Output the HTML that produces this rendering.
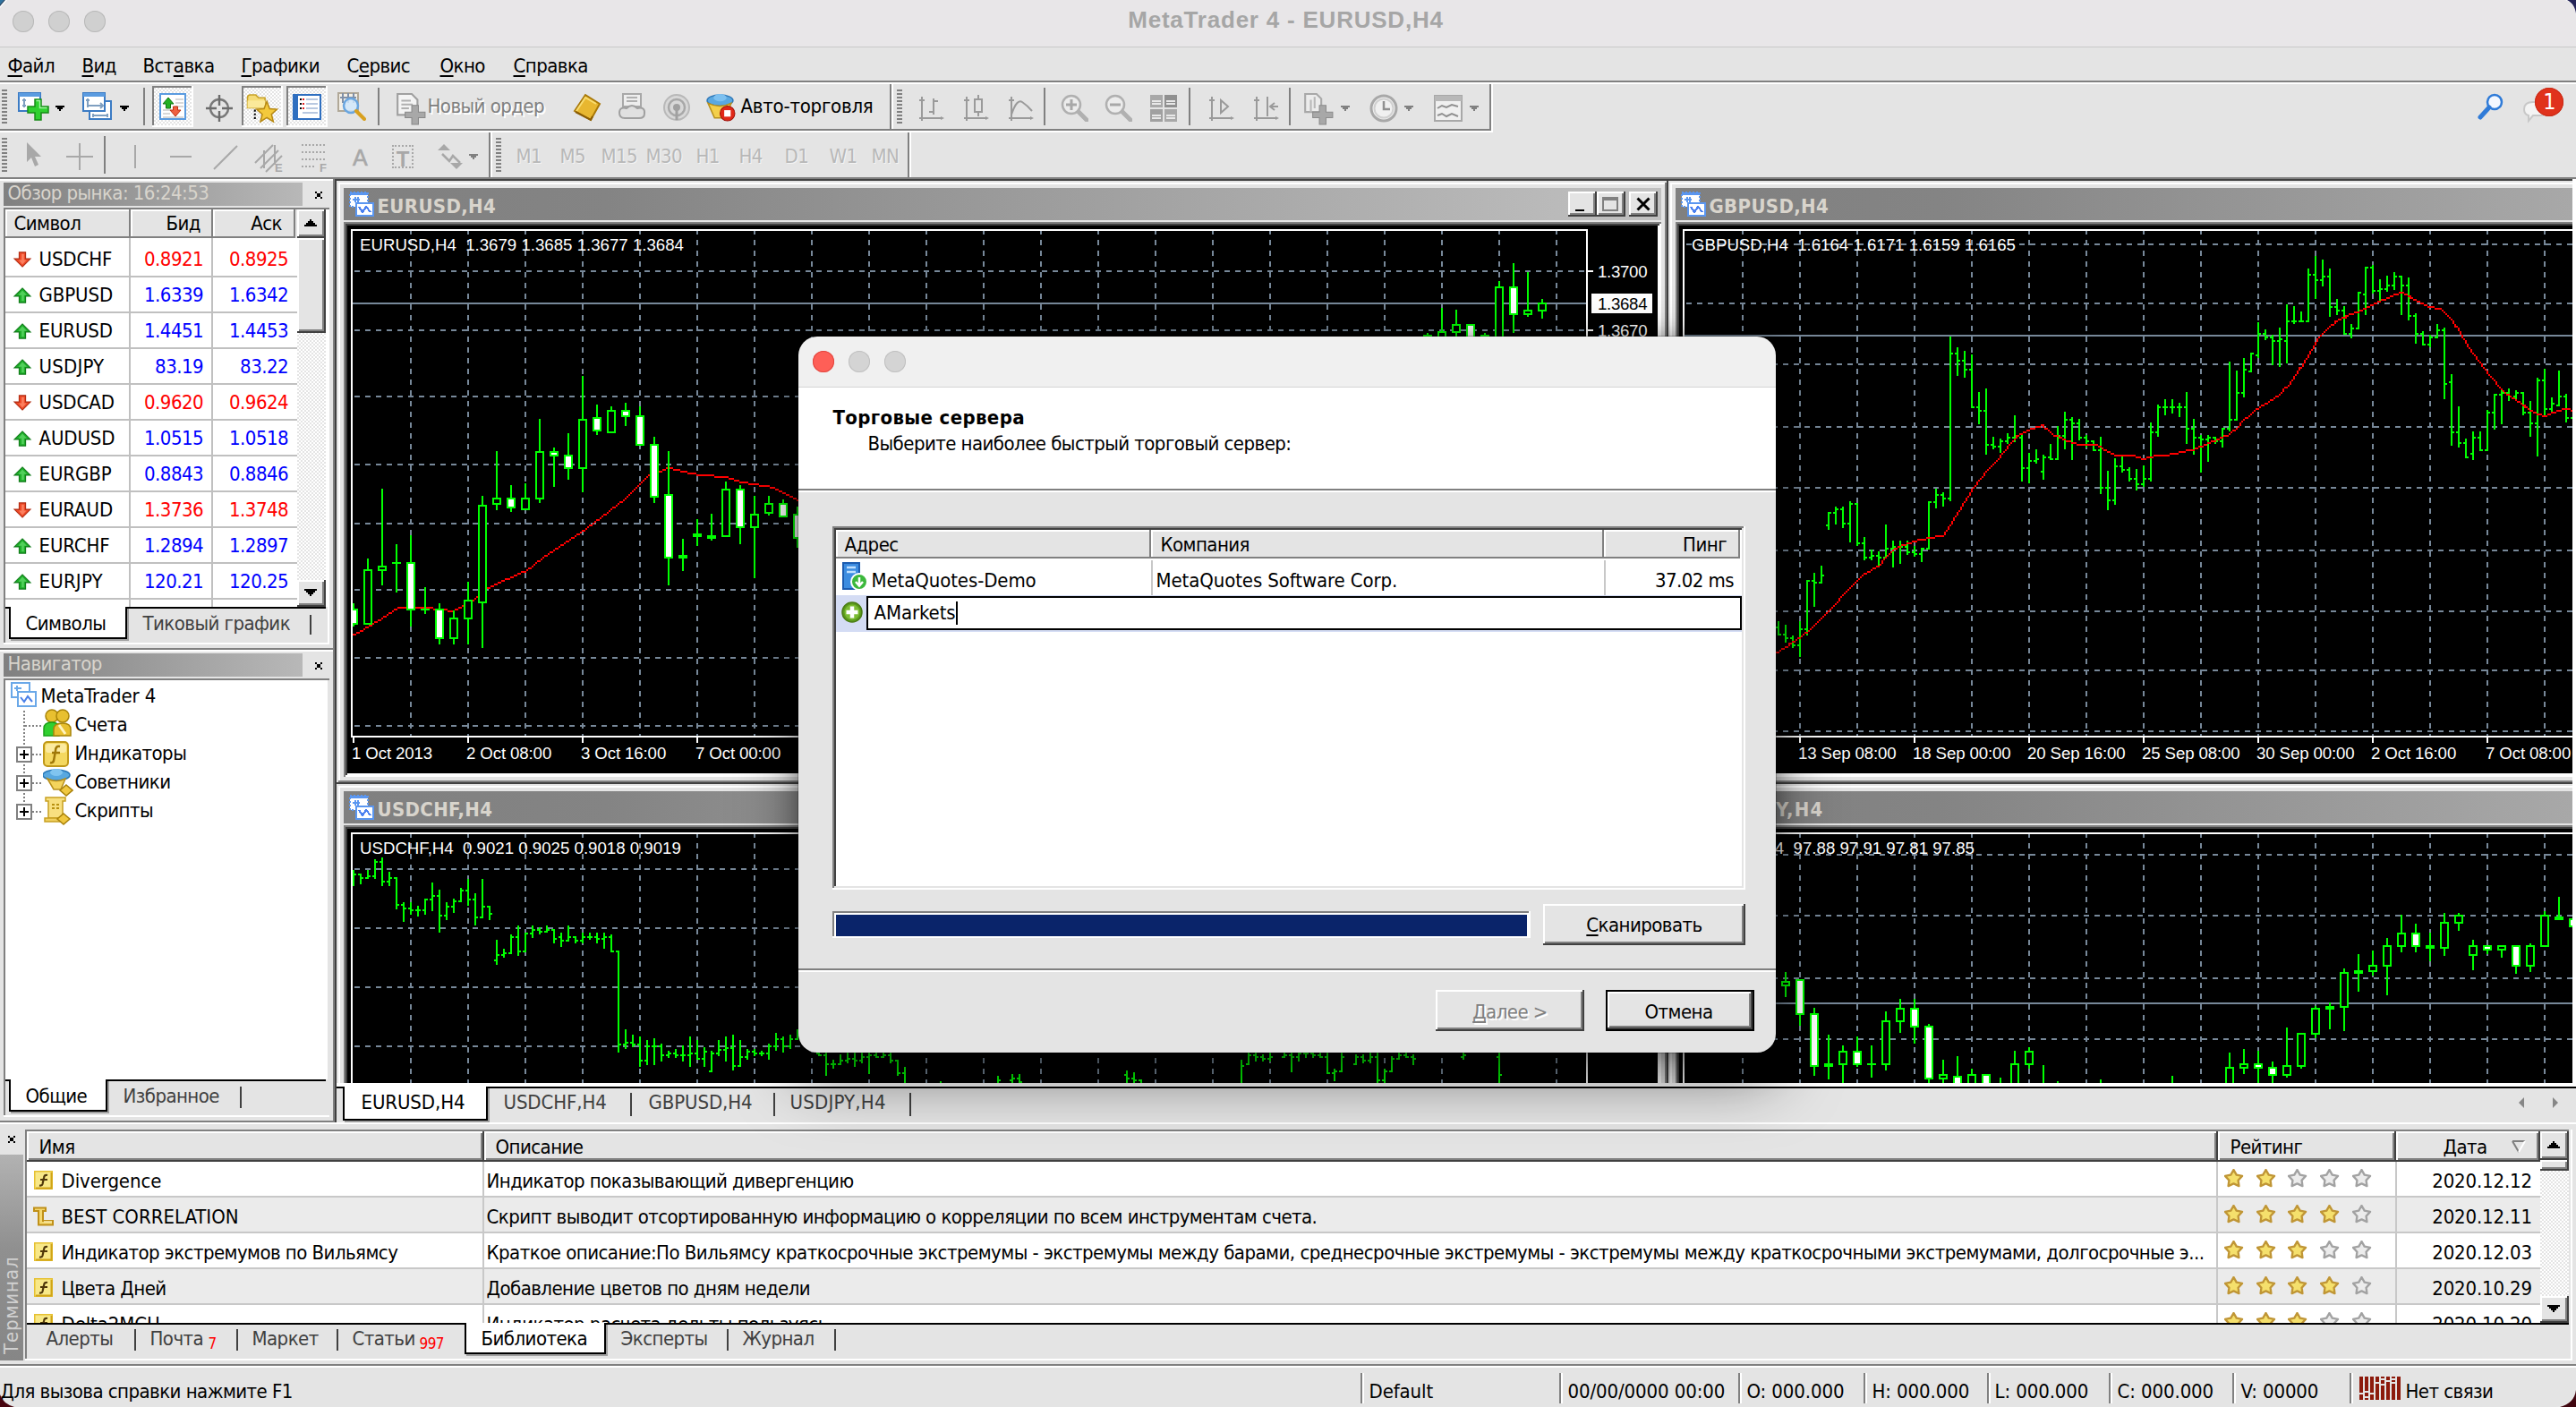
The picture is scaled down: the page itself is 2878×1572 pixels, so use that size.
<!DOCTYPE html><html lang="ru"><head><meta charset="utf-8"><title>MetaTrader 4 - EURUSD,H4</title><style>
html,body{margin:0;padding:0}
body{width:2878px;height:1572px;overflow:hidden;position:relative;background:#e4e4e4;font-family:'DejaVu Sans Condensed','DejaVu Sans','Liberation Sans',sans-serif;font-size:22px;color:#000}
div,svg{position:absolute;box-sizing:content-box}
.t{white-space:pre;line-height:26px;letter-spacing:-0.55px}
.u{text-decoration:underline;text-decoration-thickness:2px;text-underline-offset:3px;text-decoration-skip-ink:none}
</style></head><body><div style="left:0px;top:0px;width:2878px;height:52px;background:#e8e6e8;"></div><div style="left:0px;top:52px;width:2878px;height:1px;background:#c9c9c9;"></div><svg style="left:0px;top:0px;" width="12" height="12" viewBox="0 0 12 12"><path d="M0 0H8L0 9Z" fill="#fff"/><path d="M0 0H6L0 7Z" fill="#2f4a66"/><path d="M0 0H4.5L0 5Z" fill="#2f73a0"/></svg><svg style="left:2862px;top:0px;" width="16" height="20" viewBox="0 0 16 20"><path d="M4 0H16V18C16 9 12 3 4 0Z" fill="#fff"/><path d="M6 0H16V15C15 8 12 3 6 0Z" fill="#232356"/></svg><div style="left:14px;top:12px;width:24px;height:24px;border-radius:50%;background:#d0d0d0;box-shadow:inset 0 0 0 1px #b9b9b9;"></div><div style="left:54px;top:12px;width:24px;height:24px;border-radius:50%;background:#d0d0d0;box-shadow:inset 0 0 0 1px #b9b9b9;"></div><div style="left:94px;top:12px;width:24px;height:24px;border-radius:50%;background:#d0d0d0;box-shadow:inset 0 0 0 1px #b9b9b9;"></div><div class="t" style="top:7.4px;font-size:26px;line-height:31px;color:#a6a6a6;font-family:'Liberation Sans','DejaVu Sans',sans-serif;font-weight:700;letter-spacing:0.78px;left:936.5px;width:1000px;text-align:center;">MetaTrader 4 - EURUSD,H4</div><div class="t" style="top:61.0px;font-size:22px;line-height:26px;color:#000;left:8.5px;"><span class="u">Ф</span>айл</div><div class="t" style="top:61.0px;font-size:22px;line-height:26px;color:#000;left:91.5px;"><span class="u">В</span>ид</div><div class="t" style="top:61.0px;font-size:22px;line-height:26px;color:#000;left:159.5px;">Вст<span class="u">а</span>вка</div><div class="t" style="top:61.0px;font-size:22px;line-height:26px;color:#000;left:269.5px;"><span class="u">Г</span>рафики</div><div class="t" style="top:61.0px;font-size:22px;line-height:26px;color:#000;left:387.5px;">С<span class="u">е</span>рвис</div><div class="t" style="top:61.0px;font-size:22px;line-height:26px;color:#000;left:491.5px;"><span class="u">О</span>кно</div><div class="t" style="top:61.0px;font-size:22px;line-height:26px;color:#000;left:573.5px;"><span class="u">С</span>правка</div><div style="left:0px;top:90px;width:2878px;height:2px;background:#808080;"></div><div style="left:0px;top:92px;width:2878px;height:2px;background:#fff;"></div><div style="left:0px;top:144px;width:1666px;height:2px;background:#808080;"></div><div style="left:0px;top:146px;width:1668px;height:2px;background:#fff;"></div><div style="left:1666px;top:144px;width:1212px;height:2px;background:#e4e4e4;"></div><div style="left:994px;top:94px;width:2px;height:50px;background:#808080;"></div><div style="left:996px;top:94px;width:2px;height:50px;background:#fff;"></div><div style="left:1664px;top:94px;width:2px;height:50px;background:#808080;"></div><div style="left:1666px;top:94px;width:2px;height:52px;background:#fff;"></div><div style="left:2px;top:100px;width:6px;height:38px;background:repeating-linear-gradient(#808080 0 2px,transparent 2px 4px);"></div><svg style="left:20px;top:103px;" width="36" height="33" viewBox="0 0 36 33"><rect x="1" y="1" width="24" height="20" fill="#fff" stroke="#3b7bc4" stroke-width="2"/><rect x="1" y="1" width="24" height="4" fill="#5a9be0"/><path d="M7 7V17M5 9H9M5 15H9" stroke="#7f9fc0" stroke-width="2"/><path d="M19 8H26V16H34V23H26V31H19V23H11V16H19Z" fill="#2fd02f" stroke="#178a17" stroke-width="1.5"/><path d="M20.5 9.5H24.5V17.5H32.5" stroke="#9df59d" stroke-width="1.5" fill="none"/></svg><svg style="left:62px;top:118px;shape-rendering:crispEdges;" width="10" height="6" viewBox="0 0 10 6"><path d="M0 0H10V2H8V4H6V6H4V4H2V2H0Z" fill="#000"/></svg><svg style="left:92px;top:103px;" width="34" height="32" viewBox="0 0 34 32"><rect x="8" y="10" width="24" height="20" fill="#fff" stroke="#3b7bc4" stroke-width="2"/><path d="M12 26H28M12 24V28M28 24V28" stroke="#7f9fc0" stroke-width="2"/><rect x="1" y="1" width="24" height="20" fill="#fff" stroke="#3b7bc4" stroke-width="2"/><rect x="1" y="1" width="24" height="4" fill="#5a9be0"/><path d="M6 7V17M4 9H8M6 15H22M20 12L23 15L20 18" stroke="#7f9fc0" stroke-width="2" fill="none"/></svg><svg style="left:134px;top:118px;shape-rendering:crispEdges;" width="10" height="6" viewBox="0 0 10 6"><path d="M0 0H10V2H8V4H6V6H4V4H2V2H0Z" fill="#000"/></svg><div style="left:160px;top:98px;width:2px;height:42px;background:#808080;"></div><div style="left:170px;top:96px;width:46px;height:46px;background-image:conic-gradient(#fff 25%,#e4e4e4 0 50%,#fff 0 75%,#e4e4e4 0);background-size:4px 4px;box-shadow:inset -2px -2px 0 #fff,inset 2px 2px 0 #808080;"></div><svg style="left:178px;top:104px;" width="30" height="30" viewBox="0 0 30 30"><rect x="1" y="1" width="28" height="28" fill="#fff" stroke="#5a9be0" stroke-width="2"/><path d="M18 7H27M18 11H27M18 15H27M4 19H12M4 23H12M4 27H27" stroke="#d8d8d8" stroke-width="2"/><path d="M10 5L16 12H12.5V17H7.5V12H4Z" fill="#22b022" stroke="#147514" stroke-width="1"/><path d="M18 26L12 19H15.5V15H20.5V19H24Z" fill="#f06040" stroke="#c03010" stroke-width="1"/></svg><svg style="left:229px;top:105px;" width="32" height="32" viewBox="0 0 32 32"><circle cx="16" cy="16" r="10" fill="none" stroke="#787878" stroke-width="2.4"/><path d="M16 1V13M16 19V31M1 16H13M19 16H31" stroke="#6c6c6c" stroke-width="2.4"/></svg><div style="left:270px;top:96px;width:46px;height:46px;background-image:conic-gradient(#fff 25%,#e4e4e4 0 50%,#fff 0 75%,#e4e4e4 0);background-size:4px 4px;box-shadow:inset -2px -2px 0 #fff,inset 2px 2px 0 #808080;"></div><svg style="left:275px;top:103px;" width="36" height="34" viewBox="0 0 34 33"><path d="M1 6Q1 3 4 3H10L13 6H20V17H1Z" fill="#f5dc78" stroke="#c9a227" stroke-width="1.5"/><path d="M1 9H20V17H1Z" fill="#fbe99a"/><path d="M9 19V29" stroke="#000" stroke-width="2" stroke-dasharray="2 2"/><path d="M22 10L25 18L33 18.5L27 24L29 32L22 27.5L15 32L17 24L11 18.5L19 18Z" fill="#f3c93c" stroke="#b88a14" stroke-width="1.5"/></svg><div style="left:320px;top:96px;width:46px;height:46px;background-image:conic-gradient(#fff 25%,#e4e4e4 0 50%,#fff 0 75%,#e4e4e4 0);background-size:4px 4px;box-shadow:inset -2px -2px 0 #fff,inset 2px 2px 0 #808080;"></div><svg style="left:327px;top:104px;" width="32" height="32" viewBox="0 0 32 32"><rect x="1" y="2" width="30" height="27" fill="#fff" stroke="#2f6fc0" stroke-width="2"/><rect x="2" y="3" width="4" height="25" fill="#2f6fc0"/><path d="M8 7H10M8 12H10M8 17H10" stroke="#000" stroke-width="2"/><path d="M11 7H13M11 12H13M11 17H13" stroke="#e02020" stroke-width="2"/><path d="M15 7H28M15 12H28M15 17H28M11 22H28" stroke="#b8c8e0" stroke-width="2"/></svg><svg style="left:377px;top:103px;" width="32" height="32" viewBox="0 0 32 32"><rect x="1" y="1" width="22" height="20" fill="#f4f0e8" stroke="#b0a898" stroke-width="2"/><path d="M6 1V12M12 1V12M18 1V12M3 6H21" stroke="#8090a8" stroke-width="2"/><circle cx="15" cy="15" r="8" fill="#cfe6fa" fill-opacity=".85" stroke="#6aa6e0" stroke-width="2.5"/><path d="M21 21L30 30" stroke="#d8a020" stroke-width="4" stroke-linecap="round"/></svg><div style="left:422px;top:98px;width:2px;height:42px;background:#808080;"></div><svg style="left:442px;top:104px;" width="34" height="36" viewBox="0 0 32 34"><path d="M2 1H17L23 7V23H2Z" fill="#f4f4f4" stroke="#a0a0a0" stroke-width="2"/><path d="M6 8H16M6 12H18M6 16H14" stroke="#b0b0b0" stroke-width="2"/><path d="M17 13H24V20H31V26H24V33H17V26H10V20H17Z" fill="#a8a8a8" stroke="#888" stroke-width="1"/></svg><div class="t" style="top:106.0px;font-size:22px;line-height:26px;color:#808080;left:477.5px;text-shadow:2px 2px 0 #fff;">Новый ордер</div><svg style="left:640px;top:104px;" width="32" height="32" viewBox="0 0 32 32"><path d="M2 20L14 2L30 12L20 30Z" fill="#e8b730" stroke="#a87808" stroke-width="2"/><path d="M4 20L14 5L26 12" fill="none" stroke="#f8dc70" stroke-width="2"/><path d="M3 21L20 30L22 26" fill="none" stroke="#8a5c04" stroke-width="2"/></svg><svg style="left:690px;top:104px;" width="32" height="32" viewBox="0 0 32 32"><rect x="6" y="1" width="20" height="14" fill="#eee" stroke="#a8a8a8" stroke-width="2"/><path d="M10 5H22M10 9H22" stroke="#b0b0b0" stroke-width="2"/><path d="M2 22Q2 15 10 17Q16 11 22 17Q31 15 30 23Q30 28 24 28H8Q2 28 2 22Z" fill="#e0e0e0" stroke="#a0a0a0" stroke-width="2"/></svg><svg style="left:740px;top:104px;" width="32" height="32" viewBox="0 0 32 32"><circle cx="16" cy="16" r="14" fill="#d8d8d8" stroke="#b8b8b8" stroke-width="2"/><circle cx="16" cy="16" r="9" fill="none" stroke="#a8a8a8" stroke-width="2.5"/><circle cx="16" cy="16" r="4" fill="#a0a0a0"/><path d="M16 16V30" stroke="#a0a0a0" stroke-width="3"/></svg><svg style="left:788px;top:103px;" width="34" height="34" viewBox="0 0 33 33"><ellipse cx="16" cy="9" rx="14" ry="6" fill="#5aa8e0" stroke="#2f78b8" stroke-width="1.5"/><ellipse cx="16" cy="6" rx="7" ry="4" fill="#7cc0f0"/><path d="M3 12L10 28H22L28 12Q16 18 3 12Z" fill="#f3cf4a" stroke="#b8901c" stroke-width="1.5"/><circle cx="24" cy="23" r="8" fill="#e02818" stroke="#a01008" stroke-width="1"/><rect x="20.5" y="19.5" width="7" height="7" fill="#fff"/></svg><div class="t" style="top:106.0px;font-size:22px;line-height:26px;color:#000;letter-spacing:-0.22px;left:827.5px;">Авто-торговля</div><div style="left:1002px;top:100px;width:6px;height:38px;background:repeating-linear-gradient(#808080 0 2px,transparent 2px 4px);"></div><svg style="left:1024px;top:104px;" width="32" height="32" viewBox="0 0 32 32"><path d="M3 28H29M6 4V31M3 8H9M19 6V24M14 21H19M19 9H24" stroke="#9a9a9a" stroke-width="2" fill="none"/><path d="M27 26L31 28L27 30Z" fill="#9a9a9a"/></svg><svg style="left:1074px;top:104px;" width="32" height="32" viewBox="0 0 32 32"><path d="M3 28H29M6 4V31M3 8H9M19 2V26" stroke="#9a9a9a" stroke-width="2" fill="none"/><rect x="15" y="7" width="8" height="14" fill="#e4e4e4" stroke="#9a9a9a" stroke-width="2"/><path d="M27 26L31 28L27 30Z" fill="#9a9a9a"/></svg><svg style="left:1124px;top:104px;" width="32" height="32" viewBox="0 0 32 32"><path d="M3 28H29M6 4V31M3 8H9" stroke="#9a9a9a" stroke-width="2" fill="none"/><path d="M6 24Q12 6 18 10T29 20" stroke="#9a9a9a" stroke-width="2" fill="none"/><path d="M27 26L31 28L27 30Z" fill="#9a9a9a"/></svg><div style="left:1166px;top:98px;width:2px;height:42px;background:#808080;"></div><svg style="left:1184px;top:104px;" width="32" height="32" viewBox="0 0 32 32"><circle cx="13" cy="13" r="10" fill="#ececec" stroke="#b0b0b0" stroke-width="2.5"/><path d="M7 13H19" stroke="#a8a8a8" stroke-width="3"/><path d="M13 7V19" stroke="#a8a8a8" stroke-width="3"/><path d="M21 21L30 30" stroke="#b0b0b0" stroke-width="5" stroke-linecap="round"/></svg><svg style="left:1233px;top:104px;" width="32" height="32" viewBox="0 0 32 32"><circle cx="13" cy="13" r="10" fill="#ececec" stroke="#b0b0b0" stroke-width="2.5"/><path d="M7 13H19" stroke="#a8a8a8" stroke-width="3"/><path d="M21 21L30 30" stroke="#b0b0b0" stroke-width="5" stroke-linecap="round"/></svg><svg style="left:1284px;top:105px;" width="32" height="32" viewBox="0 0 32 32"><rect x="1" y="1" width="14" height="14" fill="#a8a8a8"/><rect x="17" y="1" width="14" height="14" fill="#909090"/><rect x="1" y="17" width="14" height="14" fill="#a0a0a0"/><rect x="17" y="17" width="14" height="14" fill="#a8a8a8"/><path d="M3 8H13M19 8H29M3 24H13M19 24H29M3 11H13M19 11H29M3 27H13M19 27H29" stroke="#e8e8e8" stroke-width="2"/></svg><div style="left:1328px;top:98px;width:2px;height:42px;background:#808080;"></div><svg style="left:1348px;top:104px;" width="32" height="32" viewBox="0 0 32 32"><path d="M3 28H29M6 4V31M3 8H9" stroke="#9a9a9a" stroke-width="2" fill="none"/><path d="M16 8L24 15L16 22Z" fill="none" stroke="#9a9a9a" stroke-width="2"/><path d="M27 26L31 28L27 30Z" fill="#9a9a9a"/></svg><svg style="left:1398px;top:104px;" width="32" height="32" viewBox="0 0 32 32"><path d="M3 28H29M6 4V31M3 8H9M18 4V26M30 15H22M26 11L21 15L26 19" stroke="#9a9a9a" stroke-width="2" fill="none"/><path d="M27 26L31 28L27 30Z" fill="#9a9a9a"/></svg><div style="left:1440px;top:98px;width:2px;height:42px;background:#808080;"></div><svg style="left:1456px;top:104px;" width="34" height="36" viewBox="0 0 32 34"><path d="M2 1H14L19 6V20H2Z" fill="#ececec" stroke="#a8a8a8" stroke-width="2"/><path d="M8 7V20M12 4V16" stroke="#b8b8b8" stroke-width="2"/><path d="M17 13H24V20H31V26H24V33H17V26H10V20H17Z" fill="#a8a8a8" stroke="#8c8c8c" stroke-width="1"/></svg><svg style="left:1498px;top:118px;shape-rendering:crispEdges;" width="10" height="6" viewBox="0 0 10 6"><path d="M0 0H10V2H8V4H6V6H4V4H2V2H0Z" fill="#808080"/></svg><svg style="left:1530px;top:105px;" width="32" height="32" viewBox="0 0 32 32"><circle cx="16" cy="16" r="14" fill="#f0f0f0" stroke="#a8a8a8" stroke-width="3"/><circle cx="16" cy="16" r="10.5" fill="none" stroke="#d0d0d0" stroke-width="2"/><path d="M16 8V17H23" stroke="#909090" stroke-width="2.5" fill="none"/></svg><svg style="left:1569px;top:118px;shape-rendering:crispEdges;" width="10" height="6" viewBox="0 0 10 6"><path d="M0 0H10V2H8V4H6V6H4V4H2V2H0Z" fill="#808080"/></svg><svg style="left:1602px;top:105px;" width="32" height="32" viewBox="0 0 32 32"><rect x="1" y="2" width="30" height="28" fill="#f0f0f0" stroke="#a8a8a8" stroke-width="2"/><rect x="1" y="2" width="30" height="6" fill="#b8b8b8"/><path d="M4 16L9 13L14 15L20 12L27 14M4 24L9 22L14 25L20 22L27 25" stroke="#909090" stroke-width="2" fill="none"/></svg><svg style="left:1642px;top:118px;shape-rendering:crispEdges;" width="10" height="6" viewBox="0 0 10 6"><path d="M0 0H10V2H8V4H6V6H4V4H2V2H0Z" fill="#808080"/></svg><svg style="left:2768px;top:104px;" width="30" height="30" viewBox="0 0 30 30"><circle cx="19" cy="10" r="8" fill="#f4f8ff" stroke="#2f7bd8" stroke-width="2.5"/><path d="M13 16L3 27" stroke="#2f7bd8" stroke-width="5" stroke-linecap="round"/></svg><svg style="left:2818px;top:112px;" width="30" height="28" viewBox="0 0 30 28"><path d="M2 10Q2 2 12 2H20Q28 2 28 10Q28 17 20 17H12L7 23V17Q2 16 2 10Z" fill="#f4f4f4" stroke="#c8c8c8" stroke-width="2"/></svg><div style="left:2832px;top:98px;width:32px;height:32px;border-radius:50%;background:#e0321c;box-shadow:inset 0 0 0 1px #c82a16;"></div><div class="t" style="top:99.2px;font-size:25px;line-height:30px;color:#fff;letter-spacing:0px;left:2348.5px;width:1000px;text-align:center;">1</div><div style="left:0px;top:198px;width:2878px;height:2px;background:#808080;"></div><div style="left:0px;top:200px;width:372px;height:2px;background:#fff;"></div><div style="left:546px;top:148px;width:2px;height:50px;background:#808080;"></div><div style="left:548px;top:148px;width:2px;height:50px;background:#fff;"></div><div style="left:1014px;top:148px;width:2px;height:50px;background:#808080;"></div><div style="left:1016px;top:148px;width:2px;height:50px;background:#fff;"></div><div style="left:2px;top:154px;width:6px;height:38px;background:repeating-linear-gradient(#808080 0 2px,transparent 2px 4px);"></div><svg style="left:28px;top:158px;" width="20" height="30" viewBox="0 0 20 30"><path d="M2 1V23L7 18L11 28L15 26L11 17H18Z" fill="#a8a8a8"/></svg><svg style="left:74px;top:160px;shape-rendering:crispEdges;" width="30" height="30" viewBox="0 0 30 30"><path d="M15 0V30M0 15H30" stroke="#a8a8a8" stroke-width="2"/></svg><div style="left:116px;top:152px;width:2px;height:42px;background:#808080;"></div><div style="left:150px;top:162px;width:2px;height:26px;background:#a8a8a8;"></div><div style="left:190px;top:174px;width:24px;height:2px;background:#a8a8a8;"></div><svg style="left:238px;top:162px;" width="28" height="28" viewBox="0 0 28 28"><path d="M1 27L27 1" stroke="#a8a8a8" stroke-width="2"/></svg><svg style="left:283px;top:158px;" width="36" height="36" viewBox="0 0 36 36"><path d="M2 24L22 4M8 30L28 10M14 34L32 16M12 10V30M24 4V26" stroke="#a8a8a8" stroke-width="2" fill="none"/></svg><div class="t" style="top:180.0px;font-size:13px;line-height:15px;color:#a8a8a8;font-family:'Liberation Sans','DejaVu Sans',sans-serif;font-weight:700;letter-spacing:0px;left:307px;">E</div><svg style="left:337px;top:160px;shape-rendering:crispEdges;" width="26" height="28" viewBox="0 0 26 28"><path d="M0 2H26M0 10H26M0 18H26M0 26H16" stroke="#a8a8a8" stroke-width="2" stroke-dasharray="2 2"/></svg><div class="t" style="top:180.0px;font-size:13px;line-height:15px;color:#a8a8a8;font-family:'Liberation Sans','DejaVu Sans',sans-serif;font-weight:700;letter-spacing:0px;left:357px;">F</div><div class="t" style="top:160.9px;font-size:25px;line-height:30px;color:#a8a8a8;font-family:'Liberation Sans','DejaVu Sans',sans-serif;letter-spacing:0px;left:394px;-webkit-text-stroke:0.6px #a8a8a8;">A</div><div style="left:438px;top:162px;width:24px;height:26px;border:2px dotted #a8a8a8;box-sizing:border-box;"></div><div class="t" style="top:163.8px;font-size:24px;line-height:28px;color:#a8a8a8;font-family:'Liberation Sans','DejaVu Sans',sans-serif;font-weight:700;letter-spacing:0px;left:-50px;width:1000px;text-align:center;">T</div><svg style="left:488px;top:160px;" width="30" height="30" viewBox="0 0 30 30"><path d="M8 1L15 8H1ZM22 29L15 22H29Z" fill="#a8a8a8"/><path d="M6 12L14 20L18 14L26 22" stroke="#a8a8a8" stroke-width="2.5" fill="none"/></svg><svg style="left:524px;top:172px;shape-rendering:crispEdges;" width="10" height="6" viewBox="0 0 10 6"><path d="M0 0H10V2H8V4H6V6H4V4H2V2H0Z" fill="#808080"/></svg><div style="left:554px;top:154px;width:6px;height:38px;background:repeating-linear-gradient(#808080 0 2px,transparent 2px 4px);"></div><div class="t" style="top:161.5px;font-size:22px;line-height:26px;color:#b8b8b8;letter-spacing:-0.6px;left:576.5px;text-shadow:1px 1px 0 #f4f4f4;">M1</div><div class="t" style="top:161.5px;font-size:22px;line-height:26px;color:#b8b8b8;letter-spacing:-0.6px;left:625.5px;text-shadow:1px 1px 0 #f4f4f4;">M5</div><div class="t" style="top:161.5px;font-size:22px;line-height:26px;color:#b8b8b8;letter-spacing:-0.6px;left:671.5px;text-shadow:1px 1px 0 #f4f4f4;">M15</div><div class="t" style="top:161.5px;font-size:22px;line-height:26px;color:#b8b8b8;letter-spacing:-0.6px;left:721.5px;text-shadow:1px 1px 0 #f4f4f4;">M30</div><div class="t" style="top:161.5px;font-size:22px;line-height:26px;color:#b8b8b8;letter-spacing:-0.6px;left:777.5px;text-shadow:1px 1px 0 #f4f4f4;">H1</div><div class="t" style="top:161.5px;font-size:22px;line-height:26px;color:#b8b8b8;letter-spacing:-0.6px;left:825.5px;text-shadow:1px 1px 0 #f4f4f4;">H4</div><div class="t" style="top:161.5px;font-size:22px;line-height:26px;color:#b8b8b8;letter-spacing:-0.6px;left:876.5px;text-shadow:1px 1px 0 #f4f4f4;">D1</div><div class="t" style="top:161.5px;font-size:22px;line-height:26px;color:#b8b8b8;letter-spacing:-0.6px;left:926.5px;text-shadow:1px 1px 0 #f4f4f4;">W1</div><div class="t" style="top:161.5px;font-size:22px;line-height:26px;color:#b8b8b8;letter-spacing:-0.6px;left:973.5px;text-shadow:1px 1px 0 #f4f4f4;">MN</div><div style="left:4px;top:204px;width:334px;height:26px;background:linear-gradient(90deg,#808080,#b8b8b8);"></div><div class="t" style="top:203.2px;font-size:22px;line-height:26px;color:#d8d4cc;left:8.5px;">Обзор рынка: 16:24:53</div><svg style="left:352px;top:214px;shape-rendering:crispEdges;" width="8" height="8" viewBox="0 0 8 8"><path d="M0 0h2v2h-2zM6 0h2v2h-2zM2 2h4v4h-4zM0 6h2v2h-2zM6 6h2v2h-2z" fill="#000"/></svg><div style="left:4px;top:232px;width:364px;height:486px;background:#fff;"></div><div style="left:4px;top:232px;width:364px;height:486px;box-shadow:inset 2px 2px 0 #808080,inset -4px 0 0 #fff;"></div><div style="left:6px;top:234px;width:326px;height:32px;background:#e4e4e4;"></div><div style="left:6px;top:234px;width:140px;height:32px;box-shadow:inset -2px -2px 0 #808080,inset 2px 2px 0 #fff;"></div><div style="left:146px;top:234px;width:92px;height:32px;box-shadow:inset -2px -2px 0 #808080,inset 2px 2px 0 #fff;"></div><div style="left:238px;top:234px;width:92px;height:32px;box-shadow:inset -2px -2px 0 #808080,inset 2px 2px 0 #fff;"></div><div class="t" style="top:237.0px;font-size:22px;line-height:26px;color:#000;left:15.5px;">Символ</div><div class="t" style="top:237.0px;font-size:22px;line-height:26px;color:#000;right:2654px;">Бид</div><div class="t" style="top:237.0px;font-size:22px;line-height:26px;color:#000;right:2563px;">Аск</div><div style="left:332px;top:234px;width:32px;height:444px;background-image:conic-gradient(#fff 25%,#e4e4e4 0 50%,#fff 0 75%,#e4e4e4 0);background-size:4px 4px;"></div><div style="left:332px;top:234px;width:32px;height:32px;background:#e4e4e4;box-shadow:inset -2px -2px 0 #404040,inset 2px 2px 0 #fff,inset -4px -4px 0 #808080,inset 4px 4px 0 #e4e4e4;"></div><svg style="left:340px;top:245px;shape-rendering:crispEdges;" width="14" height="8" viewBox="0 0 14 8"><path d="M0 8H14V6H12V4H10V2H8V0H6V2H4V4H2V6H0Z" fill="#000"/></svg><div style="left:332px;top:266px;width:32px;height:106px;background:#e4e4e4;box-shadow:inset -2px -2px 0 #404040,inset 2px 2px 0 #fff,inset -4px -4px 0 #808080,inset 4px 4px 0 #e4e4e4;"></div><div style="left:332px;top:648px;width:32px;height:30px;background:#e4e4e4;box-shadow:inset -2px -2px 0 #404040,inset 2px 2px 0 #fff,inset -4px -4px 0 #808080,inset 4px 4px 0 #e4e4e4;"></div><svg style="left:340px;top:658px;shape-rendering:crispEdges;" width="14" height="8" viewBox="0 0 14 8"><path d="M0 0H14V2H12V4H10V6H8V8H6V6H4V4H2V2H0Z" fill="#000"/></svg><div style="left:6px;top:308px;width:326px;height:2px;background:#c0c0c0;"></div><svg style="left:14px;top:281px;" width="22" height="18" viewBox="0 0 22 20"><path d="M11 19L21 9H15V1H7V9H1Z" fill="#ee4a28" stroke="#b02a10" stroke-width="1.2"/><path d="M11 16L16 10.5H13V3H10V10.5H6.5Z" fill="#ff8c6c" opacity=".8"/></svg><div class="t" style="top:277.0px;font-size:22px;line-height:26px;color:#000;letter-spacing:-0.1px;left:43.5px;">USDCHF</div><div class="t" style="top:277.0px;font-size:22px;line-height:26px;color:#ff0000;right:2651px;">0.8921</div><div class="t" style="top:277.0px;font-size:22px;line-height:26px;color:#ff0000;right:2556px;">0.8925</div><div style="left:6px;top:348px;width:326px;height:2px;background:#c0c0c0;"></div><svg style="left:14px;top:321px;" width="22" height="18" viewBox="0 0 22 20"><path d="M11 1L21 11H15V19H7V11H1Z" fill="#1fae2a" stroke="#0f7a18" stroke-width="1.2"/><path d="M11 4L16.5 9.7H13V17H10V9.7H6Z" fill="#5fd868" opacity=".8"/></svg><div class="t" style="top:317.0px;font-size:22px;line-height:26px;color:#000;letter-spacing:-0.1px;left:43.5px;">GBPUSD</div><div class="t" style="top:317.0px;font-size:22px;line-height:26px;color:#0000ff;right:2651px;">1.6339</div><div class="t" style="top:317.0px;font-size:22px;line-height:26px;color:#0000ff;right:2556px;">1.6342</div><div style="left:6px;top:388px;width:326px;height:2px;background:#c0c0c0;"></div><svg style="left:14px;top:361px;" width="22" height="18" viewBox="0 0 22 20"><path d="M11 1L21 11H15V19H7V11H1Z" fill="#1fae2a" stroke="#0f7a18" stroke-width="1.2"/><path d="M11 4L16.5 9.7H13V17H10V9.7H6Z" fill="#5fd868" opacity=".8"/></svg><div class="t" style="top:357.0px;font-size:22px;line-height:26px;color:#000;letter-spacing:-0.1px;left:43.5px;">EURUSD</div><div class="t" style="top:357.0px;font-size:22px;line-height:26px;color:#0000ff;right:2651px;">1.4451</div><div class="t" style="top:357.0px;font-size:22px;line-height:26px;color:#0000ff;right:2556px;">1.4453</div><div style="left:6px;top:428px;width:326px;height:2px;background:#c0c0c0;"></div><svg style="left:14px;top:401px;" width="22" height="18" viewBox="0 0 22 20"><path d="M11 1L21 11H15V19H7V11H1Z" fill="#1fae2a" stroke="#0f7a18" stroke-width="1.2"/><path d="M11 4L16.5 9.7H13V17H10V9.7H6Z" fill="#5fd868" opacity=".8"/></svg><div class="t" style="top:397.0px;font-size:22px;line-height:26px;color:#000;letter-spacing:0.2px;left:43.5px;">USDJPY</div><div class="t" style="top:397.0px;font-size:22px;line-height:26px;color:#0000ff;right:2651px;">83.19</div><div class="t" style="top:397.0px;font-size:22px;line-height:26px;color:#0000ff;right:2556px;">83.22</div><div style="left:6px;top:468px;width:326px;height:2px;background:#c0c0c0;"></div><svg style="left:14px;top:441px;" width="22" height="18" viewBox="0 0 22 20"><path d="M11 19L21 9H15V1H7V9H1Z" fill="#ee4a28" stroke="#b02a10" stroke-width="1.2"/><path d="M11 16L16 10.5H13V3H10V10.5H6.5Z" fill="#ff8c6c" opacity=".8"/></svg><div class="t" style="top:437.0px;font-size:22px;line-height:26px;color:#000;letter-spacing:-0.1px;left:43.5px;">USDCAD</div><div class="t" style="top:437.0px;font-size:22px;line-height:26px;color:#ff0000;right:2651px;">0.9620</div><div class="t" style="top:437.0px;font-size:22px;line-height:26px;color:#ff0000;right:2556px;">0.9624</div><div style="left:6px;top:508px;width:326px;height:2px;background:#c0c0c0;"></div><svg style="left:14px;top:481px;" width="22" height="18" viewBox="0 0 22 20"><path d="M11 1L21 11H15V19H7V11H1Z" fill="#1fae2a" stroke="#0f7a18" stroke-width="1.2"/><path d="M11 4L16.5 9.7H13V17H10V9.7H6Z" fill="#5fd868" opacity=".8"/></svg><div class="t" style="top:477.0px;font-size:22px;line-height:26px;color:#000;letter-spacing:-0.1px;left:43.5px;">AUDUSD</div><div class="t" style="top:477.0px;font-size:22px;line-height:26px;color:#0000ff;right:2651px;">1.0515</div><div class="t" style="top:477.0px;font-size:22px;line-height:26px;color:#0000ff;right:2556px;">1.0518</div><div style="left:6px;top:548px;width:326px;height:2px;background:#c0c0c0;"></div><svg style="left:14px;top:521px;" width="22" height="18" viewBox="0 0 22 20"><path d="M11 1L21 11H15V19H7V11H1Z" fill="#1fae2a" stroke="#0f7a18" stroke-width="1.2"/><path d="M11 4L16.5 9.7H13V17H10V9.7H6Z" fill="#5fd868" opacity=".8"/></svg><div class="t" style="top:517.0px;font-size:22px;line-height:26px;color:#000;letter-spacing:-0.1px;left:43.5px;">EURGBP</div><div class="t" style="top:517.0px;font-size:22px;line-height:26px;color:#0000ff;right:2651px;">0.8843</div><div class="t" style="top:517.0px;font-size:22px;line-height:26px;color:#0000ff;right:2556px;">0.8846</div><div style="left:6px;top:588px;width:326px;height:2px;background:#c0c0c0;"></div><svg style="left:14px;top:561px;" width="22" height="18" viewBox="0 0 22 20"><path d="M11 19L21 9H15V1H7V9H1Z" fill="#ee4a28" stroke="#b02a10" stroke-width="1.2"/><path d="M11 16L16 10.5H13V3H10V10.5H6.5Z" fill="#ff8c6c" opacity=".8"/></svg><div class="t" style="top:557.0px;font-size:22px;line-height:26px;color:#000;letter-spacing:-0.1px;left:43.5px;">EURAUD</div><div class="t" style="top:557.0px;font-size:22px;line-height:26px;color:#ff0000;right:2651px;">1.3736</div><div class="t" style="top:557.0px;font-size:22px;line-height:26px;color:#ff0000;right:2556px;">1.3748</div><div style="left:6px;top:628px;width:326px;height:2px;background:#c0c0c0;"></div><svg style="left:14px;top:601px;" width="22" height="18" viewBox="0 0 22 20"><path d="M11 1L21 11H15V19H7V11H1Z" fill="#1fae2a" stroke="#0f7a18" stroke-width="1.2"/><path d="M11 4L16.5 9.7H13V17H10V9.7H6Z" fill="#5fd868" opacity=".8"/></svg><div class="t" style="top:597.0px;font-size:22px;line-height:26px;color:#000;letter-spacing:-0.1px;left:43.5px;">EURCHF</div><div class="t" style="top:597.0px;font-size:22px;line-height:26px;color:#0000ff;right:2651px;">1.2894</div><div class="t" style="top:597.0px;font-size:22px;line-height:26px;color:#0000ff;right:2556px;">1.2897</div><div style="left:6px;top:668px;width:326px;height:2px;background:#c0c0c0;"></div><svg style="left:14px;top:641px;" width="22" height="18" viewBox="0 0 22 20"><path d="M11 1L21 11H15V19H7V11H1Z" fill="#1fae2a" stroke="#0f7a18" stroke-width="1.2"/><path d="M11 4L16.5 9.7H13V17H10V9.7H6Z" fill="#5fd868" opacity=".8"/></svg><div class="t" style="top:637.0px;font-size:22px;line-height:26px;color:#000;letter-spacing:0.2px;left:43.5px;">EURJPY</div><div class="t" style="top:637.0px;font-size:22px;line-height:26px;color:#0000ff;right:2651px;">120.21</div><div class="t" style="top:637.0px;font-size:22px;line-height:26px;color:#0000ff;right:2556px;">120.25</div><div style="left:144px;top:266px;width:2px;height:412px;background:#c0c0c0;"></div><div style="left:236px;top:266px;width:2px;height:412px;background:#c0c0c0;"></div><div style="left:6px;top:678px;width:360px;height:40px;background:#e4e4e4;"></div><div style="left:6px;top:678px;width:358px;height:2px;background:#000;"></div><div style="left:10px;top:678px;width:132px;height:36px;background:#fff;border:2px solid #000;border-top:none;box-sizing:border-box;box-shadow:2px 2px 0 #a0a0a0;"></div><div class="t" style="top:683.5px;font-size:22px;line-height:26px;color:#000;left:28.5px;">Символы</div><div class="t" style="top:683.5px;font-size:22px;line-height:26px;color:#404040;left:159.5px;">Тиковый график</div><div style="left:346px;top:687px;width:2px;height:22px;background:#404040;"></div><div style="left:4px;top:718px;width:364px;height:2px;background:#fff;"></div><div style="left:0px;top:724px;width:372px;height:2px;background:#808080;"></div><div style="left:0px;top:726px;width:372px;height:2px;background:#fff;"></div><div style="left:4px;top:730px;width:334px;height:26px;background:linear-gradient(90deg,#808080,#b8b8b8);"></div><div class="t" style="top:729.0px;font-size:22px;line-height:26px;color:#d8d4cc;left:8.5px;">Навигатор</div><svg style="left:352px;top:740px;shape-rendering:crispEdges;" width="8" height="8" viewBox="0 0 8 8"><path d="M0 0h2v2h-2zM6 0h2v2h-2zM2 2h4v4h-4zM0 6h2v2h-2zM6 6h2v2h-2z" fill="#000"/></svg><div style="left:4px;top:758px;width:364px;height:490px;background:#fff;"></div><div style="left:4px;top:758px;width:364px;height:490px;box-shadow:inset 2px 2px 0 #808080,inset -2px 0 0 #e4e4e4;"></div><div style="left:26px;top:794px;width:2px;height:102px;background:repeating-linear-gradient(#808080 0 2px,transparent 2px 4px);"></div><div style="left:28px;top:810px;width:18px;height:2px;background:repeating-linear-gradient(90deg,#808080 0 2px,transparent 2px 4px);"></div><div style="left:36px;top:842px;width:10px;height:2px;background:repeating-linear-gradient(90deg,#808080 0 2px,transparent 2px 4px);"></div><div style="left:36px;top:874px;width:10px;height:2px;background:repeating-linear-gradient(90deg,#808080 0 2px,transparent 2px 4px);"></div><div style="left:36px;top:906px;width:10px;height:2px;background:repeating-linear-gradient(90deg,#808080 0 2px,transparent 2px 4px);"></div><svg style="left:12px;top:762px;" width="30" height="30" viewBox="0 0 30 30"><rect x="1" y="1" width="20" height="16" fill="#fff" stroke="#6aa8e8" stroke-width="2"/><path d="M4 7H12M7 4V10" stroke="#6aa8e8" stroke-width="2"/><rect x="8" y="11" width="20" height="16" fill="#fff" stroke="#6aa8e8" stroke-width="2"/><path d="M11 17L15 22L19 16L24 22" stroke="#4a80e8" stroke-width="2" fill="none"/></svg><div class="t" style="top:764.9px;font-size:22px;line-height:26px;color:#000;letter-spacing:-0.1px;left:45.5px;">MetaTrader 4</div><svg style="left:46px;top:792px;" width="34" height="32" viewBox="0 0 34 32"><circle cx="12" cy="8" r="7" fill="#e8c030" stroke="#a88408" stroke-width="1.5"/><circle cx="24" cy="8" r="7" fill="#e8c030" stroke="#a88408" stroke-width="1.5"/><path d="M3 30V22Q3 15 12 15Q20 15 20 22V30Z" fill="#30d030" stroke="#18a018" stroke-width="1.5"/><path d="M14 30V23Q14 16 24 16Q33 16 33 23V30Z" fill="#e8c030" stroke="#a88408" stroke-width="1.5"/><path d="M20 18L27 28" stroke="#fff4c0" stroke-width="3"/></svg><div class="t" style="top:796.9px;font-size:22px;line-height:26px;color:#000;left:83.5px;">Счета</div><div style="left:18px;top:834px;width:18px;height:18px;background:#fff;border:2px solid #808080;box-sizing:border-box;"></div><div style="left:22px;top:842px;width:10px;height:2px;background:#000;"></div><div style="left:26px;top:838px;width:2px;height:10px;background:#000;"></div><svg style="left:48px;top:828px;" width="30" height="30" viewBox="0 0 30 30"><rect x="1" y="1" width="27" height="27" rx="4" fill="#f4d860" stroke="#c09818" stroke-width="2"/><rect x="3" y="3" width="23" height="10" rx="3" fill="#fbeaa0"/><path d="M19 6Q14 5 14 11L12 22Q11 25 8 24M10 13H19" stroke="#a07808" stroke-width="2.5" fill="none"/></svg><div class="t" style="top:828.9px;font-size:22px;line-height:26px;color:#000;left:83.5px;">Индикаторы</div><div style="left:18px;top:866px;width:18px;height:18px;background:#fff;border:2px solid #808080;box-sizing:border-box;"></div><div style="left:22px;top:874px;width:10px;height:2px;background:#000;"></div><div style="left:26px;top:870px;width:2px;height:10px;background:#000;"></div><svg style="left:48px;top:858px;" width="34" height="32" viewBox="0 0 34 32"><ellipse cx="15" cy="8" rx="15" ry="6" fill="#58a8e0" stroke="#2878b8" stroke-width="1.5"/><ellipse cx="15" cy="5" rx="7" ry="4" fill="#80c4f0"/><path d="M5 12L12 24H20L25 12Q15 17 5 12Z" fill="#f4d45c" stroke="#b8901c" stroke-width="1.5"/><path d="M26 19L33 25L26 31L19 25Z" fill="#f0c840" stroke="#a88008" stroke-width="1.5"/></svg><div class="t" style="top:860.9px;font-size:22px;line-height:26px;color:#000;left:83.5px;">Советники</div><div style="left:18px;top:898px;width:18px;height:18px;background:#fff;border:2px solid #808080;box-sizing:border-box;"></div><div style="left:22px;top:906px;width:10px;height:2px;background:#000;"></div><div style="left:26px;top:902px;width:2px;height:10px;background:#000;"></div><svg style="left:48px;top:890px;" width="32" height="32" viewBox="0 0 32 32"><path d="M3 1H25V5H22V24H6V5H3Z" fill="#f8e080" stroke="#c8a020" stroke-width="1.5"/><path d="M2 24H20V28H2Z" fill="#f0d060" stroke="#c8a020" stroke-width="1.5"/><path d="M10 9H13M15 9H18M10 13H13M15 13H18" stroke="#b89010" stroke-width="2"/><path d="M23 19L30 25L23 31L16 25Z" fill="#f0c840" stroke="#a88008" stroke-width="1.5"/></svg><div class="t" style="top:892.9px;font-size:22px;line-height:26px;color:#000;left:83.5px;">Скрипты</div><div style="left:6px;top:1206px;width:360px;height:42px;background:#e4e4e4;"></div><div style="left:6px;top:1206px;width:358px;height:2px;background:#000;"></div><div style="left:10px;top:1206px;width:110px;height:36px;background:#fff;border:2px solid #000;border-top:none;box-sizing:border-box;box-shadow:2px 2px 0 #a0a0a0;"></div><div class="t" style="top:1211.5px;font-size:22px;line-height:26px;color:#000;left:28.5px;">Общие</div><div class="t" style="top:1211.5px;font-size:22px;line-height:26px;color:#404040;left:137.5px;">Избранное</div><div style="left:268px;top:1214px;width:2px;height:24px;background:#404040;"></div><div style="left:4px;top:1246px;width:364px;height:2px;background:#fff;"></div><div style="left:372px;top:198px;width:2506px;height:1016px;background:#a6a6a6;"></div><div style="left:0;top:0;width:2874px;height:1210px;overflow:hidden"><div style="left:376px;top:202px;width:1488px;height:674px;background:#e4e4e4;box-shadow:inset -2px -2px 0 #404040,inset 2px 2px 0 #e4e4e4,inset -4px -4px 0 #808080,inset 4px 4px 0 #fff;"></div><div style="left:384px;top:210px;width:1472px;height:36px;background:linear-gradient(90deg,#808080 0,#848484 20%,#c0c0c0 100%);"></div><svg style="left:390px;top:214px;shape-rendering:crispEdges;" width="28" height="28" viewBox="0 0 28 28"><rect x="1" y="1" width="20" height="16" fill="#fff" stroke="#5a96f0" stroke-width="2" stroke-dasharray="2 2"/><rect x="1" y="1" width="20" height="3" fill="#5a96f0"/><path d="M4 9H12M7 6V12M10 6V12" stroke="#5a96f0" stroke-width="2"/><rect x="8" y="13" width="19" height="14" fill="#fff" stroke="#5a96f0" stroke-width="2"/><path d="M11 17L15 23L19 17L24 23" stroke="#4a80f0" stroke-width="2" fill="none"/></svg><div class="t" style="top:217.5px;font-size:22px;line-height:26px;color:#d8d4cc;font-weight:700;letter-spacing:0.35px;left:421.5px;">EURUSD,H4</div><div style="left:1752px;top:214px;width:32px;height:28px;background:#e4e4e4;box-shadow:inset -2px -2px 0 #404040,inset 2px 2px 0 #fff,inset -4px -4px 0 #808080,inset 4px 4px 0 #e4e4e4;"></div><div style="left:1760px;top:234px;width:10px;height:2px;background:#000;"></div><div style="left:1784px;top:214px;width:32px;height:28px;background:#e4e4e4;box-shadow:inset -2px -2px 0 #404040,inset 2px 2px 0 #fff,inset -4px -4px 0 #808080,inset 4px 4px 0 #e4e4e4;"></div><div style="left:1790px;top:220px;width:18px;height:16px;border:2px solid #808080;border-top-width:4px;box-sizing:border-box;"></div><div style="left:1820px;top:214px;width:32px;height:28px;background:#e4e4e4;box-shadow:inset -2px -2px 0 #404040,inset 2px 2px 0 #fff,inset -4px -4px 0 #808080,inset 4px 4px 0 #e4e4e4;"></div><svg style="left:1828px;top:220px;" width="16" height="16" viewBox="0 0 16 16"><path d="M1.5 1.5L14.5 14.5M14.5 1.5L1.5 14.5" stroke="#000" stroke-width="3"/></svg><div style="left:384px;top:248px;width:1472px;height:620px;background:#000;box-shadow:inset 2px 2px 0 #808080,inset -2px -2px 0 #fff,inset 4px 4px 0 #404040,inset -4px -4px 0 #fff;"></div><div style="left:1864px;top:202px;width:1488px;height:674px;background:#e4e4e4;box-shadow:inset -2px -2px 0 #404040,inset 2px 2px 0 #e4e4e4,inset -4px -4px 0 #808080,inset 4px 4px 0 #fff;"></div><div style="left:1872px;top:210px;width:1472px;height:36px;background:linear-gradient(90deg,#808080 0,#848484 20%,#c0c0c0 100%);"></div><svg style="left:1878px;top:214px;shape-rendering:crispEdges;" width="28" height="28" viewBox="0 0 28 28"><rect x="1" y="1" width="20" height="16" fill="#fff" stroke="#5a96f0" stroke-width="2" stroke-dasharray="2 2"/><rect x="1" y="1" width="20" height="3" fill="#5a96f0"/><path d="M4 9H12M7 6V12M10 6V12" stroke="#5a96f0" stroke-width="2"/><rect x="8" y="13" width="19" height="14" fill="#fff" stroke="#5a96f0" stroke-width="2"/><path d="M11 17L15 23L19 17L24 23" stroke="#4a80f0" stroke-width="2" fill="none"/></svg><div class="t" style="top:217.5px;font-size:22px;line-height:26px;color:#d8d4cc;font-weight:700;letter-spacing:0.35px;left:1909.5px;">GBPUSD,H4</div><div style="left:1872px;top:248px;width:1472px;height:620px;background:#000;box-shadow:inset 2px 2px 0 #808080,inset -2px -2px 0 #fff,inset 4px 4px 0 #404040,inset -4px -4px 0 #fff;"></div><div style="left:376px;top:876px;width:1488px;height:674px;background:#e4e4e4;box-shadow:inset -2px -2px 0 #404040,inset 2px 2px 0 #e4e4e4,inset -4px -4px 0 #808080,inset 4px 4px 0 #fff;"></div><div style="left:384px;top:884px;width:1472px;height:36px;background:linear-gradient(90deg,#808080 0,#848484 20%,#c0c0c0 100%);"></div><svg style="left:390px;top:888px;shape-rendering:crispEdges;" width="28" height="28" viewBox="0 0 28 28"><rect x="1" y="1" width="20" height="16" fill="#fff" stroke="#5a96f0" stroke-width="2" stroke-dasharray="2 2"/><rect x="1" y="1" width="20" height="3" fill="#5a96f0"/><path d="M4 9H12M7 6V12M10 6V12" stroke="#5a96f0" stroke-width="2"/><rect x="8" y="13" width="19" height="14" fill="#fff" stroke="#5a96f0" stroke-width="2"/><path d="M11 17L15 23L19 17L24 23" stroke="#4a80f0" stroke-width="2" fill="none"/></svg><div class="t" style="top:891.5px;font-size:22px;line-height:26px;color:#d8d4cc;font-weight:700;letter-spacing:0.35px;left:421.5px;">USDCHF,H4</div><div style="left:384px;top:922px;width:1472px;height:620px;background:#000;box-shadow:inset 2px 2px 0 #808080,inset -2px -2px 0 #fff,inset 4px 4px 0 #404040,inset -4px -4px 0 #fff;"></div><div style="left:1864px;top:876px;width:1488px;height:674px;background:#e4e4e4;box-shadow:inset -2px -2px 0 #404040,inset 2px 2px 0 #e4e4e4,inset -4px -4px 0 #808080,inset 4px 4px 0 #fff;"></div><div style="left:1872px;top:884px;width:1472px;height:36px;background:linear-gradient(90deg,#808080 0,#848484 20%,#c0c0c0 100%);"></div><svg style="left:1878px;top:888px;shape-rendering:crispEdges;" width="28" height="28" viewBox="0 0 28 28"><rect x="1" y="1" width="20" height="16" fill="#fff" stroke="#5a96f0" stroke-width="2" stroke-dasharray="2 2"/><rect x="1" y="1" width="20" height="3" fill="#5a96f0"/><path d="M4 9H12M7 6V12M10 6V12" stroke="#5a96f0" stroke-width="2"/><rect x="8" y="13" width="19" height="14" fill="#fff" stroke="#5a96f0" stroke-width="2"/><path d="M11 17L15 23L19 17L24 23" stroke="#4a80f0" stroke-width="2" fill="none"/></svg><div class="t" style="top:891.5px;font-size:22px;line-height:26px;color:#d8d4cc;font-weight:700;letter-spacing:1.2px;left:1909.5px;">USDJPY,H4</div><div style="left:1872px;top:922px;width:1472px;height:620px;background:#000;box-shadow:inset 2px 2px 0 #808080,inset -2px -2px 0 #fff,inset 4px 4px 0 #404040,inset -4px -4px 0 #fff;"></div><svg style="left:388px;top:252px" width="1464" height="612" viewBox="388 252 1464 612" shape-rendering="crispEdges"><clipPath id="ce"><rect x="394" y="258" width="1378" height="564"/></clipPath><g clip-path="url(#ce)"><line x1="459" y1="256" x2="459" y2="822" stroke="#778899" stroke-width="2" stroke-dasharray="6 6"/><line x1="523" y1="256" x2="523" y2="822" stroke="#778899" stroke-width="2" stroke-dasharray="6 6"/><line x1="587" y1="256" x2="587" y2="822" stroke="#778899" stroke-width="2" stroke-dasharray="6 6"/><line x1="651" y1="256" x2="651" y2="822" stroke="#778899" stroke-width="2" stroke-dasharray="6 6"/><line x1="715" y1="256" x2="715" y2="822" stroke="#778899" stroke-width="2" stroke-dasharray="6 6"/><line x1="779" y1="256" x2="779" y2="822" stroke="#778899" stroke-width="2" stroke-dasharray="6 6"/><line x1="843" y1="256" x2="843" y2="822" stroke="#778899" stroke-width="2" stroke-dasharray="6 6"/><line x1="907" y1="256" x2="907" y2="822" stroke="#778899" stroke-width="2" stroke-dasharray="6 6"/><line x1="971" y1="256" x2="971" y2="822" stroke="#778899" stroke-width="2" stroke-dasharray="6 6"/><line x1="1035" y1="256" x2="1035" y2="822" stroke="#778899" stroke-width="2" stroke-dasharray="6 6"/><line x1="1099" y1="256" x2="1099" y2="822" stroke="#778899" stroke-width="2" stroke-dasharray="6 6"/><line x1="1163" y1="256" x2="1163" y2="822" stroke="#778899" stroke-width="2" stroke-dasharray="6 6"/><line x1="1227" y1="256" x2="1227" y2="822" stroke="#778899" stroke-width="2" stroke-dasharray="6 6"/><line x1="1291" y1="256" x2="1291" y2="822" stroke="#778899" stroke-width="2" stroke-dasharray="6 6"/><line x1="1355" y1="256" x2="1355" y2="822" stroke="#778899" stroke-width="2" stroke-dasharray="6 6"/><line x1="1419" y1="256" x2="1419" y2="822" stroke="#778899" stroke-width="2" stroke-dasharray="6 6"/><line x1="1483" y1="256" x2="1483" y2="822" stroke="#778899" stroke-width="2" stroke-dasharray="6 6"/><line x1="1547" y1="256" x2="1547" y2="822" stroke="#778899" stroke-width="2" stroke-dasharray="6 6"/><line x1="1611" y1="256" x2="1611" y2="822" stroke="#778899" stroke-width="2" stroke-dasharray="6 6"/><line x1="1675" y1="256" x2="1675" y2="822" stroke="#778899" stroke-width="2" stroke-dasharray="6 6"/><line x1="1739" y1="256" x2="1739" y2="822" stroke="#778899" stroke-width="2" stroke-dasharray="6 6"/><line x1="384" y1="303" x2="1772" y2="303" stroke="#778899" stroke-width="2" stroke-dasharray="6 6"/><line x1="384" y1="369" x2="1772" y2="369" stroke="#778899" stroke-width="2" stroke-dasharray="6 6"/><line x1="384" y1="443" x2="1772" y2="443" stroke="#778899" stroke-width="2" stroke-dasharray="6 6"/><line x1="384" y1="519" x2="1772" y2="519" stroke="#778899" stroke-width="2" stroke-dasharray="6 6"/><line x1="384" y1="585" x2="1772" y2="585" stroke="#778899" stroke-width="2" stroke-dasharray="6 6"/><line x1="384" y1="659" x2="1772" y2="659" stroke="#778899" stroke-width="2" stroke-dasharray="6 6"/><line x1="384" y1="735" x2="1772" y2="735" stroke="#778899" stroke-width="2" stroke-dasharray="6 6"/><line x1="384" y1="811" x2="1772" y2="811" stroke="#778899" stroke-width="2" stroke-dasharray="6 6"/><rect x="394" y="338" width="1378" height="2" fill="#778899"/><path d="M392 710h2v2h-2zM394 708h2v2h-2zM396 708h2v2h-2zM398 706h2v2h-2zM400 706h2v2h-2zM402 704h2v2h-2zM404 704h2v2h-2zM406 702h2v2h-2zM408 700h2v2h-2zM410 700h2v2h-2zM412 698h2v2h-2zM414 698h2v2h-2zM416 696h2v2h-2zM418 694h2v2h-2zM420 694h2v2h-2zM422 692h2v2h-2zM424 692h2v2h-2zM426 690h2v2h-2zM428 688h2v2h-2zM430 688h2v2h-2zM432 686h2v2h-2zM434 684h2v2h-2zM436 684h2v2h-2zM438 682h2v2h-2zM440 680h2v2h-2zM442 680h2v2h-2zM444 678h2v2h-2zM446 678h2v2h-2zM448 678h2v2h-2zM450 678h2v2h-2zM452 678h2v2h-2zM454 678h2v2h-2zM456 678h2v2h-2zM458 678h2v2h-2zM460 678h2v2h-2zM462 678h2v2h-2zM464 678h2v2h-2zM466 678h2v2h-2zM468 678h2v2h-2zM470 678h2v2h-2zM472 678h2v2h-2zM474 678h2v2h-2zM476 678h2v2h-2zM478 678h2v2h-2zM480 678h2v2h-2zM482 678h2v2h-2zM484 680h2v2h-2zM486 680h2v2h-2zM488 680h2v2h-2zM490 680h2v2h-2zM492 680h2v2h-2zM494 680h2v2h-2zM496 680h2v2h-2zM498 680h2v2h-2zM500 682h2v2h-2zM502 682h2v2h-2zM504 682h2v2h-2zM506 682h2v2h-2zM508 680h2v2h-2zM510 680h2v2h-2zM512 678h2v2h-2zM514 678h2v2h-2zM516 676h2v2h-2zM518 676h2v2h-2zM520 674h2v2h-2zM522 674h2v2h-2zM524 672h2v2h-2zM526 670h2v2h-2zM528 670h2v2h-2zM530 668h2v2h-2zM532 666h2v2h-2zM534 666h2v2h-2zM536 664h2v2h-2zM538 662h2v2h-2zM538 660h2v2h-2zM540 660h2v2h-2zM542 658h2v2h-2zM544 656h2v2h-2zM546 656h2v2h-2zM548 654h2v2h-2zM550 654h2v2h-2zM552 652h2v2h-2zM554 652h2v2h-2zM556 650h2v2h-2zM558 650h2v2h-2zM560 648h2v2h-2zM562 648h2v2h-2zM564 646h2v2h-2zM566 646h2v2h-2zM568 646h2v2h-2zM570 644h2v2h-2zM572 644h2v2h-2zM574 642h2v2h-2zM576 642h2v2h-2zM578 640h2v2h-2zM580 640h2v2h-2zM582 638h2v2h-2zM584 638h2v2h-2zM586 638h2v2h-2zM588 636h2v2h-2zM590 634h2v2h-2zM592 634h2v2h-2zM594 632h2v2h-2zM596 630h2v2h-2zM598 628h2v2h-2zM600 626h2v2h-2zM602 626h2v2h-2zM604 624h2v2h-2zM606 622h2v2h-2zM608 620h2v2h-2zM610 620h2v2h-2zM612 618h2v2h-2zM614 616h2v2h-2zM616 616h2v2h-2zM618 614h2v2h-2zM620 612h2v2h-2zM622 612h2v2h-2zM624 610h2v2h-2zM626 608h2v2h-2zM628 608h2v2h-2zM630 606h2v2h-2zM632 604h2v2h-2zM634 604h2v2h-2zM636 602h2v2h-2zM638 600h2v2h-2zM640 600h2v2h-2zM642 598h2v2h-2zM644 596h2v2h-2zM646 596h2v2h-2zM648 594h2v2h-2zM650 592h2v2h-2zM652 592h2v2h-2zM654 590h2v2h-2zM656 588h2v2h-2zM658 586h2v2h-2zM660 586h2v2h-2zM662 584h2v2h-2zM664 582h2v2h-2zM666 580h2v2h-2zM668 580h2v2h-2zM670 578h2v2h-2zM672 576h2v2h-2zM674 574h2v2h-2zM676 574h2v2h-2zM678 572h2v2h-2zM680 570h2v2h-2zM682 568h2v2h-2zM684 566h2v2h-2zM686 566h2v2h-2zM688 564h2v2h-2zM690 562h2v2h-2zM692 560h2v2h-2zM694 560h2v2h-2zM696 558h2v2h-2zM698 556h2v2h-2zM700 554h2v2h-2zM702 552h2v2h-2zM704 550h2v2h-2zM706 548h2v2h-2zM708 546h2v2h-2zM710 544h2v2h-2zM712 542h2v2h-2zM714 540h2v2h-2zM716 538h2v2h-2zM718 536h2v2h-2zM720 534h2v2h-2zM722 532h2v2h-2zM724 530h2v2h-2zM726 530h2v2h-2zM728 528h2v2h-2zM730 528h2v2h-2zM732 528h2v2h-2zM734 526h2v2h-2zM736 526h2v2h-2zM738 526h2v2h-2zM740 524h2v2h-2zM742 524h2v2h-2zM744 522h2v2h-2zM746 522h2v2h-2zM748 522h2v2h-2zM750 522h2v2h-2zM752 524h2v2h-2zM754 524h2v2h-2zM756 524h2v2h-2zM758 524h2v2h-2zM760 526h2v2h-2zM762 526h2v2h-2zM764 526h2v2h-2zM766 526h2v2h-2zM768 528h2v2h-2zM770 528h2v2h-2zM772 528h2v2h-2zM774 528h2v2h-2zM776 528h2v2h-2zM778 530h2v2h-2zM780 530h2v2h-2zM782 530h2v2h-2zM784 530h2v2h-2zM786 530h2v2h-2zM788 530h2v2h-2zM790 530h2v2h-2zM792 530h2v2h-2zM794 530h2v2h-2zM796 530h2v2h-2zM798 532h2v2h-2zM800 532h2v2h-2zM802 532h2v2h-2zM804 532h2v2h-2zM806 532h2v2h-2zM808 532h2v2h-2zM810 532h2v2h-2zM812 532h2v2h-2zM814 534h2v2h-2zM816 534h2v2h-2zM818 534h2v2h-2zM820 536h2v2h-2zM822 536h2v2h-2zM824 536h2v2h-2zM826 538h2v2h-2zM828 538h2v2h-2zM830 538h2v2h-2zM832 538h2v2h-2zM834 538h2v2h-2zM836 540h2v2h-2zM838 540h2v2h-2zM840 540h2v2h-2zM842 540h2v2h-2zM844 540h2v2h-2zM846 540h2v2h-2zM848 542h2v2h-2zM850 542h2v2h-2zM852 542h2v2h-2zM854 542h2v2h-2zM856 542h2v2h-2zM858 542h2v2h-2zM860 544h2v2h-2zM862 544h2v2h-2zM864 544h2v2h-2zM866 546h2v2h-2zM868 546h2v2h-2zM870 548h2v2h-2zM872 548h2v2h-2zM874 550h2v2h-2zM876 550h2v2h-2zM878 552h2v2h-2zM880 552h2v2h-2zM882 554h2v2h-2zM884 554h2v2h-2zM886 556h2v2h-2zM888 556h2v2h-2zM890 558h2v2h-2zM892 558h2v2h-2zM894 560h2v2h-2zM896 560h2v2h-2zM898 562h2v2h-2zM900 564h2v2h-2zM902 564h2v2h-2z" fill="#ff0000"/><rect x="394" y="674" width="2" height="26" fill="#00ff00"/><rect x="390" y="680" width="10" height="18" fill="#00ff00"/><rect x="392" y="682" width="6" height="14" fill="#fff"/><rect x="410" y="624" width="2" height="74" fill="#00ff00"/><rect x="406" y="636" width="10" height="62" fill="#00ff00"/><rect x="408" y="638" width="6" height="58" fill="#000"/><rect x="426" y="546" width="2" height="108" fill="#00ff00"/><rect x="422" y="632" width="10" height="6" fill="#00ff00"/><rect x="424" y="634" width="6" height="2" fill="#000"/><rect x="442" y="608" width="2" height="54" fill="#00ff00"/><rect x="438" y="628" width="10" height="2" fill="#00ff00"/><rect x="458" y="598" width="2" height="102" fill="#00ff00"/><rect x="454" y="628" width="10" height="54" fill="#00ff00"/><rect x="456" y="630" width="6" height="50" fill="#fff"/><rect x="474" y="656" width="2" height="30" fill="#00ff00"/><rect x="470" y="680" width="10" height="2" fill="#00ff00"/><rect x="490" y="674" width="2" height="46" fill="#00ff00"/><rect x="486" y="680" width="10" height="34" fill="#00ff00"/><rect x="488" y="682" width="6" height="30" fill="#fff"/><rect x="506" y="682" width="2" height="38" fill="#00ff00"/><rect x="502" y="690" width="10" height="24" fill="#00ff00"/><rect x="504" y="692" width="6" height="20" fill="#000"/><rect x="522" y="650" width="2" height="70" fill="#00ff00"/><rect x="518" y="670" width="10" height="22" fill="#00ff00"/><rect x="520" y="672" width="6" height="18" fill="#000"/><rect x="538" y="554" width="2" height="170" fill="#00ff00"/><rect x="534" y="564" width="10" height="110" fill="#00ff00"/><rect x="536" y="566" width="6" height="106" fill="#000"/><rect x="554" y="504" width="2" height="66" fill="#00ff00"/><rect x="550" y="556" width="10" height="8" fill="#00ff00"/><rect x="552" y="558" width="6" height="4" fill="#000"/><rect x="570" y="542" width="2" height="30" fill="#00ff00"/><rect x="566" y="556" width="10" height="12" fill="#00ff00"/><rect x="568" y="558" width="6" height="8" fill="#fff"/><rect x="586" y="540" width="2" height="30" fill="#00ff00"/><rect x="582" y="556" width="10" height="14" fill="#00ff00"/><rect x="584" y="558" width="6" height="10" fill="#000"/><rect x="602" y="468" width="2" height="94" fill="#00ff00"/><rect x="598" y="504" width="10" height="54" fill="#00ff00"/><rect x="600" y="506" width="6" height="50" fill="#000"/><rect x="618" y="500" width="2" height="44" fill="#00ff00"/><rect x="614" y="504" width="10" height="6" fill="#00ff00"/><rect x="616" y="506" width="6" height="2" fill="#fff"/><rect x="634" y="484" width="2" height="52" fill="#00ff00"/><rect x="630" y="508" width="10" height="16" fill="#00ff00"/><rect x="632" y="510" width="6" height="12" fill="#fff"/><rect x="650" y="420" width="2" height="130" fill="#00ff00"/><rect x="646" y="468" width="10" height="56" fill="#00ff00"/><rect x="648" y="470" width="6" height="52" fill="#000"/><rect x="666" y="452" width="2" height="34" fill="#00ff00"/><rect x="662" y="466" width="10" height="16" fill="#00ff00"/><rect x="664" y="468" width="6" height="12" fill="#fff"/><rect x="682" y="454" width="2" height="30" fill="#00ff00"/><rect x="678" y="458" width="10" height="26" fill="#00ff00"/><rect x="680" y="460" width="6" height="22" fill="#000"/><rect x="698" y="450" width="2" height="26" fill="#00ff00"/><rect x="694" y="458" width="10" height="8" fill="#00ff00"/><rect x="696" y="460" width="6" height="4" fill="#fff"/><rect x="714" y="454" width="2" height="44" fill="#00ff00"/><rect x="710" y="464" width="10" height="34" fill="#00ff00"/><rect x="712" y="466" width="6" height="30" fill="#fff"/><rect x="730" y="488" width="2" height="74" fill="#00ff00"/><rect x="726" y="496" width="10" height="60" fill="#00ff00"/><rect x="728" y="498" width="6" height="56" fill="#fff"/><rect x="746" y="504" width="2" height="150" fill="#00ff00"/><rect x="742" y="552" width="10" height="72" fill="#00ff00"/><rect x="744" y="554" width="6" height="68" fill="#fff"/><rect x="762" y="602" width="2" height="36" fill="#00ff00"/><rect x="758" y="620" width="10" height="4" fill="#00ff00"/><rect x="778" y="580" width="2" height="30" fill="#00ff00"/><rect x="774" y="596" width="10" height="4" fill="#00ff00"/><rect x="794" y="574" width="2" height="30" fill="#00ff00"/><rect x="790" y="598" width="10" height="4" fill="#00ff00"/><rect x="810" y="538" width="2" height="62" fill="#00ff00"/><rect x="806" y="546" width="10" height="54" fill="#00ff00"/><rect x="808" y="548" width="6" height="50" fill="#000"/><rect x="826" y="542" width="2" height="66" fill="#00ff00"/><rect x="822" y="546" width="10" height="44" fill="#00ff00"/><rect x="824" y="548" width="6" height="40" fill="#fff"/><rect x="842" y="554" width="2" height="92" fill="#00ff00"/><rect x="838" y="574" width="10" height="16" fill="#00ff00"/><rect x="840" y="576" width="6" height="12" fill="#000"/><rect x="858" y="554" width="2" height="22" fill="#00ff00"/><rect x="854" y="562" width="10" height="12" fill="#00ff00"/><rect x="856" y="564" width="6" height="8" fill="#000"/><rect x="874" y="558" width="2" height="20" fill="#00ff00"/><rect x="870" y="562" width="10" height="16" fill="#00ff00"/><rect x="872" y="564" width="6" height="12" fill="#fff"/><rect x="890" y="566" width="2" height="46" fill="#00ff00"/><rect x="886" y="574" width="10" height="28" fill="#00ff00"/><rect x="888" y="576" width="6" height="24" fill="#fff"/><rect x="1594" y="372" width="2" height="28" fill="#00ff00"/><rect x="1590" y="374" width="10" height="26" fill="#00ff00"/><rect x="1592" y="376" width="6" height="22" fill="#000"/><rect x="1610" y="344" width="2" height="56" fill="#00ff00"/><rect x="1606" y="370" width="10" height="30" fill="#00ff00"/><rect x="1608" y="372" width="6" height="26" fill="#000"/><rect x="1626" y="346" width="2" height="44" fill="#00ff00"/><rect x="1622" y="362" width="10" height="10" fill="#00ff00"/><rect x="1624" y="364" width="6" height="6" fill="#000"/><rect x="1642" y="362" width="2" height="38" fill="#00ff00"/><rect x="1638" y="362" width="10" height="38" fill="#00ff00"/><rect x="1640" y="364" width="6" height="34" fill="#fff"/><rect x="1658" y="372" width="2" height="28" fill="#00ff00"/><rect x="1654" y="374" width="10" height="26" fill="#00ff00"/><rect x="1656" y="376" width="6" height="22" fill="#000"/><rect x="1674" y="314" width="2" height="106" fill="#00ff00"/><rect x="1670" y="320" width="10" height="100" fill="#00ff00"/><rect x="1672" y="322" width="6" height="96" fill="#000"/><rect x="1690" y="294" width="2" height="78" fill="#00ff00"/><rect x="1686" y="320" width="10" height="32" fill="#00ff00"/><rect x="1688" y="322" width="6" height="28" fill="#fff"/><rect x="1706" y="304" width="2" height="50" fill="#00ff00"/><rect x="1702" y="346" width="10" height="6" fill="#00ff00"/><rect x="1704" y="348" width="6" height="2" fill="#000"/><rect x="1722" y="334" width="2" height="22" fill="#00ff00"/><rect x="1718" y="338" width="10" height="10" fill="#00ff00"/><rect x="1720" y="340" width="6" height="6" fill="#000"/></g><rect x="393" y="257" width="1380" height="566" fill="none" stroke="#fff" stroke-width="2"/><text x="402" y="280" font-family="'Liberation Sans','DejaVu Sans',sans-serif" font-size="18.67" fill="#fff" text-anchor="start" xml:space="preserve">EURUSD,H4  1.3679 1.3685 1.3677 1.3684</text><rect x="394" y="824" width="2" height="6" fill="#fff"/><text x="393" y="848" font-family="'Liberation Sans','DejaVu Sans',sans-serif" font-size="18.67" fill="#fff" text-anchor="start" letter-spacing="-0.12" xml:space="preserve">1 Oct 2013</text><rect x="522" y="824" width="2" height="6" fill="#fff"/><text x="521" y="848" font-family="'Liberation Sans','DejaVu Sans',sans-serif" font-size="18.67" fill="#fff" text-anchor="start" letter-spacing="-0.12" xml:space="preserve">2 Oct 08:00</text><rect x="650" y="824" width="2" height="6" fill="#fff"/><text x="649" y="848" font-family="'Liberation Sans','DejaVu Sans',sans-serif" font-size="18.67" fill="#fff" text-anchor="start" letter-spacing="-0.12" xml:space="preserve">3 Oct 16:00</text><rect x="778" y="824" width="2" height="6" fill="#fff"/><text x="777" y="848" font-family="'Liberation Sans','DejaVu Sans',sans-serif" font-size="18.67" fill="#fff" text-anchor="start" letter-spacing="-0.12" xml:space="preserve">7 Oct 00:00</text><rect x="906" y="824" width="2" height="6" fill="#fff"/><rect x="1034" y="824" width="2" height="6" fill="#fff"/><rect x="1162" y="824" width="2" height="6" fill="#fff"/><rect x="1290" y="824" width="2" height="6" fill="#fff"/><rect x="1418" y="824" width="2" height="6" fill="#fff"/><rect x="1546" y="824" width="2" height="6" fill="#fff"/><rect x="1674" y="824" width="2" height="6" fill="#fff"/><rect x="1774" y="302" width="6" height="2" fill="#fff"/><text x="1785" y="310" font-family="'Liberation Sans','DejaVu Sans',sans-serif" font-size="18.67" fill="#fff" text-anchor="start" letter-spacing="-0.3" xml:space="preserve">1.3700</text><rect x="1774" y="368" width="6" height="2" fill="#fff"/><text x="1785" y="376" font-family="'Liberation Sans','DejaVu Sans',sans-serif" font-size="18.67" fill="#fff" text-anchor="start" letter-spacing="-0.3" xml:space="preserve">1.3670</text><rect x="1774" y="442" width="6" height="2" fill="#fff"/><text x="1785" y="450" font-family="'Liberation Sans','DejaVu Sans',sans-serif" font-size="18.67" fill="#fff" text-anchor="start" letter-spacing="-0.3" xml:space="preserve">1.3640</text><rect x="1774" y="518" width="6" height="2" fill="#fff"/><text x="1785" y="526" font-family="'Liberation Sans','DejaVu Sans',sans-serif" font-size="18.67" fill="#fff" text-anchor="start" letter-spacing="-0.3" xml:space="preserve">1.3610</text><rect x="1774" y="584" width="6" height="2" fill="#fff"/><text x="1785" y="592" font-family="'Liberation Sans','DejaVu Sans',sans-serif" font-size="18.67" fill="#fff" text-anchor="start" letter-spacing="-0.3" xml:space="preserve">1.3580</text><rect x="1774" y="658" width="6" height="2" fill="#fff"/><text x="1785" y="666" font-family="'Liberation Sans','DejaVu Sans',sans-serif" font-size="18.67" fill="#fff" text-anchor="start" letter-spacing="-0.3" xml:space="preserve">1.3550</text><rect x="1774" y="734" width="6" height="2" fill="#fff"/><text x="1785" y="742" font-family="'Liberation Sans','DejaVu Sans',sans-serif" font-size="18.67" fill="#fff" text-anchor="start" letter-spacing="-0.3" xml:space="preserve">1.3520</text><rect x="1774" y="810" width="6" height="2" fill="#fff"/><text x="1785" y="818" font-family="'Liberation Sans','DejaVu Sans',sans-serif" font-size="18.67" fill="#fff" text-anchor="start" letter-spacing="-0.3" xml:space="preserve">1.3490</text><rect x="1778" y="328" width="68" height="22" fill="#fff"/><text x="1785" y="346" font-family="'Liberation Sans','DejaVu Sans',sans-serif" font-size="18.67" fill="#000" text-anchor="start" letter-spacing="-0.3" xml:space="preserve">1.3684</text></svg><svg style="left:1876px;top:252px" width="998" height="612" viewBox="1876 252 998 612" shape-rendering="crispEdges"><clipPath id="cg"><rect x="1882" y="258" width="1000" height="564"/></clipPath><g clip-path="url(#cg)"><line x1="1947" y1="256" x2="1947" y2="822" stroke="#778899" stroke-width="2" stroke-dasharray="6 6"/><line x1="2011" y1="256" x2="2011" y2="822" stroke="#778899" stroke-width="2" stroke-dasharray="6 6"/><line x1="2075" y1="256" x2="2075" y2="822" stroke="#778899" stroke-width="2" stroke-dasharray="6 6"/><line x1="2139" y1="256" x2="2139" y2="822" stroke="#778899" stroke-width="2" stroke-dasharray="6 6"/><line x1="2203" y1="256" x2="2203" y2="822" stroke="#778899" stroke-width="2" stroke-dasharray="6 6"/><line x1="2267" y1="256" x2="2267" y2="822" stroke="#778899" stroke-width="2" stroke-dasharray="6 6"/><line x1="2331" y1="256" x2="2331" y2="822" stroke="#778899" stroke-width="2" stroke-dasharray="6 6"/><line x1="2395" y1="256" x2="2395" y2="822" stroke="#778899" stroke-width="2" stroke-dasharray="6 6"/><line x1="2459" y1="256" x2="2459" y2="822" stroke="#778899" stroke-width="2" stroke-dasharray="6 6"/><line x1="2523" y1="256" x2="2523" y2="822" stroke="#778899" stroke-width="2" stroke-dasharray="6 6"/><line x1="2587" y1="256" x2="2587" y2="822" stroke="#778899" stroke-width="2" stroke-dasharray="6 6"/><line x1="2651" y1="256" x2="2651" y2="822" stroke="#778899" stroke-width="2" stroke-dasharray="6 6"/><line x1="2715" y1="256" x2="2715" y2="822" stroke="#778899" stroke-width="2" stroke-dasharray="6 6"/><line x1="2779" y1="256" x2="2779" y2="822" stroke="#778899" stroke-width="2" stroke-dasharray="6 6"/><line x1="2843" y1="256" x2="2843" y2="822" stroke="#778899" stroke-width="2" stroke-dasharray="6 6"/><line x1="2907" y1="256" x2="2907" y2="822" stroke="#778899" stroke-width="2" stroke-dasharray="6 6"/><line x1="1872" y1="273" x2="2880" y2="273" stroke="#778899" stroke-width="2" stroke-dasharray="6 6"/><line x1="1872" y1="339" x2="2880" y2="339" stroke="#778899" stroke-width="2" stroke-dasharray="6 6"/><line x1="1872" y1="407" x2="2880" y2="407" stroke="#778899" stroke-width="2" stroke-dasharray="6 6"/><line x1="1872" y1="477" x2="2880" y2="477" stroke="#778899" stroke-width="2" stroke-dasharray="6 6"/><line x1="1872" y1="545" x2="2880" y2="545" stroke="#778899" stroke-width="2" stroke-dasharray="6 6"/><line x1="1872" y1="615" x2="2880" y2="615" stroke="#778899" stroke-width="2" stroke-dasharray="6 6"/><line x1="1872" y1="683" x2="2880" y2="683" stroke="#778899" stroke-width="2" stroke-dasharray="6 6"/><line x1="1872" y1="749" x2="2880" y2="749" stroke="#778899" stroke-width="2" stroke-dasharray="6 6"/><line x1="1872" y1="817" x2="2880" y2="817" stroke="#778899" stroke-width="2" stroke-dasharray="6 6"/><rect x="1882" y="374" width="1000" height="2" fill="#778899"/><rect x="1986" y="694" width="2" height="16" fill="#00ff00"/><rect x="1984" y="700" width="2" height="2" fill="#00ff00"/><rect x="1988" y="708" width="2" height="2" fill="#00ff00"/><rect x="1994" y="698" width="2" height="20" fill="#00ff00"/><rect x="1992" y="708" width="2" height="2" fill="#00ff00"/><rect x="1996" y="712" width="2" height="2" fill="#00ff00"/><rect x="2002" y="710" width="2" height="14" fill="#00ff00"/><rect x="2000" y="712" width="2" height="2" fill="#00ff00"/><rect x="2004" y="720" width="2" height="2" fill="#00ff00"/><rect x="2010" y="694" width="2" height="40" fill="#00ff00"/><rect x="2008" y="720" width="2" height="2" fill="#00ff00"/><rect x="2012" y="702" width="2" height="2" fill="#00ff00"/><rect x="2018" y="648" width="2" height="62" fill="#00ff00"/><rect x="2016" y="702" width="2" height="2" fill="#00ff00"/><rect x="2020" y="648" width="2" height="2" fill="#00ff00"/><rect x="2026" y="640" width="2" height="38" fill="#00ff00"/><rect x="2024" y="648" width="2" height="2" fill="#00ff00"/><rect x="2028" y="650" width="2" height="2" fill="#00ff00"/><rect x="2034" y="632" width="2" height="20" fill="#00ff00"/><rect x="2032" y="650" width="2" height="2" fill="#00ff00"/><rect x="2036" y="642" width="2" height="2" fill="#00ff00"/><rect x="2042" y="572" width="2" height="20" fill="#00ff00"/><rect x="2040" y="586" width="2" height="2" fill="#00ff00"/><rect x="2044" y="572" width="2" height="2" fill="#00ff00"/><rect x="2050" y="566" width="2" height="20" fill="#00ff00"/><rect x="2048" y="572" width="2" height="2" fill="#00ff00"/><rect x="2052" y="568" width="2" height="2" fill="#00ff00"/><rect x="2058" y="566" width="2" height="24" fill="#00ff00"/><rect x="2056" y="568" width="2" height="2" fill="#00ff00"/><rect x="2060" y="584" width="2" height="2" fill="#00ff00"/><rect x="2066" y="560" width="2" height="46" fill="#00ff00"/><rect x="2064" y="584" width="2" height="2" fill="#00ff00"/><rect x="2068" y="562" width="2" height="2" fill="#00ff00"/><rect x="2074" y="562" width="2" height="48" fill="#00ff00"/><rect x="2072" y="562" width="2" height="2" fill="#00ff00"/><rect x="2076" y="606" width="2" height="2" fill="#00ff00"/><rect x="2082" y="600" width="2" height="26" fill="#00ff00"/><rect x="2080" y="606" width="2" height="2" fill="#00ff00"/><rect x="2084" y="622" width="2" height="2" fill="#00ff00"/><rect x="2090" y="614" width="2" height="12" fill="#00ff00"/><rect x="2088" y="622" width="2" height="2" fill="#00ff00"/><rect x="2092" y="620" width="2" height="2" fill="#00ff00"/><rect x="2098" y="616" width="2" height="16" fill="#00ff00"/><rect x="2096" y="620" width="2" height="2" fill="#00ff00"/><rect x="2100" y="622" width="2" height="2" fill="#00ff00"/><rect x="2106" y="586" width="2" height="38" fill="#00ff00"/><rect x="2104" y="622" width="2" height="2" fill="#00ff00"/><rect x="2108" y="612" width="2" height="2" fill="#00ff00"/><rect x="2114" y="604" width="2" height="30" fill="#00ff00"/><rect x="2112" y="612" width="2" height="2" fill="#00ff00"/><rect x="2116" y="610" width="2" height="2" fill="#00ff00"/><rect x="2122" y="604" width="2" height="26" fill="#00ff00"/><rect x="2120" y="610" width="2" height="2" fill="#00ff00"/><rect x="2124" y="610" width="2" height="2" fill="#00ff00"/><rect x="2130" y="604" width="2" height="16" fill="#00ff00"/><rect x="2128" y="610" width="2" height="2" fill="#00ff00"/><rect x="2132" y="616" width="2" height="2" fill="#00ff00"/><rect x="2138" y="610" width="2" height="12" fill="#00ff00"/><rect x="2136" y="616" width="2" height="2" fill="#00ff00"/><rect x="2140" y="618" width="2" height="2" fill="#00ff00"/><rect x="2146" y="612" width="2" height="16" fill="#00ff00"/><rect x="2144" y="618" width="2" height="2" fill="#00ff00"/><rect x="2148" y="612" width="2" height="2" fill="#00ff00"/><rect x="2154" y="560" width="2" height="54" fill="#00ff00"/><rect x="2152" y="612" width="2" height="2" fill="#00ff00"/><rect x="2156" y="560" width="2" height="2" fill="#00ff00"/><rect x="2162" y="546" width="2" height="22" fill="#00ff00"/><rect x="2160" y="560" width="2" height="2" fill="#00ff00"/><rect x="2164" y="552" width="2" height="2" fill="#00ff00"/><rect x="2170" y="550" width="2" height="16" fill="#00ff00"/><rect x="2168" y="552" width="2" height="2" fill="#00ff00"/><rect x="2172" y="556" width="2" height="2" fill="#00ff00"/><rect x="2178" y="376" width="2" height="184" fill="#00ff00"/><rect x="2176" y="556" width="2" height="2" fill="#00ff00"/><rect x="2180" y="394" width="2" height="2" fill="#00ff00"/><rect x="2186" y="388" width="2" height="32" fill="#00ff00"/><rect x="2184" y="394" width="2" height="2" fill="#00ff00"/><rect x="2188" y="402" width="2" height="2" fill="#00ff00"/><rect x="2194" y="392" width="2" height="30" fill="#00ff00"/><rect x="2192" y="402" width="2" height="2" fill="#00ff00"/><rect x="2196" y="412" width="2" height="2" fill="#00ff00"/><rect x="2202" y="396" width="2" height="60" fill="#00ff00"/><rect x="2200" y="412" width="2" height="2" fill="#00ff00"/><rect x="2204" y="454" width="2" height="2" fill="#00ff00"/><rect x="2210" y="438" width="2" height="36" fill="#00ff00"/><rect x="2208" y="454" width="2" height="2" fill="#00ff00"/><rect x="2212" y="458" width="2" height="2" fill="#00ff00"/><rect x="2218" y="434" width="2" height="74" fill="#00ff00"/><rect x="2216" y="458" width="2" height="2" fill="#00ff00"/><rect x="2220" y="496" width="2" height="2" fill="#00ff00"/><rect x="2226" y="488" width="2" height="14" fill="#00ff00"/><rect x="2224" y="496" width="2" height="2" fill="#00ff00"/><rect x="2228" y="498" width="2" height="2" fill="#00ff00"/><rect x="2234" y="490" width="2" height="16" fill="#00ff00"/><rect x="2232" y="498" width="2" height="2" fill="#00ff00"/><rect x="2236" y="492" width="2" height="2" fill="#00ff00"/><rect x="2242" y="484" width="2" height="12" fill="#00ff00"/><rect x="2240" y="492" width="2" height="2" fill="#00ff00"/><rect x="2244" y="488" width="2" height="2" fill="#00ff00"/><rect x="2250" y="464" width="2" height="30" fill="#00ff00"/><rect x="2248" y="488" width="2" height="2" fill="#00ff00"/><rect x="2252" y="488" width="2" height="2" fill="#00ff00"/><rect x="2258" y="486" width="2" height="52" fill="#00ff00"/><rect x="2256" y="488" width="2" height="2" fill="#00ff00"/><rect x="2260" y="522" width="2" height="2" fill="#00ff00"/><rect x="2266" y="506" width="2" height="34" fill="#00ff00"/><rect x="2264" y="522" width="2" height="2" fill="#00ff00"/><rect x="2268" y="514" width="2" height="2" fill="#00ff00"/><rect x="2274" y="502" width="2" height="16" fill="#00ff00"/><rect x="2272" y="514" width="2" height="2" fill="#00ff00"/><rect x="2276" y="512" width="2" height="2" fill="#00ff00"/><rect x="2282" y="508" width="2" height="28" fill="#00ff00"/><rect x="2280" y="526" width="2" height="2" fill="#00ff00"/><rect x="2284" y="510" width="2" height="2" fill="#00ff00"/><rect x="2290" y="496" width="2" height="18" fill="#00ff00"/><rect x="2288" y="510" width="2" height="2" fill="#00ff00"/><rect x="2292" y="512" width="2" height="2" fill="#00ff00"/><rect x="2298" y="476" width="2" height="38" fill="#00ff00"/><rect x="2296" y="512" width="2" height="2" fill="#00ff00"/><rect x="2300" y="486" width="2" height="2" fill="#00ff00"/><rect x="2306" y="460" width="2" height="42" fill="#00ff00"/><rect x="2304" y="486" width="2" height="2" fill="#00ff00"/><rect x="2308" y="468" width="2" height="2" fill="#00ff00"/><rect x="2314" y="466" width="2" height="48" fill="#00ff00"/><rect x="2312" y="468" width="2" height="2" fill="#00ff00"/><rect x="2316" y="472" width="2" height="2" fill="#00ff00"/><rect x="2322" y="468" width="2" height="24" fill="#00ff00"/><rect x="2320" y="472" width="2" height="2" fill="#00ff00"/><rect x="2324" y="488" width="2" height="2" fill="#00ff00"/><rect x="2330" y="486" width="2" height="14" fill="#00ff00"/><rect x="2328" y="488" width="2" height="2" fill="#00ff00"/><rect x="2332" y="492" width="2" height="2" fill="#00ff00"/><rect x="2338" y="492" width="2" height="12" fill="#00ff00"/><rect x="2336" y="492" width="2" height="2" fill="#00ff00"/><rect x="2340" y="502" width="2" height="2" fill="#00ff00"/><rect x="2346" y="488" width="2" height="64" fill="#00ff00"/><rect x="2344" y="502" width="2" height="2" fill="#00ff00"/><rect x="2348" y="544" width="2" height="2" fill="#00ff00"/><rect x="2354" y="526" width="2" height="44" fill="#00ff00"/><rect x="2352" y="544" width="2" height="2" fill="#00ff00"/><rect x="2356" y="558" width="2" height="2" fill="#00ff00"/><rect x="2362" y="512" width="2" height="52" fill="#00ff00"/><rect x="2360" y="558" width="2" height="2" fill="#00ff00"/><rect x="2364" y="520" width="2" height="2" fill="#00ff00"/><rect x="2370" y="510" width="2" height="18" fill="#00ff00"/><rect x="2368" y="520" width="2" height="2" fill="#00ff00"/><rect x="2372" y="524" width="2" height="2" fill="#00ff00"/><rect x="2378" y="522" width="2" height="16" fill="#00ff00"/><rect x="2376" y="524" width="2" height="2" fill="#00ff00"/><rect x="2380" y="534" width="2" height="2" fill="#00ff00"/><rect x="2386" y="524" width="2" height="24" fill="#00ff00"/><rect x="2384" y="534" width="2" height="2" fill="#00ff00"/><rect x="2388" y="540" width="2" height="2" fill="#00ff00"/><rect x="2394" y="520" width="2" height="24" fill="#00ff00"/><rect x="2392" y="540" width="2" height="2" fill="#00ff00"/><rect x="2396" y="534" width="2" height="2" fill="#00ff00"/><rect x="2402" y="472" width="2" height="66" fill="#00ff00"/><rect x="2400" y="534" width="2" height="2" fill="#00ff00"/><rect x="2404" y="482" width="2" height="2" fill="#00ff00"/><rect x="2410" y="452" width="2" height="36" fill="#00ff00"/><rect x="2408" y="482" width="2" height="2" fill="#00ff00"/><rect x="2412" y="454" width="2" height="2" fill="#00ff00"/><rect x="2418" y="446" width="2" height="18" fill="#00ff00"/><rect x="2416" y="454" width="2" height="2" fill="#00ff00"/><rect x="2420" y="454" width="2" height="2" fill="#00ff00"/><rect x="2426" y="446" width="2" height="16" fill="#00ff00"/><rect x="2424" y="454" width="2" height="2" fill="#00ff00"/><rect x="2428" y="454" width="2" height="2" fill="#00ff00"/><rect x="2434" y="450" width="2" height="16" fill="#00ff00"/><rect x="2432" y="454" width="2" height="2" fill="#00ff00"/><rect x="2436" y="454" width="2" height="2" fill="#00ff00"/><rect x="2442" y="438" width="2" height="58" fill="#00ff00"/><rect x="2440" y="454" width="2" height="2" fill="#00ff00"/><rect x="2444" y="478" width="2" height="2" fill="#00ff00"/><rect x="2450" y="468" width="2" height="40" fill="#00ff00"/><rect x="2448" y="478" width="2" height="2" fill="#00ff00"/><rect x="2452" y="488" width="2" height="2" fill="#00ff00"/><rect x="2458" y="486" width="2" height="42" fill="#00ff00"/><rect x="2456" y="488" width="2" height="2" fill="#00ff00"/><rect x="2460" y="490" width="2" height="2" fill="#00ff00"/><rect x="2466" y="486" width="2" height="30" fill="#00ff00"/><rect x="2464" y="490" width="2" height="2" fill="#00ff00"/><rect x="2468" y="488" width="2" height="2" fill="#00ff00"/><rect x="2474" y="488" width="2" height="8" fill="#00ff00"/><rect x="2472" y="488" width="2" height="2" fill="#00ff00"/><rect x="2476" y="492" width="2" height="2" fill="#00ff00"/><rect x="2482" y="478" width="2" height="22" fill="#00ff00"/><rect x="2480" y="492" width="2" height="2" fill="#00ff00"/><rect x="2484" y="478" width="2" height="2" fill="#00ff00"/><rect x="2490" y="404" width="2" height="78" fill="#00ff00"/><rect x="2488" y="478" width="2" height="2" fill="#00ff00"/><rect x="2492" y="468" width="2" height="2" fill="#00ff00"/><rect x="2498" y="414" width="2" height="56" fill="#00ff00"/><rect x="2496" y="468" width="2" height="2" fill="#00ff00"/><rect x="2500" y="438" width="2" height="2" fill="#00ff00"/><rect x="2506" y="400" width="2" height="44" fill="#00ff00"/><rect x="2504" y="438" width="2" height="2" fill="#00ff00"/><rect x="2508" y="412" width="2" height="2" fill="#00ff00"/><rect x="2514" y="394" width="2" height="22" fill="#00ff00"/><rect x="2512" y="414" width="2" height="2" fill="#00ff00"/><rect x="2516" y="394" width="2" height="2" fill="#00ff00"/><rect x="2522" y="360" width="2" height="40" fill="#00ff00"/><rect x="2520" y="396" width="2" height="2" fill="#00ff00"/><rect x="2524" y="372" width="2" height="2" fill="#00ff00"/><rect x="2530" y="368" width="2" height="12" fill="#00ff00"/><rect x="2528" y="372" width="2" height="2" fill="#00ff00"/><rect x="2532" y="376" width="2" height="2" fill="#00ff00"/><rect x="2538" y="374" width="2" height="34" fill="#00ff00"/><rect x="2536" y="376" width="2" height="2" fill="#00ff00"/><rect x="2540" y="380" width="2" height="2" fill="#00ff00"/><rect x="2546" y="366" width="2" height="44" fill="#00ff00"/><rect x="2544" y="380" width="2" height="2" fill="#00ff00"/><rect x="2548" y="378" width="2" height="2" fill="#00ff00"/><rect x="2554" y="340" width="2" height="66" fill="#00ff00"/><rect x="2552" y="380" width="2" height="2" fill="#00ff00"/><rect x="2556" y="358" width="2" height="2" fill="#00ff00"/><rect x="2562" y="342" width="2" height="20" fill="#00ff00"/><rect x="2560" y="358" width="2" height="2" fill="#00ff00"/><rect x="2564" y="358" width="2" height="2" fill="#00ff00"/><rect x="2570" y="348" width="2" height="12" fill="#00ff00"/><rect x="2568" y="358" width="2" height="2" fill="#00ff00"/><rect x="2572" y="358" width="2" height="2" fill="#00ff00"/><rect x="2578" y="300" width="2" height="60" fill="#00ff00"/><rect x="2576" y="358" width="2" height="2" fill="#00ff00"/><rect x="2580" y="306" width="2" height="2" fill="#00ff00"/><rect x="2586" y="286" width="2" height="48" fill="#00ff00"/><rect x="2584" y="306" width="2" height="2" fill="#00ff00"/><rect x="2588" y="312" width="2" height="2" fill="#00ff00"/><rect x="2594" y="290" width="2" height="30" fill="#00ff00"/><rect x="2592" y="312" width="2" height="2" fill="#00ff00"/><rect x="2596" y="308" width="2" height="2" fill="#00ff00"/><rect x="2602" y="300" width="2" height="54" fill="#00ff00"/><rect x="2600" y="308" width="2" height="2" fill="#00ff00"/><rect x="2604" y="342" width="2" height="2" fill="#00ff00"/><rect x="2610" y="334" width="2" height="18" fill="#00ff00"/><rect x="2608" y="342" width="2" height="2" fill="#00ff00"/><rect x="2612" y="346" width="2" height="2" fill="#00ff00"/><rect x="2618" y="342" width="2" height="32" fill="#00ff00"/><rect x="2616" y="346" width="2" height="2" fill="#00ff00"/><rect x="2620" y="372" width="2" height="2" fill="#00ff00"/><rect x="2626" y="362" width="2" height="16" fill="#00ff00"/><rect x="2624" y="372" width="2" height="2" fill="#00ff00"/><rect x="2628" y="366" width="2" height="2" fill="#00ff00"/><rect x="2634" y="326" width="2" height="42" fill="#00ff00"/><rect x="2632" y="366" width="2" height="2" fill="#00ff00"/><rect x="2636" y="326" width="2" height="2" fill="#00ff00"/><rect x="2642" y="298" width="2" height="54" fill="#00ff00"/><rect x="2640" y="328" width="2" height="2" fill="#00ff00"/><rect x="2644" y="298" width="2" height="2" fill="#00ff00"/><rect x="2650" y="296" width="2" height="32" fill="#00ff00"/><rect x="2648" y="298" width="2" height="2" fill="#00ff00"/><rect x="2652" y="324" width="2" height="2" fill="#00ff00"/><rect x="2658" y="312" width="2" height="24" fill="#00ff00"/><rect x="2656" y="324" width="2" height="2" fill="#00ff00"/><rect x="2660" y="322" width="2" height="2" fill="#00ff00"/><rect x="2666" y="308" width="2" height="18" fill="#00ff00"/><rect x="2664" y="322" width="2" height="2" fill="#00ff00"/><rect x="2668" y="318" width="2" height="2" fill="#00ff00"/><rect x="2674" y="304" width="2" height="20" fill="#00ff00"/><rect x="2672" y="318" width="2" height="2" fill="#00ff00"/><rect x="2676" y="308" width="2" height="2" fill="#00ff00"/><rect x="2682" y="308" width="2" height="44" fill="#00ff00"/><rect x="2680" y="308" width="2" height="2" fill="#00ff00"/><rect x="2684" y="318" width="2" height="2" fill="#00ff00"/><rect x="2690" y="310" width="2" height="48" fill="#00ff00"/><rect x="2688" y="318" width="2" height="2" fill="#00ff00"/><rect x="2692" y="352" width="2" height="2" fill="#00ff00"/><rect x="2698" y="350" width="2" height="34" fill="#00ff00"/><rect x="2696" y="352" width="2" height="2" fill="#00ff00"/><rect x="2700" y="372" width="2" height="2" fill="#00ff00"/><rect x="2706" y="370" width="2" height="16" fill="#00ff00"/><rect x="2704" y="372" width="2" height="2" fill="#00ff00"/><rect x="2708" y="384" width="2" height="2" fill="#00ff00"/><rect x="2714" y="374" width="2" height="14" fill="#00ff00"/><rect x="2712" y="384" width="2" height="2" fill="#00ff00"/><rect x="2716" y="376" width="2" height="2" fill="#00ff00"/><rect x="2722" y="362" width="2" height="16" fill="#00ff00"/><rect x="2720" y="376" width="2" height="2" fill="#00ff00"/><rect x="2724" y="368" width="2" height="2" fill="#00ff00"/><rect x="2730" y="366" width="2" height="80" fill="#00ff00"/><rect x="2728" y="368" width="2" height="2" fill="#00ff00"/><rect x="2732" y="428" width="2" height="2" fill="#00ff00"/><rect x="2738" y="418" width="2" height="80" fill="#00ff00"/><rect x="2736" y="426" width="2" height="2" fill="#00ff00"/><rect x="2740" y="482" width="2" height="2" fill="#00ff00"/><rect x="2746" y="454" width="2" height="46" fill="#00ff00"/><rect x="2744" y="482" width="2" height="2" fill="#00ff00"/><rect x="2748" y="494" width="2" height="2" fill="#00ff00"/><rect x="2754" y="490" width="2" height="22" fill="#00ff00"/><rect x="2752" y="494" width="2" height="2" fill="#00ff00"/><rect x="2756" y="510" width="2" height="2" fill="#00ff00"/><rect x="2762" y="482" width="2" height="32" fill="#00ff00"/><rect x="2760" y="506" width="2" height="2" fill="#00ff00"/><rect x="2764" y="488" width="2" height="2" fill="#00ff00"/><rect x="2770" y="482" width="2" height="22" fill="#00ff00"/><rect x="2768" y="488" width="2" height="2" fill="#00ff00"/><rect x="2772" y="502" width="2" height="2" fill="#00ff00"/><rect x="2778" y="458" width="2" height="46" fill="#00ff00"/><rect x="2776" y="502" width="2" height="2" fill="#00ff00"/><rect x="2780" y="460" width="2" height="2" fill="#00ff00"/><rect x="2786" y="440" width="2" height="40" fill="#00ff00"/><rect x="2784" y="460" width="2" height="2" fill="#00ff00"/><rect x="2788" y="440" width="2" height="2" fill="#00ff00"/><rect x="2794" y="436" width="2" height="38" fill="#00ff00"/><rect x="2792" y="440" width="2" height="2" fill="#00ff00"/><rect x="2796" y="438" width="2" height="2" fill="#00ff00"/><rect x="2802" y="434" width="2" height="14" fill="#00ff00"/><rect x="2800" y="438" width="2" height="2" fill="#00ff00"/><rect x="2804" y="442" width="2" height="2" fill="#00ff00"/><rect x="2810" y="436" width="2" height="10" fill="#00ff00"/><rect x="2808" y="442" width="2" height="2" fill="#00ff00"/><rect x="2812" y="438" width="2" height="2" fill="#00ff00"/><rect x="2818" y="438" width="2" height="26" fill="#00ff00"/><rect x="2816" y="438" width="2" height="2" fill="#00ff00"/><rect x="2820" y="460" width="2" height="2" fill="#00ff00"/><rect x="2826" y="448" width="2" height="40" fill="#00ff00"/><rect x="2824" y="460" width="2" height="2" fill="#00ff00"/><rect x="2828" y="472" width="2" height="2" fill="#00ff00"/><rect x="2834" y="422" width="2" height="88" fill="#00ff00"/><rect x="2832" y="472" width="2" height="2" fill="#00ff00"/><rect x="2836" y="424" width="2" height="2" fill="#00ff00"/><rect x="2842" y="412" width="2" height="54" fill="#00ff00"/><rect x="2840" y="424" width="2" height="2" fill="#00ff00"/><rect x="2844" y="456" width="2" height="2" fill="#00ff00"/><rect x="2850" y="444" width="2" height="16" fill="#00ff00"/><rect x="2848" y="456" width="2" height="2" fill="#00ff00"/><rect x="2852" y="450" width="2" height="2" fill="#00ff00"/><rect x="2858" y="414" width="2" height="40" fill="#00ff00"/><rect x="2856" y="452" width="2" height="2" fill="#00ff00"/><rect x="2860" y="442" width="2" height="2" fill="#00ff00"/><rect x="2866" y="440" width="2" height="32" fill="#00ff00"/><rect x="2864" y="442" width="2" height="2" fill="#00ff00"/><rect x="2868" y="466" width="2" height="2" fill="#00ff00"/><rect x="2874" y="456" width="2" height="20" fill="#00ff00"/><rect x="2872" y="466" width="2" height="2" fill="#00ff00"/><rect x="2876" y="470" width="2" height="2" fill="#00ff00"/><path d="M1984 728h2v2h-2zM1986 728h2v2h-2zM1988 726h2v2h-2zM1990 724h2v2h-2zM1992 724h2v2h-2zM1994 722h2v2h-2zM1996 722h2v2h-2zM1998 720h2v2h-2zM1998 718h2v2h-2zM2000 718h2v2h-2zM2002 716h2v2h-2zM2004 716h2v2h-2zM2006 714h2v2h-2zM2008 712h2v2h-2zM2010 712h2v2h-2zM2012 710h2v2h-2zM2014 708h2v2h-2zM2016 706h2v2h-2zM2018 706h2v2h-2zM2020 704h2v2h-2zM2022 702h2v2h-2zM2024 700h2v2h-2zM2026 698h2v2h-2zM2028 696h2v2h-2zM2030 694h2v2h-2zM2032 692h2v2h-2zM2034 690h2v2h-2zM2036 688h2v2h-2zM2038 686h2v2h-2zM2040 684h2v2h-2zM2042 682h2v2h-2zM2044 680h2v2h-2zM2046 678h2v2h-2zM2048 676h2v2h-2zM2050 674h2v2h-2zM2052 672h2v2h-2zM2054 670h2v2h-2zM2054 668h2v2h-2zM2056 666h2v2h-2zM2058 664h2v2h-2zM2060 662h2v2h-2zM2062 660h2v2h-2zM2064 658h2v2h-2zM2066 656h2v2h-2zM2068 654h2v2h-2zM2070 652h2v2h-2zM2072 650h2v2h-2zM2074 648h2v2h-2zM2076 646h2v2h-2zM2078 644h2v2h-2zM2080 642h2v2h-2zM2082 640h2v2h-2zM2084 640h2v2h-2zM2086 638h2v2h-2zM2088 638h2v2h-2zM2090 636h2v2h-2zM2092 634h2v2h-2zM2094 634h2v2h-2zM2096 632h2v2h-2zM2098 632h2v2h-2zM2100 630h2v2h-2zM2102 628h2v2h-2zM2102 626h2v2h-2zM2104 624h2v2h-2zM2106 622h2v2h-2zM2108 620h2v2h-2zM2110 618h2v2h-2zM2112 616h2v2h-2zM2114 614h2v2h-2zM2116 612h2v2h-2zM2118 612h2v2h-2zM2120 610h2v2h-2zM2122 610h2v2h-2zM2124 608h2v2h-2zM2126 608h2v2h-2zM2128 608h2v2h-2zM2130 606h2v2h-2zM2132 606h2v2h-2zM2134 606h2v2h-2zM2136 604h2v2h-2zM2138 604h2v2h-2zM2140 604h2v2h-2zM2142 602h2v2h-2zM2144 602h2v2h-2zM2146 602h2v2h-2zM2148 602h2v2h-2zM2150 602h2v2h-2zM2152 600h2v2h-2zM2154 600h2v2h-2zM2156 600h2v2h-2zM2158 600h2v2h-2zM2160 600h2v2h-2zM2162 598h2v2h-2zM2164 598h2v2h-2zM2166 598h2v2h-2zM2168 598h2v2h-2zM2170 598h2v2h-2zM2172 596h2v2h-2zM2172 594h2v2h-2zM2174 592h2v2h-2zM2176 590h2v2h-2zM2176 588h2v2h-2zM2178 586h2v2h-2zM2180 584h2v2h-2zM2180 582h2v2h-2zM2182 580h2v2h-2zM2182 578h2v2h-2zM2184 576h2v2h-2zM2186 574h2v2h-2zM2186 572h2v2h-2zM2188 570h2v2h-2zM2190 568h2v2h-2zM2190 566h2v2h-2zM2192 564h2v2h-2zM2192 562h2v2h-2zM2194 560h2v2h-2zM2196 558h2v2h-2zM2196 556h2v2h-2zM2198 554h2v2h-2zM2200 552h2v2h-2zM2200 550h2v2h-2zM2202 548h2v2h-2zM2202 546h2v2h-2zM2204 544h2v2h-2zM2206 542h2v2h-2zM2208 540h2v2h-2zM2208 538h2v2h-2zM2210 536h2v2h-2zM2212 534h2v2h-2zM2214 532h2v2h-2zM2216 530h2v2h-2zM2216 528h2v2h-2zM2218 526h2v2h-2zM2220 524h2v2h-2zM2222 522h2v2h-2zM2224 520h2v2h-2zM2226 518h2v2h-2zM2228 516h2v2h-2zM2230 514h2v2h-2zM2232 512h2v2h-2zM2234 510h2v2h-2zM2234 508h2v2h-2zM2236 506h2v2h-2zM2238 504h2v2h-2zM2240 502h2v2h-2zM2242 500h2v2h-2zM2242 498h2v2h-2zM2244 496h2v2h-2zM2246 494h2v2h-2zM2248 492h2v2h-2zM2250 490h2v2h-2zM2252 488h2v2h-2zM2252 486h2v2h-2zM2254 486h2v2h-2zM2256 484h2v2h-2zM2258 484h2v2h-2zM2260 482h2v2h-2zM2262 482h2v2h-2zM2264 480h2v2h-2zM2266 480h2v2h-2zM2268 478h2v2h-2zM2270 478h2v2h-2zM2272 478h2v2h-2zM2274 476h2v2h-2zM2276 476h2v2h-2zM2278 476h2v2h-2zM2280 474h2v2h-2zM2282 474h2v2h-2zM2282 476h2v2h-2zM2284 478h2v2h-2zM2286 478h2v2h-2zM2288 480h2v2h-2zM2290 482h2v2h-2zM2292 484h2v2h-2zM2294 486h2v2h-2zM2296 486h2v2h-2zM2298 486h2v2h-2zM2300 488h2v2h-2zM2302 488h2v2h-2zM2304 490h2v2h-2zM2306 490h2v2h-2zM2308 492h2v2h-2zM2310 492h2v2h-2zM2312 492h2v2h-2zM2314 494h2v2h-2zM2316 494h2v2h-2zM2318 494h2v2h-2zM2320 496h2v2h-2zM2322 496h2v2h-2zM2324 496h2v2h-2zM2326 496h2v2h-2zM2328 496h2v2h-2zM2330 496h2v2h-2zM2332 496h2v2h-2zM2334 496h2v2h-2zM2336 496h2v2h-2zM2338 496h2v2h-2zM2340 496h2v2h-2zM2342 496h2v2h-2zM2344 498h2v2h-2zM2346 498h2v2h-2zM2348 500h2v2h-2zM2350 502h2v2h-2zM2352 502h2v2h-2zM2354 504h2v2h-2zM2356 504h2v2h-2zM2358 506h2v2h-2zM2360 506h2v2h-2zM2362 508h2v2h-2zM2364 508h2v2h-2zM2366 508h2v2h-2zM2368 508h2v2h-2zM2370 508h2v2h-2zM2372 508h2v2h-2zM2374 508h2v2h-2zM2376 508h2v2h-2zM2378 508h2v2h-2zM2380 508h2v2h-2zM2382 508h2v2h-2zM2384 508h2v2h-2zM2386 510h2v2h-2zM2388 510h2v2h-2zM2390 510h2v2h-2zM2392 512h2v2h-2zM2394 512h2v2h-2zM2396 512h2v2h-2zM2398 510h2v2h-2zM2400 510h2v2h-2zM2402 510h2v2h-2zM2404 510h2v2h-2zM2406 508h2v2h-2zM2408 508h2v2h-2zM2410 508h2v2h-2zM2412 508h2v2h-2zM2414 508h2v2h-2zM2416 508h2v2h-2zM2418 508h2v2h-2zM2420 508h2v2h-2zM2422 508h2v2h-2zM2424 506h2v2h-2zM2426 506h2v2h-2zM2428 506h2v2h-2zM2430 506h2v2h-2zM2432 506h2v2h-2zM2434 504h2v2h-2zM2436 504h2v2h-2zM2438 504h2v2h-2zM2440 504h2v2h-2zM2442 502h2v2h-2zM2444 502h2v2h-2zM2446 502h2v2h-2zM2448 502h2v2h-2zM2450 502h2v2h-2zM2452 500h2v2h-2zM2454 500h2v2h-2zM2456 498h2v2h-2zM2458 498h2v2h-2zM2460 498h2v2h-2zM2462 496h2v2h-2zM2464 496h2v2h-2zM2466 494h2v2h-2zM2468 494h2v2h-2zM2470 492h2v2h-2zM2472 492h2v2h-2zM2474 492h2v2h-2zM2476 490h2v2h-2zM2478 490h2v2h-2zM2480 488h2v2h-2zM2482 488h2v2h-2zM2484 486h2v2h-2zM2486 486h2v2h-2zM2488 486h2v2h-2zM2490 484h2v2h-2zM2492 482h2v2h-2zM2494 480h2v2h-2zM2496 480h2v2h-2zM2498 478h2v2h-2zM2500 476h2v2h-2zM2502 474h2v2h-2zM2502 472h2v2h-2zM2504 470h2v2h-2zM2506 468h2v2h-2zM2508 466h2v2h-2zM2510 466h2v2h-2zM2512 464h2v2h-2zM2514 462h2v2h-2zM2516 460h2v2h-2zM2518 458h2v2h-2zM2520 456h2v2h-2zM2522 456h2v2h-2zM2524 454h2v2h-2zM2526 452h2v2h-2zM2528 452h2v2h-2zM2530 450h2v2h-2zM2532 450h2v2h-2zM2534 448h2v2h-2zM2536 446h2v2h-2zM2538 446h2v2h-2zM2540 444h2v2h-2zM2542 442h2v2h-2zM2544 442h2v2h-2zM2546 440h2v2h-2zM2548 438h2v2h-2zM2550 436h2v2h-2zM2550 434h2v2h-2zM2552 432h2v2h-2zM2554 432h2v2h-2zM2556 430h2v2h-2zM2558 428h2v2h-2zM2558 426h2v2h-2zM2560 424h2v2h-2zM2562 422h2v2h-2zM2562 420h2v2h-2zM2564 418h2v2h-2zM2566 416h2v2h-2zM2566 414h2v2h-2zM2568 412h2v2h-2zM2568 410h2v2h-2zM2570 410h2v2h-2zM2572 408h2v2h-2zM2572 406h2v2h-2zM2574 404h2v2h-2zM2574 402h2v2h-2zM2576 400h2v2h-2zM2578 398h2v2h-2zM2578 396h2v2h-2zM2580 394h2v2h-2zM2580 392h2v2h-2zM2582 390h2v2h-2zM2584 388h2v2h-2zM2584 386h2v2h-2zM2586 384h2v2h-2zM2586 382h2v2h-2zM2588 380h2v2h-2zM2588 378h2v2h-2zM2590 376h2v2h-2zM2592 374h2v2h-2zM2594 372h2v2h-2zM2596 370h2v2h-2zM2598 368h2v2h-2zM2600 366h2v2h-2zM2602 364h2v2h-2zM2604 362h2v2h-2zM2606 362h2v2h-2zM2608 360h2v2h-2zM2608 358h2v2h-2zM2610 358h2v2h-2zM2612 356h2v2h-2zM2614 356h2v2h-2zM2616 354h2v2h-2zM2618 354h2v2h-2zM2620 354h2v2h-2zM2620 352h2v2h-2zM2622 352h2v2h-2zM2624 350h2v2h-2zM2626 350h2v2h-2zM2628 350h2v2h-2zM2630 348h2v2h-2zM2632 348h2v2h-2zM2634 348h2v2h-2zM2636 346h2v2h-2zM2638 346h2v2h-2zM2640 344h2v2h-2zM2642 344h2v2h-2zM2644 342h2v2h-2zM2646 342h2v2h-2zM2648 340h2v2h-2zM2650 340h2v2h-2zM2652 338h2v2h-2zM2654 338h2v2h-2zM2656 336h2v2h-2zM2658 336h2v2h-2zM2660 334h2v2h-2zM2662 334h2v2h-2zM2664 334h2v2h-2zM2666 332h2v2h-2zM2668 332h2v2h-2zM2670 330h2v2h-2zM2672 330h2v2h-2zM2674 328h2v2h-2zM2676 328h2v2h-2zM2678 328h2v2h-2zM2680 326h2v2h-2zM2682 326h2v2h-2zM2684 326h2v2h-2zM2686 328h2v2h-2zM2688 328h2v2h-2zM2690 330h2v2h-2zM2692 330h2v2h-2zM2692 332h2v2h-2zM2694 332h2v2h-2zM2696 334h2v2h-2zM2698 334h2v2h-2zM2700 336h2v2h-2zM2702 336h2v2h-2zM2704 338h2v2h-2zM2706 338h2v2h-2zM2708 340h2v2h-2zM2710 340h2v2h-2zM2712 342h2v2h-2zM2714 342h2v2h-2zM2716 342h2v2h-2zM2718 342h2v2h-2zM2720 344h2v2h-2zM2722 344h2v2h-2zM2724 344h2v2h-2zM2726 344h2v2h-2zM2728 346h2v2h-2zM2730 348h2v2h-2zM2732 350h2v2h-2zM2734 352h2v2h-2zM2736 354h2v2h-2zM2738 356h2v2h-2zM2740 358h2v2h-2zM2740 360h2v2h-2zM2742 362h2v2h-2zM2742 364h2v2h-2zM2744 364h2v2h-2zM2746 366h2v2h-2zM2746 368h2v2h-2zM2748 370h2v2h-2zM2748 372h2v2h-2zM2750 374h2v2h-2zM2750 376h2v2h-2zM2752 378h2v2h-2zM2754 380h2v2h-2zM2754 382h2v2h-2zM2756 384h2v2h-2zM2756 386h2v2h-2zM2758 388h2v2h-2zM2760 390h2v2h-2zM2760 392h2v2h-2zM2762 394h2v2h-2zM2764 396h2v2h-2zM2766 398h2v2h-2zM2766 400h2v2h-2zM2768 402h2v2h-2zM2770 404h2v2h-2zM2772 406h2v2h-2zM2772 408h2v2h-2zM2774 410h2v2h-2zM2776 412h2v2h-2zM2778 414h2v2h-2zM2778 416h2v2h-2zM2780 418h2v2h-2zM2782 420h2v2h-2zM2784 422h2v2h-2zM2786 424h2v2h-2zM2788 426h2v2h-2zM2788 428h2v2h-2zM2790 430h2v2h-2zM2792 432h2v2h-2zM2794 434h2v2h-2zM2796 436h2v2h-2zM2798 438h2v2h-2zM2800 440h2v2h-2zM2802 440h2v2h-2zM2804 442h2v2h-2zM2806 444h2v2h-2zM2808 444h2v2h-2zM2810 446h2v2h-2zM2812 448h2v2h-2zM2814 448h2v2h-2zM2816 450h2v2h-2zM2818 452h2v2h-2zM2820 452h2v2h-2zM2820 454h2v2h-2zM2822 454h2v2h-2zM2824 456h2v2h-2zM2826 458h2v2h-2zM2828 458h2v2h-2zM2830 460h2v2h-2zM2832 460h2v2h-2zM2834 462h2v2h-2zM2836 462h2v2h-2zM2838 462h2v2h-2zM2840 464h2v2h-2zM2842 464h2v2h-2zM2844 464h2v2h-2zM2846 462h2v2h-2zM2848 462h2v2h-2zM2850 460h2v2h-2zM2852 460h2v2h-2zM2854 460h2v2h-2zM2856 458h2v2h-2zM2858 458h2v2h-2zM2860 458h2v2h-2zM2862 456h2v2h-2zM2864 456h2v2h-2zM2866 456h2v2h-2zM2868 456h2v2h-2zM2870 456h2v2h-2zM2872 458h2v2h-2zM2874 458h2v2h-2z" fill="#ff0000"/></g><rect x="1881" y="257" width="1018" height="566" fill="none" stroke="#fff" stroke-width="2"/><text x="1890" y="280" font-family="'Liberation Sans','DejaVu Sans',sans-serif" font-size="18.67" fill="#fff" text-anchor="start" xml:space="preserve">GBPUSD,H4  1.6164 1.6171 1.6159 1.6165</text><rect x="2010" y="824" width="2" height="6" fill="#fff"/><text x="2009" y="848" font-family="'Liberation Sans','DejaVu Sans',sans-serif" font-size="18.67" fill="#fff" text-anchor="start" letter-spacing="-0.12" xml:space="preserve">13 Sep 08:00</text><rect x="2138" y="824" width="2" height="6" fill="#fff"/><text x="2137" y="848" font-family="'Liberation Sans','DejaVu Sans',sans-serif" font-size="18.67" fill="#fff" text-anchor="start" letter-spacing="-0.12" xml:space="preserve">18 Sep 00:00</text><rect x="2266" y="824" width="2" height="6" fill="#fff"/><text x="2265" y="848" font-family="'Liberation Sans','DejaVu Sans',sans-serif" font-size="18.67" fill="#fff" text-anchor="start" letter-spacing="-0.12" xml:space="preserve">20 Sep 16:00</text><rect x="2394" y="824" width="2" height="6" fill="#fff"/><text x="2393" y="848" font-family="'Liberation Sans','DejaVu Sans',sans-serif" font-size="18.67" fill="#fff" text-anchor="start" letter-spacing="-0.12" xml:space="preserve">25 Sep 08:00</text><rect x="2522" y="824" width="2" height="6" fill="#fff"/><text x="2521" y="848" font-family="'Liberation Sans','DejaVu Sans',sans-serif" font-size="18.67" fill="#fff" text-anchor="start" letter-spacing="-0.12" xml:space="preserve">30 Sep 00:00</text><rect x="2650" y="824" width="2" height="6" fill="#fff"/><text x="2649" y="848" font-family="'Liberation Sans','DejaVu Sans',sans-serif" font-size="18.67" fill="#fff" text-anchor="start" letter-spacing="-0.12" xml:space="preserve">2 Oct 16:00</text><rect x="2778" y="824" width="2" height="6" fill="#fff"/><text x="2777" y="848" font-family="'Liberation Sans','DejaVu Sans',sans-serif" font-size="18.67" fill="#fff" text-anchor="start" letter-spacing="-0.12" xml:space="preserve">7 Oct 08:00</text><rect x="1882" y="824" width="2" height="6" fill="#fff"/></svg><svg style="left:388px;top:926px" width="1464" height="284" viewBox="388 926 1464 284" shape-rendering="crispEdges"><clipPath id="cc"><rect x="394" y="932" width="1378" height="300"/></clipPath><g clip-path="url(#cc)"><line x1="459" y1="930" x2="459" y2="1212" stroke="#778899" stroke-width="2" stroke-dasharray="6 6"/><line x1="523" y1="930" x2="523" y2="1212" stroke="#778899" stroke-width="2" stroke-dasharray="6 6"/><line x1="587" y1="930" x2="587" y2="1212" stroke="#778899" stroke-width="2" stroke-dasharray="6 6"/><line x1="651" y1="930" x2="651" y2="1212" stroke="#778899" stroke-width="2" stroke-dasharray="6 6"/><line x1="715" y1="930" x2="715" y2="1212" stroke="#778899" stroke-width="2" stroke-dasharray="6 6"/><line x1="779" y1="930" x2="779" y2="1212" stroke="#778899" stroke-width="2" stroke-dasharray="6 6"/><line x1="843" y1="930" x2="843" y2="1212" stroke="#778899" stroke-width="2" stroke-dasharray="6 6"/><line x1="907" y1="930" x2="907" y2="1212" stroke="#778899" stroke-width="2" stroke-dasharray="6 6"/><line x1="971" y1="930" x2="971" y2="1212" stroke="#778899" stroke-width="2" stroke-dasharray="6 6"/><line x1="1035" y1="930" x2="1035" y2="1212" stroke="#778899" stroke-width="2" stroke-dasharray="6 6"/><line x1="1099" y1="930" x2="1099" y2="1212" stroke="#778899" stroke-width="2" stroke-dasharray="6 6"/><line x1="1163" y1="930" x2="1163" y2="1212" stroke="#778899" stroke-width="2" stroke-dasharray="6 6"/><line x1="1227" y1="930" x2="1227" y2="1212" stroke="#778899" stroke-width="2" stroke-dasharray="6 6"/><line x1="1291" y1="930" x2="1291" y2="1212" stroke="#778899" stroke-width="2" stroke-dasharray="6 6"/><line x1="1355" y1="930" x2="1355" y2="1212" stroke="#778899" stroke-width="2" stroke-dasharray="6 6"/><line x1="1419" y1="930" x2="1419" y2="1212" stroke="#778899" stroke-width="2" stroke-dasharray="6 6"/><line x1="1483" y1="930" x2="1483" y2="1212" stroke="#778899" stroke-width="2" stroke-dasharray="6 6"/><line x1="1547" y1="930" x2="1547" y2="1212" stroke="#778899" stroke-width="2" stroke-dasharray="6 6"/><line x1="1611" y1="930" x2="1611" y2="1212" stroke="#778899" stroke-width="2" stroke-dasharray="6 6"/><line x1="1675" y1="930" x2="1675" y2="1212" stroke="#778899" stroke-width="2" stroke-dasharray="6 6"/><line x1="1739" y1="930" x2="1739" y2="1212" stroke="#778899" stroke-width="2" stroke-dasharray="6 6"/><line x1="384" y1="971" x2="1772" y2="971" stroke="#778899" stroke-width="2" stroke-dasharray="6 6"/><line x1="384" y1="1037" x2="1772" y2="1037" stroke="#778899" stroke-width="2" stroke-dasharray="6 6"/><line x1="384" y1="1103" x2="1772" y2="1103" stroke="#778899" stroke-width="2" stroke-dasharray="6 6"/><line x1="384" y1="1169" x2="1772" y2="1169" stroke="#778899" stroke-width="2" stroke-dasharray="6 6"/><rect x="394" y="972" width="2" height="18" fill="#00ff00"/><rect x="392" y="980" width="2" height="2" fill="#00ff00"/><rect x="396" y="976" width="2" height="2" fill="#00ff00"/><rect x="402" y="976" width="2" height="12" fill="#00ff00"/><rect x="400" y="976" width="2" height="2" fill="#00ff00"/><rect x="404" y="980" width="2" height="2" fill="#00ff00"/><rect x="410" y="972" width="2" height="10" fill="#00ff00"/><rect x="408" y="980" width="2" height="2" fill="#00ff00"/><rect x="412" y="978" width="2" height="2" fill="#00ff00"/><rect x="418" y="960" width="2" height="22" fill="#00ff00"/><rect x="416" y="978" width="2" height="2" fill="#00ff00"/><rect x="420" y="962" width="2" height="2" fill="#00ff00"/><rect x="426" y="958" width="2" height="32" fill="#00ff00"/><rect x="424" y="962" width="2" height="2" fill="#00ff00"/><rect x="428" y="984" width="2" height="2" fill="#00ff00"/><rect x="434" y="974" width="2" height="16" fill="#00ff00"/><rect x="432" y="984" width="2" height="2" fill="#00ff00"/><rect x="436" y="980" width="2" height="2" fill="#00ff00"/><rect x="442" y="980" width="2" height="36" fill="#00ff00"/><rect x="440" y="980" width="2" height="2" fill="#00ff00"/><rect x="444" y="1010" width="2" height="2" fill="#00ff00"/><rect x="450" y="1008" width="2" height="22" fill="#00ff00"/><rect x="448" y="1010" width="2" height="2" fill="#00ff00"/><rect x="452" y="1014" width="2" height="2" fill="#00ff00"/><rect x="458" y="1008" width="2" height="14" fill="#00ff00"/><rect x="456" y="1014" width="2" height="2" fill="#00ff00"/><rect x="460" y="1016" width="2" height="2" fill="#00ff00"/><rect x="466" y="1012" width="2" height="12" fill="#00ff00"/><rect x="464" y="1016" width="2" height="2" fill="#00ff00"/><rect x="468" y="1016" width="2" height="2" fill="#00ff00"/><rect x="474" y="1004" width="2" height="18" fill="#00ff00"/><rect x="472" y="1016" width="2" height="2" fill="#00ff00"/><rect x="476" y="1004" width="2" height="2" fill="#00ff00"/><rect x="482" y="986" width="2" height="32" fill="#00ff00"/><rect x="480" y="1004" width="2" height="2" fill="#00ff00"/><rect x="484" y="1000" width="2" height="2" fill="#00ff00"/><rect x="490" y="994" width="2" height="48" fill="#00ff00"/><rect x="488" y="1000" width="2" height="2" fill="#00ff00"/><rect x="492" y="1022" width="2" height="2" fill="#00ff00"/><rect x="498" y="1008" width="2" height="20" fill="#00ff00"/><rect x="496" y="1022" width="2" height="2" fill="#00ff00"/><rect x="500" y="1012" width="2" height="2" fill="#00ff00"/><rect x="506" y="1004" width="2" height="16" fill="#00ff00"/><rect x="504" y="1012" width="2" height="2" fill="#00ff00"/><rect x="508" y="1006" width="2" height="2" fill="#00ff00"/><rect x="514" y="992" width="2" height="16" fill="#00ff00"/><rect x="512" y="1006" width="2" height="2" fill="#00ff00"/><rect x="516" y="994" width="2" height="2" fill="#00ff00"/><rect x="522" y="982" width="2" height="30" fill="#00ff00"/><rect x="520" y="994" width="2" height="2" fill="#00ff00"/><rect x="524" y="1004" width="2" height="2" fill="#00ff00"/><rect x="530" y="998" width="2" height="36" fill="#00ff00"/><rect x="528" y="1004" width="2" height="2" fill="#00ff00"/><rect x="532" y="1024" width="2" height="2" fill="#00ff00"/><rect x="538" y="982" width="2" height="44" fill="#00ff00"/><rect x="536" y="1024" width="2" height="2" fill="#00ff00"/><rect x="540" y="1012" width="2" height="2" fill="#00ff00"/><rect x="546" y="1012" width="2" height="16" fill="#00ff00"/><rect x="544" y="1012" width="2" height="2" fill="#00ff00"/><rect x="548" y="1020" width="2" height="2" fill="#00ff00"/><rect x="554" y="1050" width="2" height="28" fill="#00ff00"/><rect x="552" y="1072" width="2" height="2" fill="#00ff00"/><rect x="556" y="1066" width="2" height="2" fill="#00ff00"/><rect x="562" y="1060" width="2" height="10" fill="#00ff00"/><rect x="560" y="1066" width="2" height="2" fill="#00ff00"/><rect x="564" y="1064" width="2" height="2" fill="#00ff00"/><rect x="570" y="1044" width="2" height="22" fill="#00ff00"/><rect x="568" y="1064" width="2" height="2" fill="#00ff00"/><rect x="572" y="1046" width="2" height="2" fill="#00ff00"/><rect x="578" y="1034" width="2" height="34" fill="#00ff00"/><rect x="576" y="1046" width="2" height="2" fill="#00ff00"/><rect x="580" y="1062" width="2" height="2" fill="#00ff00"/><rect x="586" y="1042" width="2" height="22" fill="#00ff00"/><rect x="584" y="1062" width="2" height="2" fill="#00ff00"/><rect x="588" y="1042" width="2" height="2" fill="#00ff00"/><rect x="594" y="1034" width="2" height="14" fill="#00ff00"/><rect x="592" y="1042" width="2" height="2" fill="#00ff00"/><rect x="596" y="1038" width="2" height="2" fill="#00ff00"/><rect x="602" y="1036" width="2" height="8" fill="#00ff00"/><rect x="600" y="1038" width="2" height="2" fill="#00ff00"/><rect x="604" y="1040" width="2" height="2" fill="#00ff00"/><rect x="610" y="1034" width="2" height="8" fill="#00ff00"/><rect x="608" y="1040" width="2" height="2" fill="#00ff00"/><rect x="612" y="1038" width="2" height="2" fill="#00ff00"/><rect x="618" y="1038" width="2" height="16" fill="#00ff00"/><rect x="616" y="1038" width="2" height="2" fill="#00ff00"/><rect x="620" y="1048" width="2" height="2" fill="#00ff00"/><rect x="626" y="1042" width="2" height="16" fill="#00ff00"/><rect x="624" y="1046" width="2" height="2" fill="#00ff00"/><rect x="628" y="1050" width="2" height="2" fill="#00ff00"/><rect x="634" y="1034" width="2" height="18" fill="#00ff00"/><rect x="632" y="1050" width="2" height="2" fill="#00ff00"/><rect x="636" y="1046" width="2" height="2" fill="#00ff00"/><rect x="642" y="1046" width="2" height="8" fill="#00ff00"/><rect x="640" y="1046" width="2" height="2" fill="#00ff00"/><rect x="644" y="1050" width="2" height="2" fill="#00ff00"/><rect x="650" y="1042" width="2" height="12" fill="#00ff00"/><rect x="648" y="1050" width="2" height="2" fill="#00ff00"/><rect x="652" y="1046" width="2" height="2" fill="#00ff00"/><rect x="658" y="1042" width="2" height="8" fill="#00ff00"/><rect x="656" y="1046" width="2" height="2" fill="#00ff00"/><rect x="660" y="1046" width="2" height="2" fill="#00ff00"/><rect x="666" y="1042" width="2" height="12" fill="#00ff00"/><rect x="664" y="1046" width="2" height="2" fill="#00ff00"/><rect x="668" y="1048" width="2" height="2" fill="#00ff00"/><rect x="674" y="1042" width="2" height="18" fill="#00ff00"/><rect x="672" y="1048" width="2" height="2" fill="#00ff00"/><rect x="676" y="1046" width="2" height="2" fill="#00ff00"/><rect x="682" y="1044" width="2" height="20" fill="#00ff00"/><rect x="680" y="1046" width="2" height="2" fill="#00ff00"/><rect x="684" y="1062" width="2" height="2" fill="#00ff00"/><rect x="690" y="1062" width="2" height="114" fill="#00ff00"/><rect x="688" y="1062" width="2" height="2" fill="#00ff00"/><rect x="692" y="1166" width="2" height="2" fill="#00ff00"/><rect x="698" y="1150" width="2" height="22" fill="#00ff00"/><rect x="696" y="1166" width="2" height="2" fill="#00ff00"/><rect x="700" y="1164" width="2" height="2" fill="#00ff00"/><rect x="706" y="1156" width="2" height="14" fill="#00ff00"/><rect x="704" y="1164" width="2" height="2" fill="#00ff00"/><rect x="708" y="1166" width="2" height="2" fill="#00ff00"/><rect x="714" y="1158" width="2" height="34" fill="#00ff00"/><rect x="712" y="1166" width="2" height="2" fill="#00ff00"/><rect x="716" y="1184" width="2" height="2" fill="#00ff00"/><rect x="722" y="1162" width="2" height="28" fill="#00ff00"/><rect x="720" y="1184" width="2" height="2" fill="#00ff00"/><rect x="724" y="1168" width="2" height="2" fill="#00ff00"/><rect x="730" y="1160" width="2" height="30" fill="#00ff00"/><rect x="728" y="1168" width="2" height="2" fill="#00ff00"/><rect x="732" y="1168" width="2" height="2" fill="#00ff00"/><rect x="738" y="1166" width="2" height="20" fill="#00ff00"/><rect x="736" y="1168" width="2" height="2" fill="#00ff00"/><rect x="740" y="1178" width="2" height="2" fill="#00ff00"/><rect x="746" y="1174" width="2" height="8" fill="#00ff00"/><rect x="744" y="1178" width="2" height="2" fill="#00ff00"/><rect x="748" y="1176" width="2" height="2" fill="#00ff00"/><rect x="754" y="1172" width="2" height="10" fill="#00ff00"/><rect x="752" y="1176" width="2" height="2" fill="#00ff00"/><rect x="756" y="1178" width="2" height="2" fill="#00ff00"/><rect x="762" y="1168" width="2" height="18" fill="#00ff00"/><rect x="760" y="1178" width="2" height="2" fill="#00ff00"/><rect x="764" y="1178" width="2" height="2" fill="#00ff00"/><rect x="770" y="1158" width="2" height="34" fill="#00ff00"/><rect x="768" y="1178" width="2" height="2" fill="#00ff00"/><rect x="772" y="1176" width="2" height="2" fill="#00ff00"/><rect x="778" y="1162" width="2" height="22" fill="#00ff00"/><rect x="776" y="1176" width="2" height="2" fill="#00ff00"/><rect x="780" y="1182" width="2" height="2" fill="#00ff00"/><rect x="786" y="1170" width="2" height="22" fill="#00ff00"/><rect x="784" y="1182" width="2" height="2" fill="#00ff00"/><rect x="788" y="1174" width="2" height="2" fill="#00ff00"/><rect x="794" y="1174" width="2" height="24" fill="#00ff00"/><rect x="792" y="1196" width="2" height="2" fill="#00ff00"/><rect x="796" y="1176" width="2" height="2" fill="#00ff00"/><rect x="802" y="1162" width="2" height="18" fill="#00ff00"/><rect x="800" y="1176" width="2" height="2" fill="#00ff00"/><rect x="804" y="1172" width="2" height="2" fill="#00ff00"/><rect x="810" y="1158" width="2" height="28" fill="#00ff00"/><rect x="808" y="1172" width="2" height="2" fill="#00ff00"/><rect x="812" y="1170" width="2" height="2" fill="#00ff00"/><rect x="818" y="1156" width="2" height="40" fill="#00ff00"/><rect x="816" y="1170" width="2" height="2" fill="#00ff00"/><rect x="820" y="1190" width="2" height="2" fill="#00ff00"/><rect x="826" y="1162" width="2" height="30" fill="#00ff00"/><rect x="824" y="1190" width="2" height="2" fill="#00ff00"/><rect x="828" y="1180" width="2" height="2" fill="#00ff00"/><rect x="834" y="1172" width="2" height="12" fill="#00ff00"/><rect x="832" y="1180" width="2" height="2" fill="#00ff00"/><rect x="836" y="1174" width="2" height="2" fill="#00ff00"/><rect x="842" y="1172" width="2" height="8" fill="#00ff00"/><rect x="840" y="1174" width="2" height="2" fill="#00ff00"/><rect x="844" y="1176" width="2" height="2" fill="#00ff00"/><rect x="850" y="1174" width="2" height="6" fill="#00ff00"/><rect x="848" y="1176" width="2" height="2" fill="#00ff00"/><rect x="852" y="1176" width="2" height="2" fill="#00ff00"/><rect x="858" y="1166" width="2" height="18" fill="#00ff00"/><rect x="856" y="1176" width="2" height="2" fill="#00ff00"/><rect x="860" y="1168" width="2" height="2" fill="#00ff00"/><rect x="866" y="1154" width="2" height="20" fill="#00ff00"/><rect x="864" y="1168" width="2" height="2" fill="#00ff00"/><rect x="868" y="1160" width="2" height="2" fill="#00ff00"/><rect x="874" y="1158" width="2" height="18" fill="#00ff00"/><rect x="872" y="1160" width="2" height="2" fill="#00ff00"/><rect x="876" y="1168" width="2" height="2" fill="#00ff00"/><rect x="882" y="1156" width="2" height="16" fill="#00ff00"/><rect x="880" y="1168" width="2" height="2" fill="#00ff00"/><rect x="884" y="1160" width="2" height="2" fill="#00ff00"/><rect x="890" y="1150" width="2" height="12" fill="#00ff00"/><rect x="888" y="1160" width="2" height="2" fill="#00ff00"/><rect x="892" y="1156" width="2" height="2" fill="#00ff00"/><rect x="914" y="1170" width="2" height="10" fill="#00ff00"/><rect x="912" y="1176" width="2" height="2" fill="#00ff00"/><rect x="916" y="1178" width="2" height="2" fill="#00ff00"/><rect x="922" y="1170" width="2" height="32" fill="#00ff00"/><rect x="920" y="1178" width="2" height="2" fill="#00ff00"/><rect x="924" y="1188" width="2" height="2" fill="#00ff00"/><rect x="930" y="1184" width="2" height="10" fill="#00ff00"/><rect x="928" y="1188" width="2" height="2" fill="#00ff00"/><rect x="932" y="1188" width="2" height="2" fill="#00ff00"/><rect x="938" y="1178" width="2" height="12" fill="#00ff00"/><rect x="936" y="1188" width="2" height="2" fill="#00ff00"/><rect x="940" y="1184" width="2" height="2" fill="#00ff00"/><rect x="946" y="1172" width="2" height="16" fill="#00ff00"/><rect x="944" y="1184" width="2" height="2" fill="#00ff00"/><rect x="948" y="1182" width="2" height="2" fill="#00ff00"/><rect x="954" y="1172" width="2" height="20" fill="#00ff00"/><rect x="952" y="1182" width="2" height="2" fill="#00ff00"/><rect x="956" y="1184" width="2" height="2" fill="#00ff00"/><rect x="962" y="1172" width="2" height="16" fill="#00ff00"/><rect x="960" y="1184" width="2" height="2" fill="#00ff00"/><rect x="964" y="1180" width="2" height="2" fill="#00ff00"/><rect x="970" y="1172" width="2" height="28" fill="#00ff00"/><rect x="968" y="1180" width="2" height="2" fill="#00ff00"/><rect x="972" y="1178" width="2" height="2" fill="#00ff00"/><rect x="978" y="1170" width="2" height="12" fill="#00ff00"/><rect x="976" y="1178" width="2" height="2" fill="#00ff00"/><rect x="980" y="1180" width="2" height="2" fill="#00ff00"/><rect x="986" y="1174" width="2" height="8" fill="#00ff00"/><rect x="984" y="1180" width="2" height="2" fill="#00ff00"/><rect x="988" y="1178" width="2" height="2" fill="#00ff00"/><rect x="994" y="1172" width="2" height="16" fill="#00ff00"/><rect x="992" y="1178" width="2" height="2" fill="#00ff00"/><rect x="996" y="1184" width="2" height="2" fill="#00ff00"/><rect x="1002" y="1184" width="2" height="18" fill="#00ff00"/><rect x="1000" y="1184" width="2" height="2" fill="#00ff00"/><rect x="1004" y="1198" width="2" height="2" fill="#00ff00"/><rect x="1010" y="1192" width="2" height="22" fill="#00ff00"/><rect x="1008" y="1198" width="2" height="2" fill="#00ff00"/><rect x="1012" y="1212" width="2" height="2" fill="#00ff00"/><rect x="1050" y="1208" width="2" height="6" fill="#00ff00"/><rect x="1048" y="1210" width="2" height="2" fill="#00ff00"/><rect x="1052" y="1212" width="2" height="2" fill="#00ff00"/><rect x="1114" y="1202" width="2" height="12" fill="#00ff00"/><rect x="1112" y="1210" width="2" height="2" fill="#00ff00"/><rect x="1116" y="1206" width="2" height="2" fill="#00ff00"/><rect x="1130" y="1200" width="2" height="14" fill="#00ff00"/><rect x="1128" y="1206" width="2" height="2" fill="#00ff00"/><rect x="1132" y="1204" width="2" height="2" fill="#00ff00"/><rect x="1138" y="1200" width="2" height="14" fill="#00ff00"/><rect x="1136" y="1204" width="2" height="2" fill="#00ff00"/><rect x="1140" y="1208" width="2" height="2" fill="#00ff00"/><rect x="1258" y="1196" width="2" height="18" fill="#00ff00"/><rect x="1256" y="1200" width="2" height="2" fill="#00ff00"/><rect x="1260" y="1204" width="2" height="2" fill="#00ff00"/><rect x="1266" y="1198" width="2" height="12" fill="#00ff00"/><rect x="1264" y="1204" width="2" height="2" fill="#00ff00"/><rect x="1268" y="1206" width="2" height="2" fill="#00ff00"/><rect x="1274" y="1206" width="2" height="8" fill="#00ff00"/><rect x="1272" y="1206" width="2" height="2" fill="#00ff00"/><rect x="1276" y="1212" width="2" height="2" fill="#00ff00"/><rect x="1386" y="1184" width="2" height="30" fill="#00ff00"/><rect x="1384" y="1212" width="2" height="2" fill="#00ff00"/><rect x="1388" y="1190" width="2" height="2" fill="#00ff00"/><rect x="1394" y="1170" width="2" height="20" fill="#00ff00"/><rect x="1392" y="1188" width="2" height="2" fill="#00ff00"/><rect x="1396" y="1178" width="2" height="2" fill="#00ff00"/><rect x="1402" y="1170" width="2" height="16" fill="#00ff00"/><rect x="1400" y="1178" width="2" height="2" fill="#00ff00"/><rect x="1404" y="1180" width="2" height="2" fill="#00ff00"/><rect x="1410" y="1178" width="2" height="8" fill="#00ff00"/><rect x="1408" y="1180" width="2" height="2" fill="#00ff00"/><rect x="1412" y="1182" width="2" height="2" fill="#00ff00"/><rect x="1418" y="1170" width="2" height="16" fill="#00ff00"/><rect x="1416" y="1182" width="2" height="2" fill="#00ff00"/><rect x="1420" y="1180" width="2" height="2" fill="#00ff00"/><rect x="1434" y="1170" width="2" height="12" fill="#00ff00"/><rect x="1432" y="1180" width="2" height="2" fill="#00ff00"/><rect x="1436" y="1178" width="2" height="2" fill="#00ff00"/><rect x="1442" y="1170" width="2" height="28" fill="#00ff00"/><rect x="1440" y="1178" width="2" height="2" fill="#00ff00"/><rect x="1444" y="1180" width="2" height="2" fill="#00ff00"/><rect x="1450" y="1170" width="2" height="16" fill="#00ff00"/><rect x="1448" y="1180" width="2" height="2" fill="#00ff00"/><rect x="1452" y="1176" width="2" height="2" fill="#00ff00"/><rect x="1458" y="1170" width="2" height="12" fill="#00ff00"/><rect x="1456" y="1176" width="2" height="2" fill="#00ff00"/><rect x="1460" y="1176" width="2" height="2" fill="#00ff00"/><rect x="1466" y="1170" width="2" height="12" fill="#00ff00"/><rect x="1464" y="1176" width="2" height="2" fill="#00ff00"/><rect x="1468" y="1178" width="2" height="2" fill="#00ff00"/><rect x="1474" y="1170" width="2" height="12" fill="#00ff00"/><rect x="1472" y="1178" width="2" height="2" fill="#00ff00"/><rect x="1476" y="1180" width="2" height="2" fill="#00ff00"/><rect x="1482" y="1170" width="2" height="30" fill="#00ff00"/><rect x="1480" y="1180" width="2" height="2" fill="#00ff00"/><rect x="1484" y="1198" width="2" height="2" fill="#00ff00"/><rect x="1490" y="1194" width="2" height="14" fill="#00ff00"/><rect x="1488" y="1198" width="2" height="2" fill="#00ff00"/><rect x="1492" y="1196" width="2" height="2" fill="#00ff00"/><rect x="1498" y="1170" width="2" height="28" fill="#00ff00"/><rect x="1496" y="1196" width="2" height="2" fill="#00ff00"/><rect x="1500" y="1180" width="2" height="2" fill="#00ff00"/><rect x="1514" y="1178" width="2" height="12" fill="#00ff00"/><rect x="1512" y="1188" width="2" height="2" fill="#00ff00"/><rect x="1516" y="1180" width="2" height="2" fill="#00ff00"/><rect x="1522" y="1178" width="2" height="10" fill="#00ff00"/><rect x="1520" y="1180" width="2" height="2" fill="#00ff00"/><rect x="1524" y="1184" width="2" height="2" fill="#00ff00"/><rect x="1530" y="1170" width="2" height="18" fill="#00ff00"/><rect x="1528" y="1184" width="2" height="2" fill="#00ff00"/><rect x="1532" y="1180" width="2" height="2" fill="#00ff00"/><rect x="1538" y="1170" width="2" height="44" fill="#00ff00"/><rect x="1536" y="1180" width="2" height="2" fill="#00ff00"/><rect x="1540" y="1206" width="2" height="2" fill="#00ff00"/><rect x="1546" y="1194" width="2" height="20" fill="#00ff00"/><rect x="1544" y="1206" width="2" height="2" fill="#00ff00"/><rect x="1548" y="1196" width="2" height="2" fill="#00ff00"/><rect x="1554" y="1180" width="2" height="18" fill="#00ff00"/><rect x="1552" y="1196" width="2" height="2" fill="#00ff00"/><rect x="1556" y="1182" width="2" height="2" fill="#00ff00"/><rect x="1562" y="1170" width="2" height="14" fill="#00ff00"/><rect x="1560" y="1182" width="2" height="2" fill="#00ff00"/><rect x="1564" y="1178" width="2" height="2" fill="#00ff00"/><rect x="1570" y="1170" width="2" height="12" fill="#00ff00"/><rect x="1568" y="1178" width="2" height="2" fill="#00ff00"/><rect x="1572" y="1180" width="2" height="2" fill="#00ff00"/><rect x="1578" y="1178" width="2" height="12" fill="#00ff00"/><rect x="1576" y="1180" width="2" height="2" fill="#00ff00"/><rect x="1580" y="1182" width="2" height="2" fill="#00ff00"/><rect x="1634" y="1170" width="2" height="14" fill="#00ff00"/><rect x="1632" y="1180" width="2" height="2" fill="#00ff00"/><rect x="1636" y="1178" width="2" height="2" fill="#00ff00"/><rect x="1674" y="1170" width="2" height="44" fill="#00ff00"/><rect x="1672" y="1180" width="2" height="2" fill="#00ff00"/><rect x="1676" y="1200" width="2" height="2" fill="#00ff00"/></g><rect x="393" y="931" width="1380" height="368" fill="none" stroke="#fff" stroke-width="2"/><text x="402" y="954" font-family="'Liberation Sans','DejaVu Sans',sans-serif" font-size="18.67" fill="#fff" text-anchor="start" xml:space="preserve">USDCHF,H4  0.9021 0.9025 0.9018 0.9019</text></svg><svg style="left:1876px;top:926px" width="998" height="284" viewBox="1876 926 998 284" shape-rendering="crispEdges"><clipPath id="cj"><rect x="1882" y="932" width="1000" height="300"/></clipPath><g clip-path="url(#cj)"><line x1="1947" y1="930" x2="1947" y2="1212" stroke="#778899" stroke-width="2" stroke-dasharray="6 6"/><line x1="2011" y1="930" x2="2011" y2="1212" stroke="#778899" stroke-width="2" stroke-dasharray="6 6"/><line x1="2075" y1="930" x2="2075" y2="1212" stroke="#778899" stroke-width="2" stroke-dasharray="6 6"/><line x1="2139" y1="930" x2="2139" y2="1212" stroke="#778899" stroke-width="2" stroke-dasharray="6 6"/><line x1="2203" y1="930" x2="2203" y2="1212" stroke="#778899" stroke-width="2" stroke-dasharray="6 6"/><line x1="2267" y1="930" x2="2267" y2="1212" stroke="#778899" stroke-width="2" stroke-dasharray="6 6"/><line x1="2331" y1="930" x2="2331" y2="1212" stroke="#778899" stroke-width="2" stroke-dasharray="6 6"/><line x1="2395" y1="930" x2="2395" y2="1212" stroke="#778899" stroke-width="2" stroke-dasharray="6 6"/><line x1="2459" y1="930" x2="2459" y2="1212" stroke="#778899" stroke-width="2" stroke-dasharray="6 6"/><line x1="2523" y1="930" x2="2523" y2="1212" stroke="#778899" stroke-width="2" stroke-dasharray="6 6"/><line x1="2587" y1="930" x2="2587" y2="1212" stroke="#778899" stroke-width="2" stroke-dasharray="6 6"/><line x1="2651" y1="930" x2="2651" y2="1212" stroke="#778899" stroke-width="2" stroke-dasharray="6 6"/><line x1="2715" y1="930" x2="2715" y2="1212" stroke="#778899" stroke-width="2" stroke-dasharray="6 6"/><line x1="2779" y1="930" x2="2779" y2="1212" stroke="#778899" stroke-width="2" stroke-dasharray="6 6"/><line x1="2843" y1="930" x2="2843" y2="1212" stroke="#778899" stroke-width="2" stroke-dasharray="6 6"/><line x1="2907" y1="930" x2="2907" y2="1212" stroke="#778899" stroke-width="2" stroke-dasharray="6 6"/><line x1="1872" y1="955" x2="2880" y2="955" stroke="#778899" stroke-width="2" stroke-dasharray="6 6"/><line x1="1872" y1="1023" x2="2880" y2="1023" stroke="#778899" stroke-width="2" stroke-dasharray="6 6"/><line x1="1872" y1="1093" x2="2880" y2="1093" stroke="#778899" stroke-width="2" stroke-dasharray="6 6"/><line x1="1872" y1="1161" x2="2880" y2="1161" stroke="#778899" stroke-width="2" stroke-dasharray="6 6"/><rect x="1882" y="1120" width="1000" height="2" fill="#778899"/><rect x="1994" y="1086" width="2" height="28" fill="#00ff00"/><rect x="1990" y="1096" width="10" height="6" fill="#00ff00"/><rect x="1992" y="1098" width="6" height="2" fill="#000"/><rect x="2010" y="1094" width="2" height="52" fill="#00ff00"/><rect x="2006" y="1094" width="10" height="40" fill="#00ff00"/><rect x="2008" y="1096" width="6" height="36" fill="#fff"/><rect x="2026" y="1126" width="2" height="76" fill="#00ff00"/><rect x="2022" y="1132" width="10" height="60" fill="#00ff00"/><rect x="2024" y="1134" width="6" height="56" fill="#fff"/><rect x="2042" y="1156" width="2" height="50" fill="#00ff00"/><rect x="2038" y="1188" width="10" height="4" fill="#00ff00"/><rect x="2058" y="1168" width="2" height="46" fill="#00ff00"/><rect x="2054" y="1174" width="10" height="16" fill="#00ff00"/><rect x="2056" y="1176" width="6" height="12" fill="#000"/><rect x="2074" y="1158" width="2" height="34" fill="#00ff00"/><rect x="2070" y="1174" width="10" height="16" fill="#00ff00"/><rect x="2072" y="1176" width="6" height="12" fill="#fff"/><rect x="2090" y="1168" width="2" height="36" fill="#00ff00"/><rect x="2086" y="1188" width="10" height="2" fill="#00ff00"/><rect x="2106" y="1130" width="2" height="66" fill="#00ff00"/><rect x="2102" y="1140" width="10" height="50" fill="#00ff00"/><rect x="2104" y="1142" width="6" height="46" fill="#000"/><rect x="2122" y="1116" width="2" height="38" fill="#00ff00"/><rect x="2118" y="1126" width="10" height="16" fill="#00ff00"/><rect x="2120" y="1128" width="6" height="12" fill="#000"/><rect x="2138" y="1116" width="2" height="50" fill="#00ff00"/><rect x="2134" y="1126" width="10" height="22" fill="#00ff00"/><rect x="2136" y="1128" width="6" height="18" fill="#fff"/><rect x="2154" y="1144" width="2" height="70" fill="#00ff00"/><rect x="2150" y="1146" width="10" height="60" fill="#00ff00"/><rect x="2152" y="1148" width="6" height="56" fill="#fff"/><rect x="2170" y="1184" width="2" height="30" fill="#00ff00"/><rect x="2166" y="1200" width="10" height="6" fill="#00ff00"/><rect x="2168" y="1202" width="6" height="2" fill="#000"/><rect x="2186" y="1180" width="2" height="34" fill="#00ff00"/><rect x="2182" y="1202" width="10" height="12" fill="#00ff00"/><rect x="2184" y="1204" width="6" height="8" fill="#fff"/><rect x="2202" y="1194" width="2" height="20" fill="#00ff00"/><rect x="2198" y="1200" width="10" height="14" fill="#00ff00"/><rect x="2200" y="1202" width="6" height="10" fill="#000"/><rect x="2218" y="1200" width="2" height="14" fill="#00ff00"/><rect x="2214" y="1200" width="10" height="14" fill="#00ff00"/><rect x="2216" y="1202" width="6" height="10" fill="#fff"/><rect x="2234" y="1204" width="2" height="10" fill="#00ff00"/><rect x="2250" y="1174" width="2" height="40" fill="#00ff00"/><rect x="2246" y="1188" width="10" height="26" fill="#00ff00"/><rect x="2248" y="1190" width="6" height="22" fill="#000"/><rect x="2266" y="1170" width="2" height="24" fill="#00ff00"/><rect x="2262" y="1174" width="10" height="16" fill="#00ff00"/><rect x="2264" y="1176" width="6" height="12" fill="#000"/><rect x="2282" y="1190" width="2" height="24" fill="#00ff00"/><rect x="2298" y="1208" width="2" height="6" fill="#00ff00"/><rect x="2346" y="1206" width="2" height="8" fill="#00ff00"/><rect x="2426" y="1202" width="2" height="12" fill="#00ff00"/><rect x="2490" y="1176" width="2" height="38" fill="#00ff00"/><rect x="2486" y="1192" width="10" height="22" fill="#00ff00"/><rect x="2488" y="1194" width="6" height="18" fill="#000"/><rect x="2506" y="1172" width="2" height="28" fill="#00ff00"/><rect x="2502" y="1188" width="10" height="6" fill="#00ff00"/><rect x="2504" y="1190" width="6" height="2" fill="#000"/><rect x="2522" y="1174" width="2" height="40" fill="#00ff00"/><rect x="2518" y="1188" width="10" height="6" fill="#00ff00"/><rect x="2520" y="1190" width="6" height="2" fill="#fff"/><rect x="2538" y="1186" width="2" height="28" fill="#00ff00"/><rect x="2534" y="1192" width="10" height="10" fill="#00ff00"/><rect x="2536" y="1194" width="6" height="6" fill="#fff"/><rect x="2554" y="1148" width="2" height="56" fill="#00ff00"/><rect x="2550" y="1190" width="10" height="12" fill="#00ff00"/><rect x="2552" y="1192" width="6" height="8" fill="#000"/><rect x="2570" y="1154" width="2" height="40" fill="#00ff00"/><rect x="2566" y="1154" width="10" height="38" fill="#00ff00"/><rect x="2568" y="1156" width="6" height="34" fill="#000"/><rect x="2586" y="1124" width="2" height="36" fill="#00ff00"/><rect x="2582" y="1126" width="10" height="30" fill="#00ff00"/><rect x="2584" y="1128" width="6" height="26" fill="#000"/><rect x="2602" y="1120" width="2" height="30" fill="#00ff00"/><rect x="2598" y="1124" width="10" height="4" fill="#00ff00"/><rect x="2618" y="1082" width="2" height="70" fill="#00ff00"/><rect x="2614" y="1086" width="10" height="40" fill="#00ff00"/><rect x="2616" y="1088" width="6" height="36" fill="#000"/><rect x="2634" y="1066" width="2" height="42" fill="#00ff00"/><rect x="2630" y="1084" width="10" height="4" fill="#00ff00"/><rect x="2650" y="1062" width="2" height="28" fill="#00ff00"/><rect x="2646" y="1078" width="10" height="8" fill="#00ff00"/><rect x="2648" y="1080" width="6" height="4" fill="#000"/><rect x="2666" y="1048" width="2" height="64" fill="#00ff00"/><rect x="2662" y="1056" width="10" height="24" fill="#00ff00"/><rect x="2664" y="1058" width="6" height="20" fill="#000"/><rect x="2682" y="1022" width="2" height="42" fill="#00ff00"/><rect x="2678" y="1042" width="10" height="16" fill="#00ff00"/><rect x="2680" y="1044" width="6" height="12" fill="#000"/><rect x="2698" y="1032" width="2" height="32" fill="#00ff00"/><rect x="2694" y="1042" width="10" height="16" fill="#00ff00"/><rect x="2696" y="1044" width="6" height="12" fill="#fff"/><rect x="2714" y="1042" width="2" height="32" fill="#00ff00"/><rect x="2710" y="1056" width="10" height="4" fill="#00ff00"/><rect x="2730" y="1020" width="2" height="48" fill="#00ff00"/><rect x="2726" y="1030" width="10" height="30" fill="#00ff00"/><rect x="2728" y="1032" width="6" height="26" fill="#000"/><rect x="2746" y="1020" width="2" height="20" fill="#00ff00"/><rect x="2742" y="1022" width="10" height="10" fill="#00ff00"/><rect x="2744" y="1024" width="6" height="6" fill="#000"/><rect x="2762" y="1050" width="2" height="34" fill="#00ff00"/><rect x="2758" y="1056" width="10" height="12" fill="#00ff00"/><rect x="2760" y="1058" width="6" height="8" fill="#000"/><rect x="2778" y="1056" width="2" height="10" fill="#00ff00"/><rect x="2774" y="1056" width="10" height="6" fill="#00ff00"/><rect x="2776" y="1058" width="6" height="2" fill="#fff"/><rect x="2794" y="1056" width="2" height="14" fill="#00ff00"/><rect x="2790" y="1056" width="10" height="6" fill="#00ff00"/><rect x="2792" y="1058" width="6" height="2" fill="#000"/><rect x="2810" y="1056" width="2" height="32" fill="#00ff00"/><rect x="2806" y="1056" width="10" height="24" fill="#00ff00"/><rect x="2808" y="1058" width="6" height="20" fill="#fff"/><rect x="2826" y="1054" width="2" height="32" fill="#00ff00"/><rect x="2822" y="1056" width="10" height="24" fill="#00ff00"/><rect x="2824" y="1058" width="6" height="20" fill="#000"/><rect x="2842" y="1018" width="2" height="40" fill="#00ff00"/><rect x="2838" y="1022" width="10" height="36" fill="#00ff00"/><rect x="2840" y="1024" width="6" height="32" fill="#000"/><rect x="2858" y="1002" width="2" height="26" fill="#00ff00"/><rect x="2854" y="1024" width="10" height="4" fill="#00ff00"/><rect x="2874" y="1026" width="2" height="10" fill="#00ff00"/><rect x="2870" y="1026" width="10" height="10" fill="#00ff00"/><rect x="2872" y="1028" width="6" height="6" fill="#fff"/></g><rect x="1881" y="931" width="1018" height="368" fill="none" stroke="#fff" stroke-width="2"/><text x="1893" y="954" font-family="'Liberation Sans','DejaVu Sans',sans-serif" font-size="18.67" fill="#fff" text-anchor="start" xml:space="preserve">USDJPY,H4  97.88 97.91 97.81 97.85</text></svg></div><div style="left:372px;top:198px;width:2px;height:1056px;background:#808080;"></div><div style="left:374px;top:200px;width:2px;height:1054px;background:#404040;"></div><div style="left:372px;top:198px;width:2506px;height:2px;background:#808080;"></div><div style="left:374px;top:200px;width:2502px;height:2px;background:#404040;"></div><div style="left:2874px;top:200px;width:4px;height:1014px;background:#fff;"></div><div style="left:376px;top:1210px;width:2502px;height:46px;background:#e4e4e4;"></div><div style="left:376px;top:1210px;width:2502px;height:4px;background:#fff;"></div><div style="left:376px;top:1214px;width:2502px;height:2px;background:#000;"></div><div style="left:383px;top:1214px;width:162px;height:38px;background:#fff;border:2px solid #000;border-top:none;box-sizing:border-box;box-shadow:2px 2px 0 #a0a0a0;"></div><div style="left:0px;top:1252px;width:372px;height:2px;background:#808080;"></div><div style="left:0px;top:1254px;width:2878px;height:2px;background:#fff;"></div><div class="t" style="top:1218.5px;font-size:22px;line-height:26px;color:#000;letter-spacing:-0.1px;left:403.5px;">EURUSD,H4</div><div class="t" style="top:1218.5px;font-size:22px;line-height:26px;color:#404040;letter-spacing:-0.1px;left:562.5px;">USDCHF,H4</div><div style="left:704px;top:1221px;width:2px;height:26px;background:#404040;"></div><div class="t" style="top:1218.5px;font-size:22px;line-height:26px;color:#404040;letter-spacing:-0.1px;left:724.5px;">GBPUSD,H4</div><div style="left:864px;top:1221px;width:2px;height:26px;background:#404040;"></div><div class="t" style="top:1218.5px;font-size:22px;line-height:26px;color:#404040;letter-spacing:0.2px;left:882.5px;">USDJPY,H4</div><div style="left:1016px;top:1221px;width:2px;height:26px;background:#404040;"></div><svg style="left:2814px;top:1226px;" width="6" height="12" viewBox="0 0 6 12"><path d="M6 0V12L0 6Z" fill="#868686"/></svg><svg style="left:2852px;top:1226px;" width="6" height="12" viewBox="0 0 6 12"><path d="M0 0V12L6 6Z" fill="#868686"/></svg><div style="left:0px;top:1290px;width:26px;height:230px;background:linear-gradient(#b2b2b2 0,#909090 45%,#868686 100%);"></div><svg style="left:9px;top:1269px;shape-rendering:crispEdges;" width="8" height="8" viewBox="0 0 8 8"><path d="M0 0h2v2h-2zM6 0h2v2h-2zM2 2h4v4h-4zM0 6h2v2h-2zM6 6h2v2h-2z" fill="#000"/></svg><div class="t" style="left:0;top:1520px;width:230px;height:26px;line-height:26px;font-size:22px;color:#d0d0d0;transform-origin:0 0;transform:rotate(-90deg);padding-left:7px;letter-spacing:0.9px">Терминал</div><div style="left:30px;top:1262px;width:2840px;height:216px;background:#fff;"></div><div style="left:28px;top:1262px;width:2844px;height:2px;background:#808080;"></div><div style="left:28px;top:1262px;width:2px;height:256px;background:#808080;"></div><div style="left:30px;top:1264px;width:2808px;height:34px;background:#e4e4e4;"></div><div style="left:30px;top:1264px;width:511px;height:34px;box-shadow:inset -2px -2px 0 #404040,inset 2px 2px 0 #fff,inset -4px -4px 0 #808080;"></div><div style="left:541px;top:1264px;width:1937px;height:34px;box-shadow:inset -2px -2px 0 #404040,inset 2px 2px 0 #fff,inset -4px -4px 0 #808080;"></div><div style="left:2478px;top:1264px;width:199px;height:34px;box-shadow:inset -2px -2px 0 #404040,inset 2px 2px 0 #fff,inset -4px -4px 0 #808080;"></div><div style="left:2677px;top:1264px;width:161px;height:34px;box-shadow:inset -2px -2px 0 #404040,inset 2px 2px 0 #fff,inset -4px -4px 0 #808080;"></div><div class="t" style="top:1268.5px;font-size:22px;line-height:26px;color:#000;left:43.5px;">Имя</div><div class="t" style="top:1268.5px;font-size:22px;line-height:26px;color:#000;left:553.5px;">Описание</div><div class="t" style="top:1268.5px;font-size:22px;line-height:26px;color:#000;left:2491.5px;">Рейтинг</div><div class="t" style="top:1268.5px;font-size:22px;line-height:26px;color:#000;left:2729.5px;">Дата</div><svg style="left:2806px;top:1274px;" width="16" height="14" viewBox="0 0 16 14"><path d="M1 1H15" stroke="#808080" stroke-width="2"/><path d="M1 1L8 13" stroke="#808080" stroke-width="2"/><path d="M15 1L8 13" stroke="#fff" stroke-width="2"/></svg><div style="left:0;top:0;width:2878px;height:1478px;overflow:hidden"><div style="left:30px;top:1336px;width:2808px;height:2px;background:#c8c8c8;"></div><svg style="left:38px;top:1308px;" width="22" height="22" viewBox="0 0 22 22"><rect x="0" y="0" width="21" height="21" fill="#e6c030"/><rect x="1.5" y="1.5" width="18" height="18" fill="#f8e888"/><path d="M2 19.5H19.5V2" stroke="#d0a418" stroke-width="2" fill="none"/><path d="M15 5Q11.5 4 11 8L9.5 15Q9 17 6 16.5M7 10H15" stroke="#50380a" stroke-width="2.2" fill="none"/></svg><div class="t" style="top:1306.5px;font-size:22px;line-height:26px;color:#000;letter-spacing:-0.1px;left:68.5px;">Divergence</div><div class="t" style="top:1306.5px;font-size:22px;line-height:26px;color:#000;left:543.5px;">Индикатор показывающий дивергенцию</div><svg style="left:2485px;top:1306px;" width="22" height="22" viewBox="0 0 22 22"><polygon points="10.5,1.0 13.7,6.6 20.0,7.9 15.6,12.7 16.4,19.1 10.5,16.4 4.6,19.1 5.4,12.7 1.0,7.9 7.3,6.6" fill="#f5e06c" stroke="#c09636" stroke-width="2.4" stroke-linejoin="round"/></svg><svg style="left:2521px;top:1306px;" width="22" height="22" viewBox="0 0 22 22"><polygon points="10.5,1.0 13.7,6.6 20.0,7.9 15.6,12.7 16.4,19.1 10.5,16.4 4.6,19.1 5.4,12.7 1.0,7.9 7.3,6.6" fill="#f5e06c" stroke="#c09636" stroke-width="2.4" stroke-linejoin="round"/></svg><svg style="left:2556px;top:1306px;" width="22" height="22" viewBox="0 0 22 22"><polygon points="10.5,1.0 13.7,6.6 20.0,7.9 15.6,12.7 16.4,19.1 10.5,16.4 4.6,19.1 5.4,12.7 1.0,7.9 7.3,6.6" fill="#ececec" stroke="#a2a2a2" stroke-width="2.4" stroke-linejoin="round"/></svg><svg style="left:2592px;top:1306px;" width="22" height="22" viewBox="0 0 22 22"><polygon points="10.5,1.0 13.7,6.6 20.0,7.9 15.6,12.7 16.4,19.1 10.5,16.4 4.6,19.1 5.4,12.7 1.0,7.9 7.3,6.6" fill="#ececec" stroke="#a2a2a2" stroke-width="2.4" stroke-linejoin="round"/></svg><svg style="left:2628px;top:1306px;" width="22" height="22" viewBox="0 0 22 22"><polygon points="10.5,1.0 13.7,6.6 20.0,7.9 15.6,12.7 16.4,19.1 10.5,16.4 4.6,19.1 5.4,12.7 1.0,7.9 7.3,6.6" fill="#ececec" stroke="#a2a2a2" stroke-width="2.4" stroke-linejoin="round"/></svg><div class="t" style="top:1306.5px;font-size:22px;line-height:26px;color:#000;letter-spacing:-0.15px;right:49px;">2020.12.12</div><div style="left:30px;top:1338px;width:2808px;height:38px;background:#ebebeb;"></div><div style="left:30px;top:1376px;width:2808px;height:2px;background:#c8c8c8;"></div><svg style="left:36px;top:1348px;" width="26" height="22" viewBox="0 0 26 22"><path d="M2 1.5H15V5H12V16H23V20.5H7V5H2Z" fill="#f4d870" stroke="#c09018" stroke-width="2"/><path d="M13 17H22" stroke="#fbeeb0" stroke-width="1.5"/></svg><div class="t" style="top:1346.5px;font-size:22px;line-height:26px;color:#000;letter-spacing:0.0px;left:68.5px;">BEST CORRELATION</div><div class="t" style="top:1346.5px;font-size:22px;line-height:26px;color:#000;left:543.5px;">Скрипт выводит отсортированную информацию о корреляции по всем инструментам счета.</div><svg style="left:2485px;top:1346px;" width="22" height="22" viewBox="0 0 22 22"><polygon points="10.5,1.0 13.7,6.6 20.0,7.9 15.6,12.7 16.4,19.1 10.5,16.4 4.6,19.1 5.4,12.7 1.0,7.9 7.3,6.6" fill="#f5e06c" stroke="#c09636" stroke-width="2.4" stroke-linejoin="round"/></svg><svg style="left:2521px;top:1346px;" width="22" height="22" viewBox="0 0 22 22"><polygon points="10.5,1.0 13.7,6.6 20.0,7.9 15.6,12.7 16.4,19.1 10.5,16.4 4.6,19.1 5.4,12.7 1.0,7.9 7.3,6.6" fill="#f5e06c" stroke="#c09636" stroke-width="2.4" stroke-linejoin="round"/></svg><svg style="left:2556px;top:1346px;" width="22" height="22" viewBox="0 0 22 22"><polygon points="10.5,1.0 13.7,6.6 20.0,7.9 15.6,12.7 16.4,19.1 10.5,16.4 4.6,19.1 5.4,12.7 1.0,7.9 7.3,6.6" fill="#f5e06c" stroke="#c09636" stroke-width="2.4" stroke-linejoin="round"/></svg><svg style="left:2592px;top:1346px;" width="22" height="22" viewBox="0 0 22 22"><polygon points="10.5,1.0 13.7,6.6 20.0,7.9 15.6,12.7 16.4,19.1 10.5,16.4 4.6,19.1 5.4,12.7 1.0,7.9 7.3,6.6" fill="#f5e06c" stroke="#c09636" stroke-width="2.4" stroke-linejoin="round"/></svg><svg style="left:2628px;top:1346px;" width="22" height="22" viewBox="0 0 22 22"><polygon points="10.5,1.0 13.7,6.6 20.0,7.9 15.6,12.7 16.4,19.1 10.5,16.4 4.6,19.1 5.4,12.7 1.0,7.9 7.3,6.6" fill="#ececec" stroke="#a2a2a2" stroke-width="2.4" stroke-linejoin="round"/></svg><div class="t" style="top:1346.5px;font-size:22px;line-height:26px;color:#000;letter-spacing:-0.15px;right:49px;">2020.12.11</div><div style="left:30px;top:1416px;width:2808px;height:2px;background:#c8c8c8;"></div><svg style="left:38px;top:1388px;" width="22" height="22" viewBox="0 0 22 22"><rect x="0" y="0" width="21" height="21" fill="#e6c030"/><rect x="1.5" y="1.5" width="18" height="18" fill="#f8e888"/><path d="M2 19.5H19.5V2" stroke="#d0a418" stroke-width="2" fill="none"/><path d="M15 5Q11.5 4 11 8L9.5 15Q9 17 6 16.5M7 10H15" stroke="#50380a" stroke-width="2.2" fill="none"/></svg><div class="t" style="top:1386.5px;font-size:22px;line-height:26px;color:#000;left:68.5px;">Индикатор экстремумов по Вильямсу</div><div class="t" style="top:1386.5px;font-size:22px;line-height:26px;color:#000;letter-spacing:-0.52px;left:543.5px;">Краткое описание:По Вильямсу краткосрочные экстремумы - экстремумы между барами, среднесрочные экстремумы - экстремумы между краткосрочными экстремумами, долгосрочные э...</div><svg style="left:2485px;top:1386px;" width="22" height="22" viewBox="0 0 22 22"><polygon points="10.5,1.0 13.7,6.6 20.0,7.9 15.6,12.7 16.4,19.1 10.5,16.4 4.6,19.1 5.4,12.7 1.0,7.9 7.3,6.6" fill="#f5e06c" stroke="#c09636" stroke-width="2.4" stroke-linejoin="round"/></svg><svg style="left:2521px;top:1386px;" width="22" height="22" viewBox="0 0 22 22"><polygon points="10.5,1.0 13.7,6.6 20.0,7.9 15.6,12.7 16.4,19.1 10.5,16.4 4.6,19.1 5.4,12.7 1.0,7.9 7.3,6.6" fill="#f5e06c" stroke="#c09636" stroke-width="2.4" stroke-linejoin="round"/></svg><svg style="left:2556px;top:1386px;" width="22" height="22" viewBox="0 0 22 22"><polygon points="10.5,1.0 13.7,6.6 20.0,7.9 15.6,12.7 16.4,19.1 10.5,16.4 4.6,19.1 5.4,12.7 1.0,7.9 7.3,6.6" fill="#f5e06c" stroke="#c09636" stroke-width="2.4" stroke-linejoin="round"/></svg><svg style="left:2592px;top:1386px;" width="22" height="22" viewBox="0 0 22 22"><polygon points="10.5,1.0 13.7,6.6 20.0,7.9 15.6,12.7 16.4,19.1 10.5,16.4 4.6,19.1 5.4,12.7 1.0,7.9 7.3,6.6" fill="#ececec" stroke="#a2a2a2" stroke-width="2.4" stroke-linejoin="round"/></svg><svg style="left:2628px;top:1386px;" width="22" height="22" viewBox="0 0 22 22"><polygon points="10.5,1.0 13.7,6.6 20.0,7.9 15.6,12.7 16.4,19.1 10.5,16.4 4.6,19.1 5.4,12.7 1.0,7.9 7.3,6.6" fill="#ececec" stroke="#a2a2a2" stroke-width="2.4" stroke-linejoin="round"/></svg><div class="t" style="top:1386.5px;font-size:22px;line-height:26px;color:#000;letter-spacing:-0.15px;right:49px;">2020.12.03</div><div style="left:30px;top:1418px;width:2808px;height:38px;background:#ebebeb;"></div><div style="left:30px;top:1456px;width:2808px;height:2px;background:#c8c8c8;"></div><svg style="left:38px;top:1428px;" width="22" height="22" viewBox="0 0 22 22"><rect x="0" y="0" width="21" height="21" fill="#e6c030"/><rect x="1.5" y="1.5" width="18" height="18" fill="#f8e888"/><path d="M2 19.5H19.5V2" stroke="#d0a418" stroke-width="2" fill="none"/><path d="M15 5Q11.5 4 11 8L9.5 15Q9 17 6 16.5M7 10H15" stroke="#50380a" stroke-width="2.2" fill="none"/></svg><div class="t" style="top:1426.5px;font-size:22px;line-height:26px;color:#000;left:68.5px;">Цвета Дней</div><div class="t" style="top:1426.5px;font-size:22px;line-height:26px;color:#000;left:543.5px;">Добавление цветов по дням недели</div><svg style="left:2485px;top:1426px;" width="22" height="22" viewBox="0 0 22 22"><polygon points="10.5,1.0 13.7,6.6 20.0,7.9 15.6,12.7 16.4,19.1 10.5,16.4 4.6,19.1 5.4,12.7 1.0,7.9 7.3,6.6" fill="#f5e06c" stroke="#c09636" stroke-width="2.4" stroke-linejoin="round"/></svg><svg style="left:2521px;top:1426px;" width="22" height="22" viewBox="0 0 22 22"><polygon points="10.5,1.0 13.7,6.6 20.0,7.9 15.6,12.7 16.4,19.1 10.5,16.4 4.6,19.1 5.4,12.7 1.0,7.9 7.3,6.6" fill="#f5e06c" stroke="#c09636" stroke-width="2.4" stroke-linejoin="round"/></svg><svg style="left:2556px;top:1426px;" width="22" height="22" viewBox="0 0 22 22"><polygon points="10.5,1.0 13.7,6.6 20.0,7.9 15.6,12.7 16.4,19.1 10.5,16.4 4.6,19.1 5.4,12.7 1.0,7.9 7.3,6.6" fill="#f5e06c" stroke="#c09636" stroke-width="2.4" stroke-linejoin="round"/></svg><svg style="left:2592px;top:1426px;" width="22" height="22" viewBox="0 0 22 22"><polygon points="10.5,1.0 13.7,6.6 20.0,7.9 15.6,12.7 16.4,19.1 10.5,16.4 4.6,19.1 5.4,12.7 1.0,7.9 7.3,6.6" fill="#f5e06c" stroke="#c09636" stroke-width="2.4" stroke-linejoin="round"/></svg><svg style="left:2628px;top:1426px;" width="22" height="22" viewBox="0 0 22 22"><polygon points="10.5,1.0 13.7,6.6 20.0,7.9 15.6,12.7 16.4,19.1 10.5,16.4 4.6,19.1 5.4,12.7 1.0,7.9 7.3,6.6" fill="#ececec" stroke="#a2a2a2" stroke-width="2.4" stroke-linejoin="round"/></svg><div class="t" style="top:1426.5px;font-size:22px;line-height:26px;color:#000;letter-spacing:-0.15px;right:49px;">2020.10.29</div><div style="left:30px;top:1496px;width:2808px;height:2px;background:#c8c8c8;"></div><svg style="left:38px;top:1468px;" width="22" height="22" viewBox="0 0 22 22"><rect x="0" y="0" width="21" height="21" fill="#e6c030"/><rect x="1.5" y="1.5" width="18" height="18" fill="#f8e888"/><path d="M2 19.5H19.5V2" stroke="#d0a418" stroke-width="2" fill="none"/><path d="M15 5Q11.5 4 11 8L9.5 15Q9 17 6 16.5M7 10H15" stroke="#50380a" stroke-width="2.2" fill="none"/></svg><div class="t" style="top:1466.5px;font-size:22px;line-height:26px;color:#000;letter-spacing:-0.1px;left:68.5px;">Delta2MCH</div><div class="t" style="top:1466.5px;font-size:22px;line-height:26px;color:#000;left:543.5px;">Индикатор расчета дельты пользуясь</div><svg style="left:2485px;top:1466px;" width="22" height="22" viewBox="0 0 22 22"><polygon points="10.5,1.0 13.7,6.6 20.0,7.9 15.6,12.7 16.4,19.1 10.5,16.4 4.6,19.1 5.4,12.7 1.0,7.9 7.3,6.6" fill="#f5e06c" stroke="#c09636" stroke-width="2.4" stroke-linejoin="round"/></svg><svg style="left:2521px;top:1466px;" width="22" height="22" viewBox="0 0 22 22"><polygon points="10.5,1.0 13.7,6.6 20.0,7.9 15.6,12.7 16.4,19.1 10.5,16.4 4.6,19.1 5.4,12.7 1.0,7.9 7.3,6.6" fill="#f5e06c" stroke="#c09636" stroke-width="2.4" stroke-linejoin="round"/></svg><svg style="left:2556px;top:1466px;" width="22" height="22" viewBox="0 0 22 22"><polygon points="10.5,1.0 13.7,6.6 20.0,7.9 15.6,12.7 16.4,19.1 10.5,16.4 4.6,19.1 5.4,12.7 1.0,7.9 7.3,6.6" fill="#f5e06c" stroke="#c09636" stroke-width="2.4" stroke-linejoin="round"/></svg><svg style="left:2592px;top:1466px;" width="22" height="22" viewBox="0 0 22 22"><polygon points="10.5,1.0 13.7,6.6 20.0,7.9 15.6,12.7 16.4,19.1 10.5,16.4 4.6,19.1 5.4,12.7 1.0,7.9 7.3,6.6" fill="#ececec" stroke="#a2a2a2" stroke-width="2.4" stroke-linejoin="round"/></svg><svg style="left:2628px;top:1466px;" width="22" height="22" viewBox="0 0 22 22"><polygon points="10.5,1.0 13.7,6.6 20.0,7.9 15.6,12.7 16.4,19.1 10.5,16.4 4.6,19.1 5.4,12.7 1.0,7.9 7.3,6.6" fill="#ececec" stroke="#a2a2a2" stroke-width="2.4" stroke-linejoin="round"/></svg><div class="t" style="top:1466.5px;font-size:22px;line-height:26px;color:#000;letter-spacing:-0.15px;right:49px;">2020.10.20</div><div style="left:539px;top:1298px;width:2px;height:180px;background:#c8c8c8;"></div><div style="left:2476px;top:1298px;width:2px;height:180px;background:#c8c8c8;"></div><div style="left:2676px;top:1298px;width:2px;height:180px;background:#c8c8c8;"></div></div><div style="left:2838px;top:1264px;width:32px;height:214px;background-image:conic-gradient(#fff 25%,#e4e4e4 0 50%,#fff 0 75%,#e4e4e4 0);background-size:4px 4px;"></div><div style="left:2838px;top:1264px;width:32px;height:32px;background:#e4e4e4;box-shadow:inset -2px -2px 0 #404040,inset 2px 2px 0 #fff,inset -4px -4px 0 #808080,inset 4px 4px 0 #e4e4e4;"></div><svg style="left:2846px;top:1275px;shape-rendering:crispEdges;" width="14" height="8" viewBox="0 0 14 8"><path d="M0 8H14V6H12V4H10V2H8V0H6V2H4V4H2V6H0Z" fill="#000"/></svg><div style="left:2838px;top:1296px;width:32px;height:12px;background:#e4e4e4;box-shadow:inset -2px -2px 0 #404040,inset 2px 2px 0 #fff,inset -4px -4px 0 #808080,inset 4px 4px 0 #e4e4e4;"></div><div style="left:2838px;top:1448px;width:32px;height:30px;background:#e4e4e4;box-shadow:inset -2px -2px 0 #404040,inset 2px 2px 0 #fff,inset -4px -4px 0 #808080,inset 4px 4px 0 #e4e4e4;"></div><svg style="left:2846px;top:1458px;shape-rendering:crispEdges;" width="14" height="8" viewBox="0 0 14 8"><path d="M0 0H14V2H12V4H10V6H8V8H6V6H4V4H2V2H0Z" fill="#000"/></svg><div style="left:2870px;top:1262px;width:8px;height:260px;background:#e4e4e4;"></div><div style="left:2872px;top:1262px;width:2px;height:258px;background:#fff;"></div><div style="left:30px;top:1478px;width:2842px;height:42px;background:#e4e4e4;"></div><div style="left:30px;top:1478px;width:2840px;height:2px;background:#000;"></div><div style="left:519px;top:1478px;width:158px;height:35px;background:#fff;border:2px solid #000;border-top:none;box-sizing:border-box;box-shadow:2px 2px 0 #a0a0a0;"></div><div class="t" style="top:1483.0px;font-size:22px;line-height:26px;color:#404040;left:51.5px;">Алерты</div><div style="left:150px;top:1485px;width:2px;height:24px;background:#404040;"></div><div class="t" style="top:1483.0px;font-size:22px;line-height:26px;color:#404040;left:167.5px;">Почта</div><div class="t" style="top:1491.0px;font-size:17px;line-height:20px;color:#ff0000;left:232.5px;">7</div><div style="left:264px;top:1485px;width:2px;height:24px;background:#404040;"></div><div class="t" style="top:1483.0px;font-size:22px;line-height:26px;color:#404040;left:281.5px;">Маркет</div><div style="left:376px;top:1485px;width:2px;height:24px;background:#404040;"></div><div class="t" style="top:1483.0px;font-size:22px;line-height:26px;color:#404040;left:393.5px;">Статьи</div><div class="t" style="top:1491.0px;font-size:17px;line-height:20px;color:#ff0000;left:468.5px;">997</div><div class="t" style="top:1483.0px;font-size:22px;line-height:26px;color:#000;left:537.5px;">Библиотека</div><div class="t" style="top:1483.0px;font-size:22px;line-height:26px;color:#404040;left:693.5px;">Эксперты</div><div style="left:812px;top:1485px;width:2px;height:24px;background:#404040;"></div><div class="t" style="top:1483.0px;font-size:22px;line-height:26px;color:#404040;left:829.5px;">Журнал</div><div style="left:932px;top:1485px;width:2px;height:24px;background:#404040;"></div><div style="left:28px;top:1518px;width:2846px;height:2px;background:#fff;"></div><div style="left:0px;top:1524px;width:2878px;height:2px;background:#808080;"></div><div style="left:0px;top:1526px;width:2878px;height:2px;background:#fff;"></div><div class="t" style="top:1541.5px;font-size:22px;line-height:26px;color:#000;left:0.5px;">Для вызова справки нажмите F1</div><div style="left:1520px;top:1534px;width:2px;height:34px;background:#808080;"></div><div style="left:1522px;top:1534px;width:2px;height:34px;background:#fff;"></div><div style="left:1742px;top:1534px;width:2px;height:34px;background:#808080;"></div><div style="left:1744px;top:1534px;width:2px;height:34px;background:#fff;"></div><div style="left:1942px;top:1534px;width:2px;height:34px;background:#808080;"></div><div style="left:1944px;top:1534px;width:2px;height:34px;background:#fff;"></div><div style="left:2082px;top:1534px;width:2px;height:34px;background:#808080;"></div><div style="left:2084px;top:1534px;width:2px;height:34px;background:#fff;"></div><div style="left:2220px;top:1534px;width:2px;height:34px;background:#808080;"></div><div style="left:2222px;top:1534px;width:2px;height:34px;background:#fff;"></div><div style="left:2356px;top:1534px;width:2px;height:34px;background:#808080;"></div><div style="left:2358px;top:1534px;width:2px;height:34px;background:#fff;"></div><div style="left:2494px;top:1534px;width:2px;height:34px;background:#808080;"></div><div style="left:2496px;top:1534px;width:2px;height:34px;background:#fff;"></div><div style="left:2625px;top:1534px;width:2px;height:34px;background:#808080;"></div><div style="left:2627px;top:1534px;width:2px;height:34px;background:#fff;"></div><div class="t" style="top:1541.5px;font-size:22px;line-height:26px;color:#000;letter-spacing:-0.1px;left:1529.5px;">Default</div><div class="t" style="top:1541.5px;font-size:22px;line-height:26px;color:#000;letter-spacing:-0.1px;left:1751.5px;">00/00/0000 00:00</div><div class="t" style="top:1541.5px;font-size:22px;line-height:26px;color:#000;letter-spacing:-0.1px;left:1951.5px;">O: 000.000</div><div class="t" style="top:1541.5px;font-size:22px;line-height:26px;color:#000;letter-spacing:-0.1px;left:2091.5px;">H: 000.000</div><div class="t" style="top:1541.5px;font-size:22px;line-height:26px;color:#000;letter-spacing:-0.1px;left:2228.5px;">L: 000.000</div><div class="t" style="top:1541.5px;font-size:22px;line-height:26px;color:#000;letter-spacing:-0.1px;left:2365.5px;">C: 000.000</div><div class="t" style="top:1541.5px;font-size:22px;line-height:26px;color:#000;letter-spacing:-0.1px;left:2503.5px;">V: 00000</div><div class="t" style="top:1541.5px;font-size:22px;line-height:26px;color:#000;left:2687.5px;">Нет связи</div><svg style="left:2636px;top:1538px;shape-rendering:crispEdges;" width="46" height="26" viewBox="0 0 46 26"><rect x="0" y="0" width="4" height="26" fill="#8c1a0c"/><rect x="6" y="0" width="4" height="26" fill="#8c1a0c"/><rect x="12" y="0" width="4" height="26" fill="#8c1a0c"/><rect x="18" y="0" width="4" height="26" fill="#8c1a0c"/><rect x="24" y="0" width="4" height="26" fill="#8c1a0c"/><rect x="30" y="0" width="4" height="26" fill="#8c1a0c"/><rect x="36" y="0" width="4" height="26" fill="#8c1a0c"/><rect x="42" y="0" width="4" height="26" fill="#8c1a0c"/><rect x="0" y="18" width="4" height="2" fill="#e4e4e4"/><rect x="6" y="16" width="4" height="2" fill="#e4e4e4"/><rect x="12" y="18" width="4" height="2" fill="#e4e4e4"/><rect x="18" y="6" width="4" height="2" fill="#e4e4e4"/><rect x="24" y="8" width="4" height="2" fill="#e4e4e4"/><rect x="30" y="4" width="4" height="2" fill="#e4e4e4"/><rect x="36" y="6" width="4" height="2" fill="#e4e4e4"/><rect x="6" y="22" width="4" height="2" fill="#e4e4e4"/><rect x="24" y="2" width="4" height="2" fill="#e4e4e4"/><rect x="36" y="2" width="4" height="2" fill="#e4e4e4"/></svg><svg style="left:0px;top:1556px;" width="18" height="16" viewBox="0 0 18 16"><path d="M0 2Q3 12 16 16H0Z" fill="#48040e"/></svg><svg style="left:2854px;top:1548px;" width="24" height="24" viewBox="0 0 24 24"><path d="M24 2Q22 19 2 24H24Z" fill="#e8e8e8"/><path d="M24 5Q22 20 6 24H24Z" fill="#40060f"/></svg><div style="left:892px;top:376px;width:1092px;height:800px;border-radius:21px;overflow:hidden;box-shadow:0 0 0 1px rgba(0,0,0,.25),0 28px 70px rgba(0,0,0,.5),0 0 24px rgba(0,0,0,.3);"><div style="left:0px;top:0px;width:1092px;height:56px;background:#f0f0f0;"></div><div style="left:0px;top:56px;width:1092px;height:1px;background:#d4d4d4;"></div><div style="left:0px;top:57px;width:1092px;height:113px;background:#fff;"></div><div style="left:0px;top:170px;width:1092px;height:2px;background:#808080;"></div><div style="left:0px;top:172px;width:1092px;height:2px;background:#fff;"></div><div style="left:0px;top:174px;width:1092px;height:626px;background:#e4e4e4;"></div><div style="left:16px;top:16px;width:24px;height:24px;border-radius:50%;background:#fe5f57;box-shadow:inset 0 0 0 1px #e2463f;"></div><div style="left:56px;top:16px;width:24px;height:24px;border-radius:50%;background:#d4d4d4;box-shadow:inset 0 0 0 1px #c0c0c0;"></div><div style="left:96px;top:16px;width:24px;height:24px;border-radius:50%;background:#d4d4d4;box-shadow:inset 0 0 0 1px #c0c0c0;"></div></div><div class="t" style="top:453.5px;font-size:22px;line-height:26px;color:#000;font-weight:700;letter-spacing:0.35px;left:930.5px;">Торговые сервера</div><div class="t" style="top:482.5px;font-size:22px;line-height:26px;color:#000;left:969.5px;">Выберите наиболее быстрый торговый сервер:</div><div style="left:930px;top:588px;width:1020px;height:406px;background:#fff;box-shadow:inset -2px -2px 0 #fff,inset 2px 2px 0 #808080,inset -4px -4px 0 #e4e4e4,inset 4px 4px 0 #404040;"></div><div style="left:934px;top:592px;width:1010px;height:32px;background:#e4e4e4;"></div><div style="left:934px;top:592px;width:352px;height:32px;box-shadow:inset -2px -2px 0 #808080,inset 2px 2px 0 #fff;"></div><div style="left:1286px;top:592px;width:506px;height:32px;box-shadow:inset -2px -2px 0 #808080,inset 2px 2px 0 #fff;"></div><div style="left:1792px;top:592px;width:152px;height:32px;box-shadow:inset -2px -2px 0 #808080,inset 2px 2px 0 #fff;"></div><div class="t" style="top:595.5px;font-size:22px;line-height:26px;color:#000;left:943.5px;">Адрес</div><div class="t" style="top:595.5px;font-size:22px;line-height:26px;color:#000;left:1296.5px;">Компания</div><div class="t" style="top:595.5px;font-size:22px;line-height:26px;color:#000;right:949px;">Пинг</div><div style="left:1286px;top:626px;width:2px;height:40px;background:#c8c8c8;"></div><div style="left:1792px;top:626px;width:2px;height:40px;background:#c8c8c8;"></div><svg style="left:940px;top:628px;" width="30" height="32" viewBox="0 0 30 32"><path d="M2 1H20V30H2Z" fill="#3c8ce0" stroke="#1c5cb0" stroke-width="2"/><path d="M6 6H16M6 11H16" stroke="#bfe0ff" stroke-width="2.5"/><circle cx="20" cy="22" r="9" fill="#3cb83c" stroke="#fff" stroke-width="2"/><path d="M20 17V26M16 22L20 26.5L24 22" stroke="#fff" stroke-width="2.5" fill="none"/></svg><div class="t" style="top:636.0px;font-size:22px;line-height:26px;color:#000;letter-spacing:-0.1px;left:973.5px;">MetaQuotes-Demo</div><div class="t" style="top:636.0px;font-size:22px;line-height:26px;color:#000;letter-spacing:-0.1px;left:1291.5px;">MetaQuotes Software Corp.</div><div class="t" style="top:636.0px;font-size:22px;line-height:26px;color:#000;right:941px;">37.02 ms</div><div style="left:934px;top:665px;width:1012px;height:41px;background:#d4dcf4;"></div><svg style="left:940px;top:672px;" width="24" height="24" viewBox="0 0 24 24"><circle cx="12" cy="12" r="11" fill="#5c9c1c" stroke="#4a7c14" stroke-width="1.5"/><circle cx="12" cy="12" r="8.5" fill="#7cbc34"/><path d="M12 5.5V18.5M5.5 12H18.5" stroke="#fff" stroke-width="4.5"/></svg><div style="left:968px;top:666px;width:978px;height:38px;background:#fff;border:2px solid #000;box-sizing:border-box;"></div><div class="t" style="top:672.0px;font-size:22px;line-height:26px;color:#000;letter-spacing:-0.1px;left:976.5px;">AMarkets</div><div style="left:1068px;top:672px;width:2px;height:26px;background:#000;"></div><div style="left:930px;top:1018px;width:780px;height:30px;background:#fff;box-shadow:inset -2px -2px 0 #fff,inset 2px 2px 0 #808080;"></div><div style="left:934px;top:1022px;width:772px;height:24px;background:#0a246a;"></div><div style="left:1724px;top:1010px;width:226px;height:46px;background:#e4e4e4;box-shadow:inset -2px -2px 0 #404040,inset 2px 2px 0 #fff,inset -4px -4px 0 #808080,inset 4px 4px 0 #e4e4e4;"></div><div class="t" style="top:1021.0px;font-size:22px;line-height:26px;color:#000;left:1337px;width:1000px;text-align:center;"><span class="u">С</span>канировать</div><div style="left:892px;top:1082px;width:1092px;height:2px;background:#808080;"></div><div style="left:892px;top:1084px;width:1092px;height:2px;background:#fff;"></div><div style="left:1604px;top:1106px;width:166px;height:46px;background:#e4e4e4;box-shadow:inset -2px -2px 0 #404040,inset 2px 2px 0 #fff,inset -4px -4px 0 #808080,inset 4px 4px 0 #e4e4e4;"></div><div class="t" style="top:1117.5px;font-size:22px;line-height:26px;color:#808080;left:1187px;width:1000px;text-align:center;text-shadow:2px 2px 0 #fff;"><span class="u">Д</span>алее &gt;</div><div style="left:1794px;top:1106px;width:166px;height:46px;background:#e4e4e4;border:2px solid #000;box-sizing:border-box;box-shadow:inset -2px -2px 0 #404040,inset 2px 2px 0 #fff,inset -4px -4px 0 #808080;"></div><div class="t" style="top:1117.5px;font-size:22px;line-height:26px;color:#000;left:1375.5px;width:1000px;text-align:center;">Отмена</div></body></html>
